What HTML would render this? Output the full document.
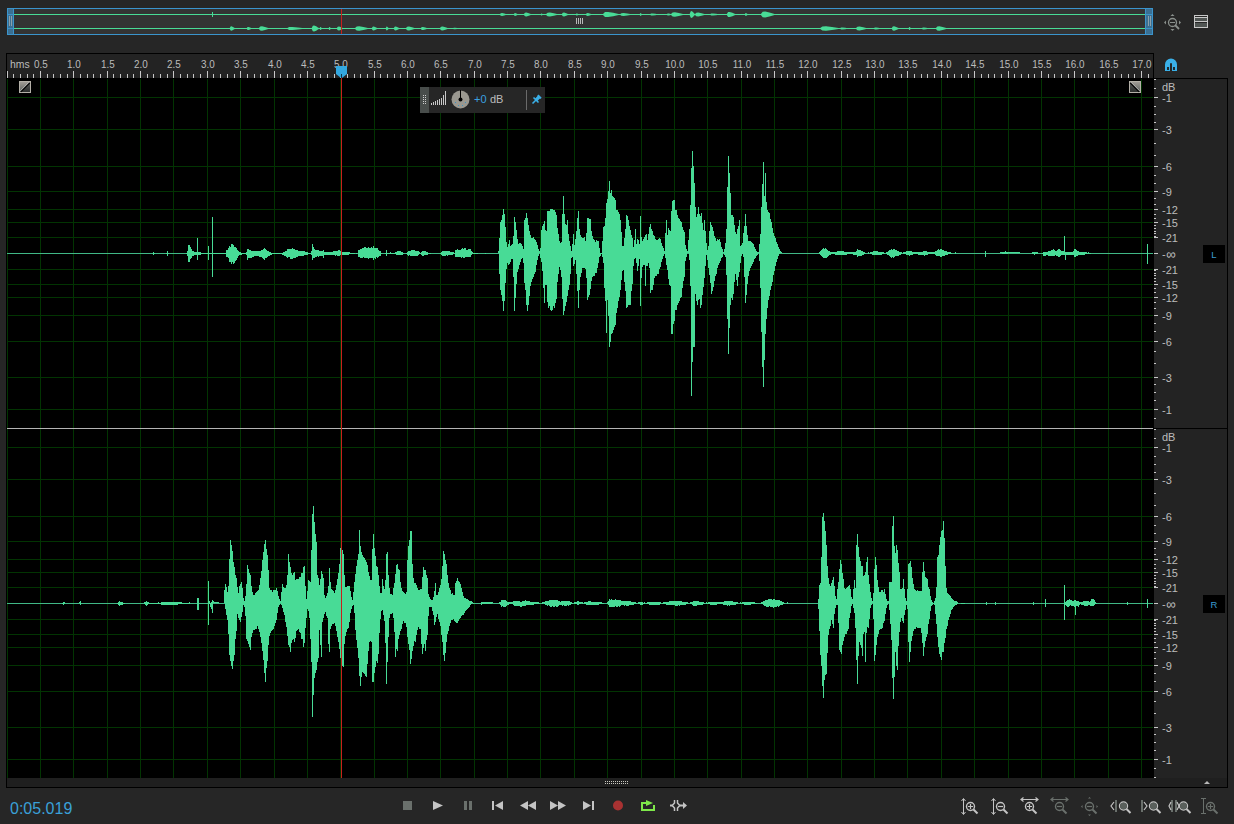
<!DOCTYPE html>
<html><head><meta charset="utf-8"><style>
html,body{margin:0;padding:0;background:#262626;width:1234px;height:824px;overflow:hidden}
svg{display:block;font-family:"Liberation Sans",sans-serif}
</style></head><body>
<svg width="1234" height="824" viewBox="0 0 1234 824" shape-rendering="crispEdges">
<rect x="7" y="8" width="1146" height="27" fill="#3a94cc" />
<rect x="8" y="9" width="1144" height="25" fill="#333333" />
<rect x="14" y="14" width="1131" height="1" fill="#48db96" />
<rect x="14" y="28" width="1131" height="1" fill="#48db96" />
<rect x="7" y="8" width="7" height="27" fill="#3a94cc" />
<rect x="8" y="9" width="5" height="5" fill="#3b6f92" />
<rect x="8" y="15" width="5" height="13" fill="#3b6f92" />
<rect x="8" y="29" width="5" height="5" fill="#3b6f92" />
<rect x="9" y="16" width="1" height="10" fill="#8aa0ac" />
<rect x="11" y="16" width="1" height="10" fill="#8aa0ac" />
<rect x="1145" y="8" width="8" height="27" fill="#3a94cc" />
<rect x="1146" y="9" width="6" height="5" fill="#3b6f92" />
<rect x="1146" y="15" width="6" height="13" fill="#3b6f92" />
<rect x="1146" y="29" width="6" height="5" fill="#3b6f92" />
<rect x="1148" y="16" width="1" height="10" fill="#8aa0ac" />
<rect x="1150" y="16" width="1" height="10" fill="#8aa0ac" />
<path d="M499.5,14.5 L500.8,13.2 L502.1,13.0 L504.2,13.4 L505.9,14.1 L508.0,14.5 L505.9,14.9 L504.2,15.6 L502.1,16.0 L500.8,15.8Z" fill="#48db96" shape-rendering="geometricPrecision"/>
<path d="M513.5,14.5 L514.5,13.2 L515.2,13.0 L516.4,13.4 L517.4,14.1 L519.0,14.5 L517.4,14.9 L516.4,15.6 L515.2,16.0 L514.5,15.8Z" fill="#48db96" shape-rendering="geometricPrecision"/>
<path d="M523.5,14.5 L525.0,12.8 L526.4,12.6 L528.8,13.2 L530.8,13.9 L533.0,14.5 L530.8,15.1 L528.8,15.8 L526.4,16.4 L525.0,16.2Z" fill="#48db96" shape-rendering="geometricPrecision"/>
<path d="M540.5,14.5 L541.2,13.5 L541.6,13.4 L542.2,13.7 L542.7,14.2 L544.0,14.5 L542.7,14.8 L542.2,15.3 L541.6,15.6 L541.2,15.5Z" fill="#48db96" shape-rendering="geometricPrecision"/>
<path d="M545.5,14.5 L547.6,12.8 L549.9,12.6 L553.8,13.2 L557.0,13.9 L560.0,14.5 L557.0,15.1 L553.8,15.8 L549.9,16.4 L547.6,16.2Z" fill="#48db96" shape-rendering="geometricPrecision"/>
<path d="M561.5,14.5 L562.8,12.8 L564.1,12.6 L566.2,13.2 L568.0,13.9 L570.0,14.5 L568.0,15.1 L566.2,15.8 L564.1,16.4 L562.8,16.2Z" fill="#48db96" shape-rendering="geometricPrecision"/>
<path d="M575.5,14.5 L576.4,13.5 L576.9,13.4 L577.8,13.7 L578.5,14.2 L580.0,14.5 L578.5,14.8 L577.8,15.3 L576.9,15.6 L576.4,15.5Z" fill="#48db96" shape-rendering="geometricPrecision"/>
<path d="M585.5,14.5 L586.7,13.2 L587.8,13.0 L589.6,13.4 L591.1,14.1 L593.0,14.5 L591.1,14.9 L589.6,15.6 L587.8,16.0 L586.7,15.8Z" fill="#48db96" shape-rendering="geometricPrecision"/>
<path d="M602.5,14.5 L605.0,12.1 L608.1,11.9 L613.2,12.7 L617.5,13.7 L621.0,14.5 L617.5,15.3 L613.2,16.3 L608.1,17.1 L605.0,16.9Z" fill="#48db96" shape-rendering="geometricPrecision"/>
<path d="M619.5,14.5 L621.4,13.2 L623.6,13.0 L627.2,13.4 L630.2,14.1 L633.0,14.5 L630.2,14.9 L627.2,15.6 L623.6,16.0 L621.4,15.8Z" fill="#48db96" shape-rendering="geometricPrecision"/>
<path d="M639.5,14.5 L640.2,13.2 L640.6,13.0 L641.2,13.4 L641.7,14.1 L643.0,14.5 L641.7,14.9 L641.2,15.6 L640.6,16.0 L640.2,15.8Z" fill="#48db96" shape-rendering="geometricPrecision"/>
<path d="M649.5,14.5 L651.1,13.5 L652.7,13.4 L655.4,13.7 L657.6,14.2 L660.0,14.5 L657.6,14.8 L655.4,15.3 L652.7,15.6 L651.1,15.5Z" fill="#48db96" shape-rendering="geometricPrecision"/>
<path d="M666.5,14.5 L667.6,13.5 L668.5,13.4 L670.0,13.7 L671.2,14.2 L673.0,14.5 L671.2,14.8 L670.0,15.3 L668.5,15.6 L667.6,15.5Z" fill="#48db96" shape-rendering="geometricPrecision"/>
<path d="M670.5,14.5 L672.6,12.5 L674.9,12.2 L678.8,12.9 L682.0,13.8 L685.0,14.5 L682.0,15.2 L678.8,16.1 L674.9,16.8 L672.6,16.5Z" fill="#48db96" shape-rendering="geometricPrecision"/>
<path d="M689.5,14.5 L690.6,11.5 L691.5,11.1 L693.0,12.1 L694.2,13.5 L696.0,14.5 L694.2,15.5 L693.0,16.9 L691.5,17.9 L690.6,17.5Z" fill="#48db96" shape-rendering="geometricPrecision"/>
<path d="M694.5,14.5 L696.3,12.8 L698.3,12.6 L701.6,13.2 L704.4,13.9 L707.0,14.5 L704.4,15.1 L701.6,15.8 L698.3,16.4 L696.3,16.2Z" fill="#48db96" shape-rendering="geometricPrecision"/>
<path d="M709.5,14.5 L711.2,13.5 L713.0,13.4 L716.0,13.7 L718.5,14.2 L721.0,14.5 L718.5,14.8 L716.0,15.3 L713.0,15.6 L711.2,15.5Z" fill="#48db96" shape-rendering="geometricPrecision"/>
<path d="M726.5,14.5 L728.1,12.1 L729.7,11.9 L732.4,12.7 L734.6,13.7 L737.0,14.5 L734.6,15.3 L732.4,16.3 L729.7,17.1 L728.1,16.9Z" fill="#48db96" shape-rendering="geometricPrecision"/>
<path d="M744.5,14.5 L745.4,13.2 L745.9,13.0 L746.8,13.4 L747.5,14.1 L749.0,14.5 L747.5,14.9 L746.8,15.6 L745.9,16.0 L745.4,15.8Z" fill="#48db96" shape-rendering="geometricPrecision"/>
<path d="M760.5,14.5 L762.7,11.8 L765.2,11.5 L769.4,12.4 L772.9,13.6 L776.0,14.5 L772.9,15.4 L769.4,16.6 L765.2,17.5 L762.7,17.2Z" fill="#48db96" shape-rendering="geometricPrecision"/>
<rect x="212" y="12" width="1" height="5" fill="#48db96" />
<path d="M229.5,28.5 L230.6,26.5 L231.5,26.2 L233.0,26.9 L234.2,27.8 L236.0,28.5 L234.2,29.2 L233.0,30.1 L231.5,30.8 L230.6,30.5Z" fill="#48db96" shape-rendering="geometricPrecision"/>
<path d="M246.5,28.5 L247.6,27.1 L248.5,27.0 L250.0,27.4 L251.2,28.1 L253.0,28.5 L251.2,28.9 L250.0,29.6 L248.5,30.0 L247.6,29.9Z" fill="#48db96" shape-rendering="geometricPrecision"/>
<path d="M258.5,28.5 L260.2,26.5 L262.0,26.2 L265.0,26.9 L267.5,27.8 L270.0,28.5 L267.5,29.2 L265.0,30.1 L262.0,30.8 L260.2,30.5Z" fill="#48db96" shape-rendering="geometricPrecision"/>
<path d="M286.5,28.5 L289.2,27.1 L292.4,27.0 L297.8,27.4 L302.3,28.1 L306.0,28.5 L302.3,28.9 L297.8,29.6 L292.4,30.0 L289.2,29.9Z" fill="#48db96" shape-rendering="geometricPrecision"/>
<path d="M311.5,28.5 L312.8,25.7 L314.1,25.4 L316.2,26.3 L317.9,27.6 L320.0,28.5 L317.9,29.4 L316.2,30.7 L314.1,31.6 L312.8,31.3Z" fill="#48db96" shape-rendering="geometricPrecision"/>
<path d="M319.5,28.5 L320.2,27.1 L320.6,27.0 L321.2,27.4 L321.7,28.1 L323.0,28.5 L321.7,28.9 L321.2,29.6 L320.6,30.0 L320.2,29.9Z" fill="#48db96" shape-rendering="geometricPrecision"/>
<path d="M328.5,28.5 L329.2,27.1 L329.6,27.0 L330.2,27.4 L330.7,28.1 L332.0,28.5 L330.7,28.9 L330.2,29.6 L329.6,30.0 L329.2,29.9Z" fill="#48db96" shape-rendering="geometricPrecision"/>
<path d="M336.5,28.5 L337.8,26.8 L339.1,26.6 L341.2,27.2 L342.9,27.9 L345.0,28.5 L342.9,29.1 L341.2,29.8 L339.1,30.4 L337.8,30.2Z" fill="#48db96" shape-rendering="geometricPrecision"/>
<path d="M354.5,28.5 L356.7,26.5 L359.2,26.2 L363.4,26.9 L366.9,27.8 L370.0,28.5 L366.9,29.2 L363.4,30.1 L359.2,30.8 L356.7,30.5Z" fill="#48db96" shape-rendering="geometricPrecision"/>
<path d="M371.5,28.5 L372.7,26.8 L373.8,26.6 L375.6,27.2 L377.1,27.9 L379.0,28.5 L377.1,29.1 L375.6,29.8 L373.8,30.4 L372.7,30.2Z" fill="#48db96" shape-rendering="geometricPrecision"/>
<path d="M385.5,28.5 L386.4,26.8 L386.9,26.6 L387.8,27.2 L388.6,27.9 L390.0,28.5 L388.6,29.1 L387.8,29.8 L386.9,30.4 L386.4,30.2Z" fill="#48db96" shape-rendering="geometricPrecision"/>
<path d="M393.5,28.5 L394.7,26.8 L395.8,26.6 L397.6,27.2 L399.1,27.9 L401.0,28.5 L399.1,29.1 L397.6,29.8 L395.8,30.4 L394.7,30.2Z" fill="#48db96" shape-rendering="geometricPrecision"/>
<path d="M405.5,28.5 L407.2,26.8 L409.0,26.6 L412.0,27.2 L414.5,27.9 L417.0,28.5 L414.5,29.1 L412.0,29.8 L409.0,30.4 L407.2,30.2Z" fill="#48db96" shape-rendering="geometricPrecision"/>
<path d="M420.5,28.5 L421.8,27.1 L423.1,27.0 L425.2,27.4 L426.9,28.1 L429.0,28.5 L426.9,28.9 L425.2,29.6 L423.1,30.0 L421.8,29.9Z" fill="#48db96" shape-rendering="geometricPrecision"/>
<path d="M439.5,28.5 L441.1,26.8 L442.7,26.6 L445.4,27.2 L447.6,27.9 L450.0,28.5 L447.6,29.1 L445.4,29.8 L442.7,30.4 L441.1,30.2Z" fill="#48db96" shape-rendering="geometricPrecision"/>
<path d="M452.5,28.5 L453.8,27.8 L455.1,27.8 L457.2,28.0 L458.9,28.3 L461.0,28.5 L458.9,28.7 L457.2,29.0 L455.1,29.2 L453.8,29.2Z" fill="#48db96" shape-rendering="geometricPrecision"/>
<path d="M819.5,28.5 L822.4,26.5 L826.0,26.2 L832.0,26.9 L837.0,27.8 L841.0,28.5 L837.0,29.2 L832.0,30.1 L826.0,30.8 L822.4,30.5Z" fill="#48db96" shape-rendering="geometricPrecision"/>
<path d="M839.5,28.5 L841.1,27.5 L842.7,27.4 L845.4,27.7 L847.6,28.2 L850.0,28.5 L847.6,28.8 L845.4,29.3 L842.7,29.6 L841.1,29.5Z" fill="#48db96" shape-rendering="geometricPrecision"/>
<path d="M855.5,28.5 L857.4,26.8 L859.6,26.6 L863.2,27.2 L866.2,27.9 L869.0,28.5 L866.2,29.1 L863.2,29.8 L859.6,30.4 L857.4,30.2Z" fill="#48db96" shape-rendering="geometricPrecision"/>
<path d="M873.5,28.5 L874.8,27.5 L876.1,27.4 L878.2,27.7 L880.0,28.2 L882.0,28.5 L880.0,28.8 L878.2,29.3 L876.1,29.6 L874.8,29.5Z" fill="#48db96" shape-rendering="geometricPrecision"/>
<path d="M891.5,28.5 L892.8,26.5 L894.1,26.2 L896.2,26.9 L898.0,27.8 L900.0,28.5 L898.0,29.2 L896.2,30.1 L894.1,30.8 L892.8,30.5Z" fill="#48db96" shape-rendering="geometricPrecision"/>
<path d="M908.5,28.5 L909.2,27.1 L909.6,27.0 L910.2,27.4 L910.7,28.1 L912.0,28.5 L910.7,28.9 L910.2,29.6 L909.6,30.0 L909.2,29.9Z" fill="#48db96" shape-rendering="geometricPrecision"/>
<path d="M921.5,28.5 L922.8,27.5 L924.1,27.4 L926.2,27.7 L928.0,28.2 L930.0,28.5 L928.0,28.8 L926.2,29.3 L924.1,29.6 L922.8,29.5Z" fill="#48db96" shape-rendering="geometricPrecision"/>
<path d="M935.5,28.5 L937.3,26.5 L939.3,26.2 L942.6,26.9 L945.4,27.8 L948.0,28.5 L945.4,29.2 L942.6,30.1 L939.3,30.8 L937.3,30.5Z" fill="#48db96" shape-rendering="geometricPrecision"/>
<rect x="341" y="9" width="1" height="25" fill="#c8201c" />
<rect x="576" y="18" width="1" height="6" fill="#b8b8b8" />
<rect x="578" y="18" width="1" height="6" fill="#b8b8b8" />
<rect x="580" y="18" width="1" height="6" fill="#b8b8b8" />
<rect x="582" y="18" width="1" height="6" fill="#b8b8b8" />
<rect x="6" y="53" width="1148" height="1" fill="#000" />
<rect x="7" y="54" width="1146" height="24" fill="#232323" />
<rect x="1153" y="53" width="1" height="26" fill="#000" />
<rect x="7" y="71" width="1" height="7" fill="#c8c8c8" />
<rect x="13" y="74" width="1" height="4" fill="#c8c8c8" />
<rect x="20" y="74" width="1" height="4" fill="#c8c8c8" />
<rect x="27" y="74" width="1" height="4" fill="#c8c8c8" />
<rect x="33" y="74" width="1" height="4" fill="#c8c8c8" />
<rect x="40" y="71" width="1" height="7" fill="#c8c8c8" />
<rect x="47" y="74" width="1" height="4" fill="#c8c8c8" />
<rect x="53" y="74" width="1" height="4" fill="#c8c8c8" />
<rect x="60" y="74" width="1" height="4" fill="#c8c8c8" />
<rect x="67" y="74" width="1" height="4" fill="#c8c8c8" />
<rect x="73" y="71" width="1" height="7" fill="#c8c8c8" />
<rect x="80" y="74" width="1" height="4" fill="#c8c8c8" />
<rect x="87" y="74" width="1" height="4" fill="#c8c8c8" />
<rect x="93" y="74" width="1" height="4" fill="#c8c8c8" />
<rect x="100" y="74" width="1" height="4" fill="#c8c8c8" />
<rect x="107" y="71" width="1" height="7" fill="#c8c8c8" />
<rect x="113" y="74" width="1" height="4" fill="#c8c8c8" />
<rect x="120" y="74" width="1" height="4" fill="#c8c8c8" />
<rect x="127" y="74" width="1" height="4" fill="#c8c8c8" />
<rect x="133" y="74" width="1" height="4" fill="#c8c8c8" />
<rect x="140" y="71" width="1" height="7" fill="#c8c8c8" />
<rect x="147" y="74" width="1" height="4" fill="#c8c8c8" />
<rect x="153" y="74" width="1" height="4" fill="#c8c8c8" />
<rect x="160" y="74" width="1" height="4" fill="#c8c8c8" />
<rect x="167" y="74" width="1" height="4" fill="#c8c8c8" />
<rect x="173" y="71" width="1" height="7" fill="#c8c8c8" />
<rect x="180" y="74" width="1" height="4" fill="#c8c8c8" />
<rect x="187" y="74" width="1" height="4" fill="#c8c8c8" />
<rect x="193" y="74" width="1" height="4" fill="#c8c8c8" />
<rect x="200" y="74" width="1" height="4" fill="#c8c8c8" />
<rect x="207" y="71" width="1" height="7" fill="#c8c8c8" />
<rect x="213" y="74" width="1" height="4" fill="#c8c8c8" />
<rect x="220" y="74" width="1" height="4" fill="#c8c8c8" />
<rect x="227" y="74" width="1" height="4" fill="#c8c8c8" />
<rect x="234" y="74" width="1" height="4" fill="#c8c8c8" />
<rect x="240" y="71" width="1" height="7" fill="#c8c8c8" />
<rect x="247" y="74" width="1" height="4" fill="#c8c8c8" />
<rect x="254" y="74" width="1" height="4" fill="#c8c8c8" />
<rect x="260" y="74" width="1" height="4" fill="#c8c8c8" />
<rect x="267" y="74" width="1" height="4" fill="#c8c8c8" />
<rect x="274" y="71" width="1" height="7" fill="#c8c8c8" />
<rect x="280" y="74" width="1" height="4" fill="#c8c8c8" />
<rect x="287" y="74" width="1" height="4" fill="#c8c8c8" />
<rect x="294" y="74" width="1" height="4" fill="#c8c8c8" />
<rect x="300" y="74" width="1" height="4" fill="#c8c8c8" />
<rect x="307" y="71" width="1" height="7" fill="#c8c8c8" />
<rect x="314" y="74" width="1" height="4" fill="#c8c8c8" />
<rect x="320" y="74" width="1" height="4" fill="#c8c8c8" />
<rect x="327" y="74" width="1" height="4" fill="#c8c8c8" />
<rect x="334" y="74" width="1" height="4" fill="#c8c8c8" />
<rect x="340" y="71" width="1" height="7" fill="#c8c8c8" />
<rect x="347" y="74" width="1" height="4" fill="#c8c8c8" />
<rect x="354" y="74" width="1" height="4" fill="#c8c8c8" />
<rect x="360" y="74" width="1" height="4" fill="#c8c8c8" />
<rect x="367" y="74" width="1" height="4" fill="#c8c8c8" />
<rect x="374" y="71" width="1" height="7" fill="#c8c8c8" />
<rect x="380" y="74" width="1" height="4" fill="#c8c8c8" />
<rect x="387" y="74" width="1" height="4" fill="#c8c8c8" />
<rect x="394" y="74" width="1" height="4" fill="#c8c8c8" />
<rect x="400" y="74" width="1" height="4" fill="#c8c8c8" />
<rect x="407" y="71" width="1" height="7" fill="#c8c8c8" />
<rect x="414" y="74" width="1" height="4" fill="#c8c8c8" />
<rect x="420" y="74" width="1" height="4" fill="#c8c8c8" />
<rect x="427" y="74" width="1" height="4" fill="#c8c8c8" />
<rect x="434" y="74" width="1" height="4" fill="#c8c8c8" />
<rect x="440" y="71" width="1" height="7" fill="#c8c8c8" />
<rect x="447" y="74" width="1" height="4" fill="#c8c8c8" />
<rect x="454" y="74" width="1" height="4" fill="#c8c8c8" />
<rect x="460" y="74" width="1" height="4" fill="#c8c8c8" />
<rect x="467" y="74" width="1" height="4" fill="#c8c8c8" />
<rect x="474" y="71" width="1" height="7" fill="#c8c8c8" />
<rect x="480" y="74" width="1" height="4" fill="#c8c8c8" />
<rect x="487" y="74" width="1" height="4" fill="#c8c8c8" />
<rect x="494" y="74" width="1" height="4" fill="#c8c8c8" />
<rect x="500" y="74" width="1" height="4" fill="#c8c8c8" />
<rect x="507" y="71" width="1" height="7" fill="#c8c8c8" />
<rect x="514" y="74" width="1" height="4" fill="#c8c8c8" />
<rect x="520" y="74" width="1" height="4" fill="#c8c8c8" />
<rect x="527" y="74" width="1" height="4" fill="#c8c8c8" />
<rect x="534" y="74" width="1" height="4" fill="#c8c8c8" />
<rect x="540" y="71" width="1" height="7" fill="#c8c8c8" />
<rect x="547" y="74" width="1" height="4" fill="#c8c8c8" />
<rect x="554" y="74" width="1" height="4" fill="#c8c8c8" />
<rect x="560" y="74" width="1" height="4" fill="#c8c8c8" />
<rect x="567" y="74" width="1" height="4" fill="#c8c8c8" />
<rect x="574" y="71" width="1" height="7" fill="#c8c8c8" />
<rect x="580" y="74" width="1" height="4" fill="#c8c8c8" />
<rect x="587" y="74" width="1" height="4" fill="#c8c8c8" />
<rect x="594" y="74" width="1" height="4" fill="#c8c8c8" />
<rect x="601" y="74" width="1" height="4" fill="#c8c8c8" />
<rect x="607" y="71" width="1" height="7" fill="#c8c8c8" />
<rect x="614" y="74" width="1" height="4" fill="#c8c8c8" />
<rect x="621" y="74" width="1" height="4" fill="#c8c8c8" />
<rect x="627" y="74" width="1" height="4" fill="#c8c8c8" />
<rect x="634" y="74" width="1" height="4" fill="#c8c8c8" />
<rect x="641" y="71" width="1" height="7" fill="#c8c8c8" />
<rect x="647" y="74" width="1" height="4" fill="#c8c8c8" />
<rect x="654" y="74" width="1" height="4" fill="#c8c8c8" />
<rect x="661" y="74" width="1" height="4" fill="#c8c8c8" />
<rect x="667" y="74" width="1" height="4" fill="#c8c8c8" />
<rect x="674" y="71" width="1" height="7" fill="#c8c8c8" />
<rect x="681" y="74" width="1" height="4" fill="#c8c8c8" />
<rect x="687" y="74" width="1" height="4" fill="#c8c8c8" />
<rect x="694" y="74" width="1" height="4" fill="#c8c8c8" />
<rect x="701" y="74" width="1" height="4" fill="#c8c8c8" />
<rect x="707" y="71" width="1" height="7" fill="#c8c8c8" />
<rect x="714" y="74" width="1" height="4" fill="#c8c8c8" />
<rect x="721" y="74" width="1" height="4" fill="#c8c8c8" />
<rect x="727" y="74" width="1" height="4" fill="#c8c8c8" />
<rect x="734" y="74" width="1" height="4" fill="#c8c8c8" />
<rect x="741" y="71" width="1" height="7" fill="#c8c8c8" />
<rect x="747" y="74" width="1" height="4" fill="#c8c8c8" />
<rect x="754" y="74" width="1" height="4" fill="#c8c8c8" />
<rect x="761" y="74" width="1" height="4" fill="#c8c8c8" />
<rect x="767" y="74" width="1" height="4" fill="#c8c8c8" />
<rect x="774" y="71" width="1" height="7" fill="#c8c8c8" />
<rect x="781" y="74" width="1" height="4" fill="#c8c8c8" />
<rect x="787" y="74" width="1" height="4" fill="#c8c8c8" />
<rect x="794" y="74" width="1" height="4" fill="#c8c8c8" />
<rect x="801" y="74" width="1" height="4" fill="#c8c8c8" />
<rect x="807" y="71" width="1" height="7" fill="#c8c8c8" />
<rect x="814" y="74" width="1" height="4" fill="#c8c8c8" />
<rect x="821" y="74" width="1" height="4" fill="#c8c8c8" />
<rect x="827" y="74" width="1" height="4" fill="#c8c8c8" />
<rect x="834" y="74" width="1" height="4" fill="#c8c8c8" />
<rect x="841" y="71" width="1" height="7" fill="#c8c8c8" />
<rect x="847" y="74" width="1" height="4" fill="#c8c8c8" />
<rect x="854" y="74" width="1" height="4" fill="#c8c8c8" />
<rect x="861" y="74" width="1" height="4" fill="#c8c8c8" />
<rect x="867" y="74" width="1" height="4" fill="#c8c8c8" />
<rect x="874" y="71" width="1" height="7" fill="#c8c8c8" />
<rect x="881" y="74" width="1" height="4" fill="#c8c8c8" />
<rect x="887" y="74" width="1" height="4" fill="#c8c8c8" />
<rect x="894" y="74" width="1" height="4" fill="#c8c8c8" />
<rect x="901" y="74" width="1" height="4" fill="#c8c8c8" />
<rect x="907" y="71" width="1" height="7" fill="#c8c8c8" />
<rect x="914" y="74" width="1" height="4" fill="#c8c8c8" />
<rect x="921" y="74" width="1" height="4" fill="#c8c8c8" />
<rect x="927" y="74" width="1" height="4" fill="#c8c8c8" />
<rect x="934" y="74" width="1" height="4" fill="#c8c8c8" />
<rect x="941" y="71" width="1" height="7" fill="#c8c8c8" />
<rect x="947" y="74" width="1" height="4" fill="#c8c8c8" />
<rect x="954" y="74" width="1" height="4" fill="#c8c8c8" />
<rect x="961" y="74" width="1" height="4" fill="#c8c8c8" />
<rect x="968" y="74" width="1" height="4" fill="#c8c8c8" />
<rect x="974" y="71" width="1" height="7" fill="#c8c8c8" />
<rect x="981" y="74" width="1" height="4" fill="#c8c8c8" />
<rect x="988" y="74" width="1" height="4" fill="#c8c8c8" />
<rect x="994" y="74" width="1" height="4" fill="#c8c8c8" />
<rect x="1001" y="74" width="1" height="4" fill="#c8c8c8" />
<rect x="1008" y="71" width="1" height="7" fill="#c8c8c8" />
<rect x="1014" y="74" width="1" height="4" fill="#c8c8c8" />
<rect x="1021" y="74" width="1" height="4" fill="#c8c8c8" />
<rect x="1028" y="74" width="1" height="4" fill="#c8c8c8" />
<rect x="1034" y="74" width="1" height="4" fill="#c8c8c8" />
<rect x="1041" y="71" width="1" height="7" fill="#c8c8c8" />
<rect x="1048" y="74" width="1" height="4" fill="#c8c8c8" />
<rect x="1054" y="74" width="1" height="4" fill="#c8c8c8" />
<rect x="1061" y="74" width="1" height="4" fill="#c8c8c8" />
<rect x="1068" y="74" width="1" height="4" fill="#c8c8c8" />
<rect x="1074" y="71" width="1" height="7" fill="#c8c8c8" />
<rect x="1081" y="74" width="1" height="4" fill="#c8c8c8" />
<rect x="1088" y="74" width="1" height="4" fill="#c8c8c8" />
<rect x="1094" y="74" width="1" height="4" fill="#c8c8c8" />
<rect x="1101" y="74" width="1" height="4" fill="#c8c8c8" />
<rect x="1108" y="71" width="1" height="7" fill="#c8c8c8" />
<rect x="1114" y="74" width="1" height="4" fill="#c8c8c8" />
<rect x="1121" y="74" width="1" height="4" fill="#c8c8c8" />
<rect x="1128" y="74" width="1" height="4" fill="#c8c8c8" />
<rect x="1134" y="74" width="1" height="4" fill="#c8c8c8" />
<rect x="1141" y="71" width="1" height="7" fill="#c8c8c8" />
<rect x="1148" y="74" width="1" height="4" fill="#c8c8c8" />
<text x="41" y="68" font-size="11" fill="#bcbcbc" text-anchor="middle" transform="translate(41,0) scale(0.9,1) translate(-41,0)">0.5</text>
<text x="10" y="68" font-size="11" fill="#bcbcbc" text-anchor="start" transform="translate(10,0) scale(0.95,1) translate(-10,0)">hms</text>
<text x="74" y="68" font-size="11" fill="#bcbcbc" text-anchor="middle" transform="translate(74,0) scale(0.9,1) translate(-74,0)">1.0</text>
<text x="108" y="68" font-size="11" fill="#bcbcbc" text-anchor="middle" transform="translate(108,0) scale(0.9,1) translate(-108,0)">1.5</text>
<text x="141" y="68" font-size="11" fill="#bcbcbc" text-anchor="middle" transform="translate(141,0) scale(0.9,1) translate(-141,0)">2.0</text>
<text x="174" y="68" font-size="11" fill="#bcbcbc" text-anchor="middle" transform="translate(174,0) scale(0.9,1) translate(-174,0)">2.5</text>
<text x="208" y="68" font-size="11" fill="#bcbcbc" text-anchor="middle" transform="translate(208,0) scale(0.9,1) translate(-208,0)">3.0</text>
<text x="241" y="68" font-size="11" fill="#bcbcbc" text-anchor="middle" transform="translate(241,0) scale(0.9,1) translate(-241,0)">3.5</text>
<text x="275" y="68" font-size="11" fill="#bcbcbc" text-anchor="middle" transform="translate(275,0) scale(0.9,1) translate(-275,0)">4.0</text>
<text x="308" y="68" font-size="11" fill="#bcbcbc" text-anchor="middle" transform="translate(308,0) scale(0.9,1) translate(-308,0)">4.5</text>
<text x="341" y="68" font-size="11" fill="#bcbcbc" text-anchor="middle" transform="translate(341,0) scale(0.9,1) translate(-341,0)">5.0</text>
<text x="375" y="68" font-size="11" fill="#bcbcbc" text-anchor="middle" transform="translate(375,0) scale(0.9,1) translate(-375,0)">5.5</text>
<text x="408" y="68" font-size="11" fill="#bcbcbc" text-anchor="middle" transform="translate(408,0) scale(0.9,1) translate(-408,0)">6.0</text>
<text x="441" y="68" font-size="11" fill="#bcbcbc" text-anchor="middle" transform="translate(441,0) scale(0.9,1) translate(-441,0)">6.5</text>
<text x="475" y="68" font-size="11" fill="#bcbcbc" text-anchor="middle" transform="translate(475,0) scale(0.9,1) translate(-475,0)">7.0</text>
<text x="508" y="68" font-size="11" fill="#bcbcbc" text-anchor="middle" transform="translate(508,0) scale(0.9,1) translate(-508,0)">7.5</text>
<text x="541" y="68" font-size="11" fill="#bcbcbc" text-anchor="middle" transform="translate(541,0) scale(0.9,1) translate(-541,0)">8.0</text>
<text x="575" y="68" font-size="11" fill="#bcbcbc" text-anchor="middle" transform="translate(575,0) scale(0.9,1) translate(-575,0)">8.5</text>
<text x="608" y="68" font-size="11" fill="#bcbcbc" text-anchor="middle" transform="translate(608,0) scale(0.9,1) translate(-608,0)">9.0</text>
<text x="642" y="68" font-size="11" fill="#bcbcbc" text-anchor="middle" transform="translate(642,0) scale(0.9,1) translate(-642,0)">9.5</text>
<text x="675" y="68" font-size="11" fill="#bcbcbc" text-anchor="middle" transform="translate(675,0) scale(0.9,1) translate(-675,0)">10.0</text>
<text x="708" y="68" font-size="11" fill="#bcbcbc" text-anchor="middle" transform="translate(708,0) scale(0.9,1) translate(-708,0)">10.5</text>
<text x="742" y="68" font-size="11" fill="#bcbcbc" text-anchor="middle" transform="translate(742,0) scale(0.9,1) translate(-742,0)">11.0</text>
<text x="775" y="68" font-size="11" fill="#bcbcbc" text-anchor="middle" transform="translate(775,0) scale(0.9,1) translate(-775,0)">11.5</text>
<text x="808" y="68" font-size="11" fill="#bcbcbc" text-anchor="middle" transform="translate(808,0) scale(0.9,1) translate(-808,0)">12.0</text>
<text x="842" y="68" font-size="11" fill="#bcbcbc" text-anchor="middle" transform="translate(842,0) scale(0.9,1) translate(-842,0)">12.5</text>
<text x="875" y="68" font-size="11" fill="#bcbcbc" text-anchor="middle" transform="translate(875,0) scale(0.9,1) translate(-875,0)">13.0</text>
<text x="908" y="68" font-size="11" fill="#bcbcbc" text-anchor="middle" transform="translate(908,0) scale(0.9,1) translate(-908,0)">13.5</text>
<text x="942" y="68" font-size="11" fill="#bcbcbc" text-anchor="middle" transform="translate(942,0) scale(0.9,1) translate(-942,0)">14.0</text>
<text x="975" y="68" font-size="11" fill="#bcbcbc" text-anchor="middle" transform="translate(975,0) scale(0.9,1) translate(-975,0)">14.5</text>
<text x="1009" y="68" font-size="11" fill="#bcbcbc" text-anchor="middle" transform="translate(1009,0) scale(0.9,1) translate(-1009,0)">15.0</text>
<text x="1042" y="68" font-size="11" fill="#bcbcbc" text-anchor="middle" transform="translate(1042,0) scale(0.9,1) translate(-1042,0)">15.5</text>
<text x="1075" y="68" font-size="11" fill="#bcbcbc" text-anchor="middle" transform="translate(1075,0) scale(0.9,1) translate(-1075,0)">16.0</text>
<text x="1109" y="68" font-size="11" fill="#bcbcbc" text-anchor="middle" transform="translate(1109,0) scale(0.9,1) translate(-1109,0)">16.5</text>
<text x="1142" y="68" font-size="11" fill="#bcbcbc" text-anchor="middle" transform="translate(1142,0) scale(0.9,1) translate(-1142,0)">17.0</text>
<rect x="6" y="54" width="1" height="734" fill="#000" />
<rect x="7" y="78" width="1147" height="700" fill="#000" />
<rect x="7" y="97" width="1146" height="1" fill="#023402" />
<rect x="7" y="409" width="1146" height="1" fill="#023402" />
<rect x="7" y="129" width="1146" height="1" fill="#023402" />
<rect x="7" y="377" width="1146" height="1" fill="#023402" />
<rect x="7" y="166" width="1146" height="1" fill="#023402" />
<rect x="7" y="341" width="1146" height="1" fill="#023402" />
<rect x="7" y="191" width="1146" height="1" fill="#023402" />
<rect x="7" y="315" width="1146" height="1" fill="#023402" />
<rect x="7" y="209" width="1146" height="1" fill="#023402" />
<rect x="7" y="297" width="1146" height="1" fill="#023402" />
<rect x="7" y="222" width="1146" height="1" fill="#023402" />
<rect x="7" y="284" width="1146" height="1" fill="#023402" />
<rect x="7" y="237" width="1146" height="1" fill="#023402" />
<rect x="7" y="269" width="1146" height="1" fill="#023402" />
<rect x="7" y="447" width="1146" height="1" fill="#023402" />
<rect x="7" y="759" width="1146" height="1" fill="#023402" />
<rect x="7" y="479" width="1146" height="1" fill="#023402" />
<rect x="7" y="727" width="1146" height="1" fill="#023402" />
<rect x="7" y="516" width="1146" height="1" fill="#023402" />
<rect x="7" y="691" width="1146" height="1" fill="#023402" />
<rect x="7" y="541" width="1146" height="1" fill="#023402" />
<rect x="7" y="665" width="1146" height="1" fill="#023402" />
<rect x="7" y="559" width="1146" height="1" fill="#023402" />
<rect x="7" y="647" width="1146" height="1" fill="#023402" />
<rect x="7" y="572" width="1146" height="1" fill="#023402" />
<rect x="7" y="634" width="1146" height="1" fill="#023402" />
<rect x="7" y="587" width="1146" height="1" fill="#023402" />
<rect x="7" y="619" width="1146" height="1" fill="#023402" />
<rect x="7" y="79" width="1" height="699" fill="#023402" />
<rect x="40" y="79" width="1" height="699" fill="#023402" />
<rect x="73" y="79" width="1" height="699" fill="#023402" />
<rect x="107" y="79" width="1" height="699" fill="#023402" />
<rect x="140" y="79" width="1" height="699" fill="#023402" />
<rect x="173" y="79" width="1" height="699" fill="#023402" />
<rect x="207" y="79" width="1" height="699" fill="#023402" />
<rect x="240" y="79" width="1" height="699" fill="#023402" />
<rect x="274" y="79" width="1" height="699" fill="#023402" />
<rect x="307" y="79" width="1" height="699" fill="#023402" />
<rect x="340" y="79" width="1" height="699" fill="#023402" />
<rect x="374" y="79" width="1" height="699" fill="#023402" />
<rect x="407" y="79" width="1" height="699" fill="#023402" />
<rect x="440" y="79" width="1" height="699" fill="#023402" />
<rect x="474" y="79" width="1" height="699" fill="#023402" />
<rect x="507" y="79" width="1" height="699" fill="#023402" />
<rect x="540" y="79" width="1" height="699" fill="#023402" />
<rect x="574" y="79" width="1" height="699" fill="#023402" />
<rect x="607" y="79" width="1" height="699" fill="#023402" />
<rect x="641" y="79" width="1" height="699" fill="#023402" />
<rect x="674" y="79" width="1" height="699" fill="#023402" />
<rect x="707" y="79" width="1" height="699" fill="#023402" />
<rect x="741" y="79" width="1" height="699" fill="#023402" />
<rect x="774" y="79" width="1" height="699" fill="#023402" />
<rect x="807" y="79" width="1" height="699" fill="#023402" />
<rect x="841" y="79" width="1" height="699" fill="#023402" />
<rect x="874" y="79" width="1" height="699" fill="#023402" />
<rect x="907" y="79" width="1" height="699" fill="#023402" />
<rect x="941" y="79" width="1" height="699" fill="#023402" />
<rect x="974" y="79" width="1" height="699" fill="#023402" />
<rect x="1008" y="79" width="1" height="699" fill="#023402" />
<rect x="1041" y="79" width="1" height="699" fill="#023402" />
<rect x="1074" y="79" width="1" height="699" fill="#023402" />
<rect x="1108" y="79" width="1" height="699" fill="#023402" />
<rect x="1141" y="79" width="1" height="699" fill="#023402" />
<rect x="7" y="428" width="1146" height="1" fill="#b4b4b4" />
<rect x="7" y="253" width="1146" height="1" fill="#40b886"/>
<path d="M7,253.0 L8,253.0 L8,253.0 L9,253.0 L9,253.0 L10,253.0 L10,253.0 L11,253.0 L11,253.0 L12,253.0 L12,253.0 L13,253.0 L13,253.0 L14,253.0 L14,253.0 L15,253.0 L15,253.0 L16,253.0 L16,253.0 L17,253.0 L17,253.0 L18,253.0 L18,253.0 L19,253.0 L19,253.0 L20,253.0 L20,253.0 L21,253.0 L21,253.0 L22,253.0 L22,253.0 L23,253.0 L23,253.0 L24,253.0 L24,253.0 L25,253.0 L25,253.0 L26,253.0 L26,253.0 L27,253.0 L27,253.0 L28,253.0 L28,253.0 L29,253.0 L29,253.0 L30,253.0 L30,253.0 L31,253.0 L31,253.0 L32,253.0 L32,253.0 L33,253.0 L33,253.0 L34,253.0 L34,253.0 L35,253.0 L35,253.0 L36,253.0 L36,253.0 L37,253.0 L37,253.0 L38,253.0 L38,253.0 L39,253.0 L39,253.0 L40,253.0 L40,253.0 L41,253.0 L41,253.0 L42,253.0 L42,253.0 L43,253.0 L43,253.0 L44,253.0 L44,253.0 L45,253.0 L45,253.0 L46,253.0 L46,253.0 L47,253.0 L47,253.0 L48,253.0 L48,253.0 L49,253.0 L49,253.0 L50,253.0 L50,253.0 L51,253.0 L51,253.0 L52,253.0 L52,253.0 L53,253.0 L53,253.0 L54,253.0 L54,253.0 L55,253.0 L55,253.0 L56,253.0 L56,253.0 L57,253.0 L57,253.0 L58,253.0 L58,253.0 L59,253.0 L59,253.0 L60,253.0 L60,253.0 L61,253.0 L61,253.0 L62,253.0 L62,253.0 L63,253.0 L63,253.0 L64,253.0 L64,253.0 L65,253.0 L65,253.0 L66,253.0 L66,253.0 L67,253.0 L67,253.0 L68,253.0 L68,253.0 L69,253.0 L69,253.0 L70,253.0 L70,253.0 L71,253.0 L71,253.0 L72,253.0 L72,253.0 L73,253.0 L73,253.0 L74,253.0 L74,253.0 L75,253.0 L75,253.0 L76,253.0 L76,253.0 L77,253.0 L77,253.0 L78,253.0 L78,253.0 L79,253.0 L79,253.0 L80,253.0 L80,253.0 L81,253.0 L81,253.0 L82,253.0 L82,253.0 L83,253.0 L83,253.0 L84,253.0 L84,253.0 L85,253.0 L85,253.0 L86,253.0 L86,253.0 L87,253.0 L87,253.0 L88,253.0 L88,253.0 L89,253.0 L89,253.0 L90,253.0 L90,253.0 L91,253.0 L91,253.0 L92,253.0 L92,253.0 L93,253.0 L93,253.0 L94,253.0 L94,253.0 L95,253.0 L95,253.0 L96,253.0 L96,253.0 L97,253.0 L97,253.0 L98,253.0 L98,253.0 L99,253.0 L99,253.0 L100,253.0 L100,253.0 L101,253.0 L101,253.0 L102,253.0 L102,253.0 L103,253.0 L103,253.0 L104,253.0 L104,253.0 L105,253.0 L105,253.0 L106,253.0 L106,253.0 L107,253.0 L107,253.0 L108,253.0 L108,253.0 L109,253.0 L109,253.0 L110,253.0 L110,253.0 L111,253.0 L111,253.0 L112,253.0 L112,253.0 L113,253.0 L113,253.0 L114,253.0 L114,253.0 L115,253.0 L115,253.0 L116,253.0 L116,253.0 L117,253.0 L117,253.0 L118,253.0 L118,253.0 L119,253.0 L119,253.0 L120,253.0 L120,253.0 L121,253.0 L121,253.0 L122,253.0 L122,253.0 L123,253.0 L123,253.0 L124,253.0 L124,253.0 L125,253.0 L125,253.0 L126,253.0 L126,253.0 L127,253.0 L127,253.0 L128,253.0 L128,253.0 L129,253.0 L129,253.0 L130,253.0 L130,253.0 L131,253.0 L131,253.0 L132,253.0 L132,253.0 L133,253.0 L133,253.0 L134,253.0 L134,253.0 L135,253.0 L135,253.0 L136,253.0 L136,253.0 L137,253.0 L137,253.0 L138,253.0 L138,253.0 L139,253.0 L139,253.0 L140,253.0 L140,253.0 L141,253.0 L141,253.0 L142,253.0 L142,253.0 L143,253.0 L143,253.0 L144,253.0 L144,253.0 L145,253.0 L145,253.0 L146,253.0 L146,253.0 L147,253.0 L147,253.0 L148,253.0 L148,253.0 L149,253.0 L149,253.0 L150,253.0 L150,253.0 L151,253.0 L151,253.0 L152,253.0 L152,253.0 L153,253.0 L153,252.3 L154,252.3 L154,253.0 L155,253.0 L155,253.0 L156,253.0 L156,253.0 L157,253.0 L157,253.0 L158,253.0 L158,253.0 L159,253.0 L159,253.0 L160,253.0 L160,253.0 L161,253.0 L161,253.0 L162,253.0 L162,253.0 L163,253.0 L163,253.0 L164,253.0 L164,253.0 L165,253.0 L165,253.0 L166,253.0 L166,253.0 L167,253.0 L167,251.2 L168,251.2 L168,253.0 L169,253.0 L169,253.0 L170,253.0 L170,253.0 L171,253.0 L171,253.0 L172,253.0 L172,253.0 L173,253.0 L173,253.0 L174,253.0 L174,253.0 L175,253.0 L175,253.0 L176,253.0 L176,253.0 L177,253.0 L177,253.0 L178,253.0 L178,253.0 L179,253.0 L179,253.0 L180,253.0 L180,253.0 L181,253.0 L181,253.0 L182,253.0 L182,253.0 L183,253.0 L183,253.0 L184,253.0 L184,253.0 L185,253.0 L185,253.0 L186,253.0 L186,253.0 L187,253.0 L187,250.9 L188,250.9 L188,245.3 L189,245.3 L189,245.0 L190,245.0 L190,247.4 L191,247.4 L191,248.9 L192,248.9 L192,250.6 L193,250.6 L193,251.2 L194,251.2 L194,251.7 L195,251.7 L195,252.0 L196,252.0 L196,252.4 L197,252.4 L197,238.1 L198,238.1 L198,252.4 L199,252.4 L199,252.1 L200,252.1 L200,252.0 L201,252.0 L201,253.0 L202,253.0 L202,253.0 L203,253.0 L203,253.0 L204,253.0 L204,253.0 L205,253.0 L205,253.0 L206,253.0 L206,253.0 L207,253.0 L207,253.0 L208,253.0 L208,245.8 L209,245.8 L209,253.0 L210,253.0 L210,253.0 L211,253.0 L211,252.7 L212,252.7 L212,217.0 L213,217.0 L213,252.7 L214,252.7 L214,253.0 L215,253.0 L215,253.0 L216,253.0 L216,253.0 L217,253.0 L217,253.0 L218,253.0 L218,253.0 L219,253.0 L219,253.0 L220,253.0 L220,253.0 L221,253.0 L221,253.0 L222,253.0 L222,253.0 L223,253.0 L223,253.0 L224,253.0 L224,253.0 L225,253.0 L225,253.0 L226,253.0 L226,250.4 L227,250.4 L227,249.7 L228,249.7 L228,248.3 L229,248.3 L229,246.4 L230,246.4 L230,246.7 L231,246.7 L231,244.3 L232,244.3 L232,244.1 L233,244.1 L233,244.7 L234,244.7 L234,246.8 L235,246.8 L235,246.7 L236,246.7 L236,248.1 L237,248.1 L237,250.1 L238,250.1 L238,251.1 L239,251.1 L239,251.7 L240,251.7 L240,252.4 L241,252.4 L241,253.0 L242,253.0 L242,253.0 L243,253.0 L243,253.0 L244,253.0 L244,253.0 L245,253.0 L245,253.0 L246,253.0 L246,252.0 L247,252.0 L247,248.9 L248,248.9 L248,249.0 L249,249.0 L249,250.0 L250,250.0 L250,249.7 L251,249.7 L251,250.5 L252,250.5 L252,251.0 L253,251.0 L253,251.0 L254,251.0 L254,251.2 L255,251.2 L255,251.2 L256,251.2 L256,251.2 L257,251.2 L257,251.1 L258,251.1 L258,251.2 L259,251.2 L259,250.9 L260,250.9 L260,250.5 L261,250.5 L261,250.0 L262,250.0 L262,249.5 L263,249.5 L263,249.3 L264,249.3 L264,248.1 L265,248.1 L265,248.9 L266,248.9 L266,250.0 L267,250.0 L267,250.9 L268,250.9 L268,251.4 L269,251.4 L269,251.6 L270,251.6 L270,251.9 L271,251.9 L271,253.0 L272,253.0 L272,252.7 L273,252.7 L273,253.0 L274,253.0 L274,253.0 L275,253.0 L275,253.0 L276,253.0 L276,253.0 L277,253.0 L277,253.0 L278,253.0 L278,253.0 L279,253.0 L279,253.0 L280,253.0 L280,253.0 L281,253.0 L281,253.0 L282,253.0 L282,253.0 L283,253.0 L283,251.9 L284,251.9 L284,251.5 L285,251.5 L285,251.2 L286,251.2 L286,250.7 L287,250.7 L287,248.9 L288,248.9 L288,248.7 L289,248.7 L289,248.9 L290,248.9 L290,248.6 L291,248.6 L291,248.6 L292,248.6 L292,248.4 L293,248.4 L293,249.3 L294,249.3 L294,249.4 L295,249.4 L295,250.0 L296,250.0 L296,249.9 L297,249.9 L297,250.4 L298,250.4 L298,250.6 L299,250.6 L299,250.7 L300,250.7 L300,250.6 L301,250.6 L301,251.2 L302,251.2 L302,251.1 L303,251.1 L303,251.2 L304,251.2 L304,251.4 L305,251.4 L305,251.6 L306,251.6 L306,251.8 L307,251.8 L307,252.0 L308,252.0 L308,253.0 L309,253.0 L309,253.0 L310,253.0 L310,253.0 L311,253.0 L311,251.2 L312,251.2 L312,244.3 L313,244.3 L313,247.4 L314,247.4 L314,249.0 L315,249.0 L315,249.7 L316,249.7 L316,250.4 L317,250.4 L317,250.0 L318,250.0 L318,250.4 L319,250.4 L319,250.8 L320,250.8 L320,250.7 L321,250.7 L321,251.0 L322,251.0 L322,251.1 L323,251.1 L323,249.7 L324,249.7 L324,251.8 L325,251.8 L325,251.5 L326,251.5 L326,251.6 L327,251.6 L327,251.7 L328,251.7 L328,251.7 L329,251.7 L329,251.9 L330,251.9 L330,252.2 L331,252.2 L331,252.0 L332,252.0 L332,251.6 L333,251.6 L333,251.2 L334,251.2 L334,251.0 L335,251.0 L335,250.6 L336,250.6 L336,250.9 L337,250.9 L337,250.7 L338,250.7 L338,250.0 L339,250.0 L339,250.4 L340,250.4 L340,250.9 L341,250.9 L341,251.1 L342,251.1 L342,251.5 L343,251.5 L343,251.5 L344,251.5 L344,251.6 L345,251.6 L345,251.7 L346,251.7 L346,251.8 L347,251.8 L347,251.9 L348,251.9 L348,251.9 L349,251.9 L349,252.0 L350,252.0 L350,253.0 L351,253.0 L351,253.0 L352,253.0 L352,253.0 L353,253.0 L353,253.0 L354,253.0 L354,252.5 L355,252.5 L355,253.0 L356,253.0 L356,252.8 L357,252.8 L357,253.0 L358,253.0 L358,249.7 L359,249.7 L359,249.7 L360,249.7 L360,248.6 L361,248.6 L361,248.7 L362,248.7 L362,247.8 L363,247.8 L363,247.7 L364,247.7 L364,247.2 L365,247.2 L365,247.2 L366,247.2 L366,247.8 L367,247.8 L367,248.2 L368,248.2 L368,247.1 L369,247.1 L369,248.0 L370,248.0 L370,247.5 L371,247.5 L371,247.0 L372,247.0 L372,247.5 L373,247.5 L373,245.9 L374,245.9 L374,247.7 L375,247.7 L375,248.3 L376,248.3 L376,247.8 L377,247.8 L377,248.3 L378,248.3 L378,249.7 L379,249.7 L379,250.5 L380,250.5 L380,251.2 L381,251.2 L381,252.6 L382,252.6 L382,253.0 L383,253.0 L383,253.0 L384,253.0 L384,253.0 L385,253.0 L385,252.6 L386,252.6 L386,250.3 L387,250.3 L387,252.6 L388,252.6 L388,253.0 L389,253.0 L389,253.0 L390,253.0 L390,252.3 L391,252.3 L391,253.0 L392,253.0 L392,253.0 L393,253.0 L393,253.0 L394,253.0 L394,253.0 L395,253.0 L395,252.1 L396,252.1 L396,251.6 L397,251.6 L397,251.2 L398,251.2 L398,251.3 L399,251.3 L399,251.3 L400,251.3 L400,251.4 L401,251.4 L401,251.5 L402,251.5 L402,252.0 L403,252.0 L403,252.6 L404,252.6 L404,253.0 L405,253.0 L405,253.0 L406,253.0 L406,252.6 L407,252.6 L407,251.6 L408,251.6 L408,250.7 L409,250.7 L409,250.6 L410,250.6 L410,250.7 L411,250.7 L411,250.3 L412,250.3 L412,249.7 L413,249.7 L413,250.4 L414,250.4 L414,250.0 L415,250.0 L415,250.9 L416,250.9 L416,251.2 L417,251.2 L417,250.8 L418,250.8 L418,251.2 L419,251.2 L419,252.0 L420,252.0 L420,252.5 L421,252.5 L421,251.5 L422,251.5 L422,250.9 L423,250.9 L423,251.0 L424,251.0 L424,251.2 L425,251.2 L425,251.3 L426,251.3 L426,251.5 L427,251.5 L427,251.8 L428,251.8 L428,253.0 L429,253.0 L429,253.0 L430,253.0 L430,252.6 L431,252.6 L431,253.0 L432,253.0 L432,253.0 L433,253.0 L433,253.0 L434,253.0 L434,253.0 L435,253.0 L435,253.0 L436,253.0 L436,253.0 L437,253.0 L437,253.0 L438,253.0 L438,253.0 L439,253.0 L439,253.0 L440,253.0 L440,252.6 L441,252.6 L441,252.0 L442,252.0 L442,250.9 L443,250.9 L443,251.3 L444,251.3 L444,251.0 L445,251.0 L445,251.1 L446,251.1 L446,251.1 L447,251.1 L447,251.2 L448,251.2 L448,251.3 L449,251.3 L449,251.4 L450,251.4 L450,251.5 L451,251.5 L451,251.6 L452,251.6 L452,251.7 L453,251.7 L453,252.1 L454,252.1 L454,252.5 L455,252.5 L455,249.7 L456,249.7 L456,249.5 L457,249.5 L457,249.3 L458,249.3 L458,249.8 L459,249.8 L459,249.5 L460,249.5 L460,249.8 L461,249.8 L461,249.4 L462,249.4 L462,248.3 L463,248.3 L463,248.5 L464,248.5 L464,248.3 L465,248.3 L465,248.4 L466,248.4 L466,249.5 L467,249.5 L467,249.6 L468,249.6 L468,249.3 L469,249.3 L469,249.1 L470,249.1 L470,249.4 L471,249.4 L471,251.0 L472,251.0 L472,252.3 L473,252.3 L473,253.0 L474,253.0 L474,253.0 L475,253.0 L475,252.5 L476,252.5 L476,253.0 L477,253.0 L477,253.0 L478,253.0 L478,253.0 L479,253.0 L479,253.0 L480,253.0 L480,253.0 L481,253.0 L481,253.0 L482,253.0 L482,253.0 L483,253.0 L483,253.0 L484,253.0 L484,253.0 L485,253.0 L485,252.6 L486,252.6 L486,253.0 L487,253.0 L487,253.0 L488,253.0 L488,253.0 L489,253.0 L489,253.0 L490,253.0 L490,253.0 L491,253.0 L491,253.0 L492,253.0 L492,253.0 L493,253.0 L493,253.0 L494,253.0 L494,253.0 L495,253.0 L495,252.8 L496,252.8 L496,253.0 L497,253.0 L497,253.0 L498,253.0 L498,251.4 L499,251.4 L499,238.3 L500,238.3 L500,222.0 L501,222.0 L501,220.1 L502,220.1 L502,215.0 L503,215.0 L503,208.5 L504,208.5 L504,213.8 L505,213.8 L505,227.0 L506,227.0 L506,241.7 L507,241.7 L507,246.7 L508,246.7 L508,244.4 L509,244.4 L509,239.6 L510,239.6 L510,245.5 L511,245.5 L511,244.8 L512,244.8 L512,243.7 L513,243.7 L513,236.0 L514,236.0 L514,216.7 L515,216.7 L515,221.6 L516,221.6 L516,229.5 L517,229.5 L517,239.2 L518,239.2 L518,244.0 L519,244.0 L519,243.2 L520,243.2 L520,242.6 L521,242.6 L521,244.1 L522,244.1 L522,246.4 L523,246.4 L523,248.5 L524,248.5 L524,219.7 L525,219.7 L525,217.7 L526,217.7 L526,213.2 L527,213.2 L527,218.2 L528,218.2 L528,225.2 L529,225.2 L529,230.5 L530,230.5 L530,234.7 L531,234.7 L531,238.4 L532,238.4 L532,237.7 L533,237.7 L533,237.3 L534,237.3 L534,239.0 L535,239.0 L535,239.7 L536,239.7 L536,241.7 L537,241.7 L537,245.0 L538,245.0 L538,249.0 L539,249.0 L539,250.8 L540,250.8 L540,247.9 L541,247.9 L541,230.0 L542,230.0 L542,225.7 L543,225.7 L543,224.0 L544,224.0 L544,221.4 L545,221.4 L545,230.4 L546,230.4 L546,230.6 L547,230.6 L547,211.4 L548,211.4 L548,210.8 L549,210.8 L549,211.4 L550,211.4 L550,209.0 L551,209.0 L551,208.8 L552,208.8 L552,208.5 L553,208.5 L553,209.8 L554,209.8 L554,209.9 L555,209.9 L555,212.2 L556,212.2 L556,214.7 L557,214.7 L557,227.5 L558,227.5 L558,234.0 L559,234.0 L559,241.2 L560,241.2 L560,242.8 L561,242.8 L561,242.4 L562,242.4 L562,213.8 L563,213.8 L563,196.2 L564,196.2 L564,213.7 L565,213.7 L565,224.3 L566,224.3 L566,225.2 L567,225.2 L567,220.2 L568,220.2 L568,233.8 L569,233.8 L569,240.8 L570,240.8 L570,245.5 L571,245.5 L571,250.7 L572,250.7 L572,244.3 L573,244.3 L573,234.3 L574,234.3 L574,244.6 L575,244.6 L575,239.1 L576,239.1 L576,231.4 L577,231.4 L577,218.4 L578,218.4 L578,210.8 L579,210.8 L579,229.2 L580,229.2 L580,234.9 L581,234.9 L581,237.1 L582,237.1 L582,238.2 L583,238.2 L583,237.7 L584,237.7 L584,237.3 L585,237.3 L585,240.5 L586,240.5 L586,233.1 L587,233.1 L587,217.9 L588,217.9 L588,218.3 L589,218.3 L589,218.5 L590,218.5 L590,218.5 L591,218.5 L591,231.4 L592,231.4 L592,236.4 L593,236.4 L593,238.7 L594,238.7 L594,240.0 L595,240.0 L595,242.0 L596,242.0 L596,240.2 L597,240.2 L597,240.9 L598,240.9 L598,241.4 L599,241.4 L599,247.6 L600,247.6 L600,252.9 L601,252.9 L601,252.9 L602,252.9 L602,240.5 L603,240.5 L603,226.8 L604,226.8 L604,225.5 L605,225.5 L605,217.5 L606,217.5 L606,203.2 L607,203.2 L607,199.1 L608,199.1 L608,190.8 L609,190.8 L609,180.9 L610,180.9 L610,192.5 L611,192.5 L611,190.3 L612,190.3 L612,196.1 L613,196.1 L613,197.1 L614,197.1 L614,198.1 L615,198.1 L615,199.9 L616,199.9 L616,209.5 L617,209.5 L617,210.3 L618,210.3 L618,212.2 L619,212.2 L619,213.7 L620,213.7 L620,220.4 L621,220.4 L621,232.3 L622,232.3 L622,245.5 L623,245.5 L623,245.5 L624,245.5 L624,238.0 L625,238.0 L625,229.3 L626,229.3 L626,215.0 L627,215.0 L627,215.8 L628,215.8 L628,220.3 L629,220.3 L629,226.4 L630,226.4 L630,229.7 L631,229.7 L631,234.5 L632,234.5 L632,237.9 L633,237.9 L633,246.9 L634,246.9 L634,239.5 L635,239.5 L635,229.1 L636,229.1 L636,244.2 L637,244.2 L637,238.5 L638,238.5 L638,240.2 L639,240.2 L639,243.9 L640,243.9 L640,215.7 L641,215.7 L641,237.1 L642,237.1 L642,240.6 L643,240.6 L643,239.1 L644,239.1 L644,237.4 L645,237.4 L645,235.4 L646,235.4 L646,234.4 L647,234.4 L647,240.0 L648,240.0 L648,233.5 L649,233.5 L649,227.0 L650,227.0 L650,223.7 L651,223.7 L651,229.0 L652,229.0 L652,231.2 L653,231.2 L653,235.0 L654,235.0 L654,236.1 L655,236.1 L655,238.5 L656,238.5 L656,239.7 L657,239.7 L657,239.6 L658,239.6 L658,239.3 L659,239.3 L659,238.1 L660,238.1 L660,239.1 L661,239.1 L661,243.2 L662,243.2 L662,245.9 L663,245.9 L663,248.3 L664,248.3 L664,251.3 L665,251.3 L665,233.4 L666,233.4 L666,219.7 L667,219.7 L667,234.9 L668,234.9 L668,227.7 L669,227.7 L669,230.0 L670,230.0 L670,231.4 L671,231.4 L671,211.0 L672,211.0 L672,200.7 L673,200.7 L673,199.9 L674,199.9 L674,199.7 L675,199.7 L675,209.8 L676,209.8 L676,210.4 L677,210.4 L677,214.8 L678,214.8 L678,217.8 L679,217.8 L679,219.0 L680,219.0 L680,221.1 L681,221.1 L681,222.4 L682,222.4 L682,227.1 L683,227.1 L683,229.9 L684,229.9 L684,231.7 L685,231.7 L685,245.1 L686,245.1 L686,249.1 L687,249.1 L687,251.0 L688,251.0 L688,239.7 L689,239.7 L689,228.5 L690,228.5 L690,204.8 L691,204.8 L691,168.2 L692,168.2 L692,151.0 L693,151.0 L693,166.4 L694,166.4 L694,182.8 L695,182.8 L695,206.8 L696,206.8 L696,217.4 L697,217.4 L697,214.0 L698,214.0 L698,207.1 L699,207.1 L699,214.4 L700,214.4 L700,216.3 L701,216.3 L701,213.1 L702,213.1 L702,222.7 L703,222.7 L703,229.6 L704,229.6 L704,220.4 L705,220.4 L705,230.5 L706,230.5 L706,242.7 L707,242.7 L707,249.7 L708,249.7 L708,245.8 L709,245.8 L709,230.8 L710,230.8 L710,222.4 L711,222.4 L711,225.3 L712,225.3 L712,227.3 L713,227.3 L713,230.8 L714,230.8 L714,235.5 L715,235.5 L715,237.8 L716,237.8 L716,240.8 L717,240.8 L717,239.3 L718,239.3 L718,240.2 L719,240.2 L719,239.1 L720,239.1 L720,241.7 L721,241.7 L721,247.0 L722,247.0 L722,249.1 L723,249.1 L723,251.5 L724,251.5 L724,248.7 L725,248.7 L725,242.5 L726,242.5 L726,229.1 L727,229.1 L727,187.2 L728,187.2 L728,155.7 L729,155.7 L729,173.0 L730,173.0 L730,192.5 L731,192.5 L731,214.6 L732,214.6 L732,214.8 L733,214.8 L733,217.1 L734,217.1 L734,225.1 L735,225.1 L735,231.7 L736,231.7 L736,233.8 L737,233.8 L737,229.2 L738,229.2 L738,225.7 L739,225.7 L739,220.4 L740,220.4 L740,245.9 L741,245.9 L741,245.2 L742,245.2 L742,242.5 L743,242.5 L743,233.3 L744,233.3 L744,226.2 L745,226.2 L745,214.4 L746,214.4 L746,226.0 L747,226.0 L747,235.2 L748,235.2 L748,241.1 L749,241.1 L749,241.1 L750,241.1 L750,241.1 L751,241.1 L751,241.8 L752,241.8 L752,242.8 L753,242.8 L753,243.7 L754,243.7 L754,247.4 L755,247.4 L755,248.7 L756,248.7 L756,251.1 L757,251.1 L757,252.0 L758,252.0 L758,252.4 L759,252.4 L759,244.2 L760,244.2 L760,234.0 L761,234.0 L761,207.3 L762,207.3 L762,183.7 L763,183.7 L763,161.7 L764,161.7 L764,196.0 L765,196.0 L765,173.0 L766,173.0 L766,201.7 L767,201.7 L767,210.0 L768,210.0 L768,212.3 L769,212.3 L769,213.1 L770,213.1 L770,218.9 L771,218.9 L771,221.9 L772,221.9 L772,227.7 L773,227.7 L773,233.2 L774,233.2 L774,236.1 L775,236.1 L775,238.0 L776,238.0 L776,241.9 L777,241.9 L777,244.3 L778,244.3 L778,246.6 L779,246.6 L779,249.0 L780,249.0 L780,250.8 L781,250.8 L781,251.8 L782,251.8 L782,253.0 L783,253.0 L783,253.0 L784,253.0 L784,253.0 L785,253.0 L785,253.0 L786,253.0 L786,253.0 L787,253.0 L787,253.0 L788,253.0 L788,253.0 L789,253.0 L789,253.0 L790,253.0 L790,253.0 L791,253.0 L791,253.0 L792,253.0 L792,253.0 L793,253.0 L793,253.0 L794,253.0 L794,253.0 L795,253.0 L795,253.0 L796,253.0 L796,253.0 L797,253.0 L797,253.0 L798,253.0 L798,253.0 L799,253.0 L799,253.0 L800,253.0 L800,252.6 L801,252.6 L801,253.0 L802,253.0 L802,253.0 L803,253.0 L803,253.0 L804,253.0 L804,253.0 L805,253.0 L805,253.0 L806,253.0 L806,253.0 L807,253.0 L807,253.0 L808,253.0 L808,253.0 L809,253.0 L809,253.0 L810,253.0 L810,253.0 L811,253.0 L811,253.0 L812,253.0 L812,253.0 L813,253.0 L813,253.0 L814,253.0 L814,253.0 L815,253.0 L815,253.0 L816,253.0 L816,253.0 L817,253.0 L817,253.0 L818,253.0 L818,252.5 L819,252.5 L819,251.7 L820,251.7 L820,250.8 L821,250.8 L821,250.1 L822,250.1 L822,249.0 L823,249.0 L823,248.0 L824,248.0 L824,248.5 L825,248.5 L825,248.3 L826,248.3 L826,248.5 L827,248.5 L827,249.5 L828,249.5 L828,250.8 L829,250.8 L829,251.3 L830,251.3 L830,251.9 L831,251.9 L831,252.0 L832,252.0 L832,252.0 L833,252.0 L833,252.0 L834,252.0 L834,251.9 L835,251.9 L835,251.7 L836,251.7 L836,251.6 L837,251.6 L837,251.4 L838,251.4 L838,251.2 L839,251.2 L839,251.1 L840,251.1 L840,251.2 L841,251.2 L841,251.3 L842,251.3 L842,251.3 L843,251.3 L843,251.4 L844,251.4 L844,251.5 L845,251.5 L845,251.5 L846,251.5 L846,251.6 L847,251.6 L847,251.8 L848,251.8 L848,252.0 L849,252.0 L849,252.0 L850,252.0 L850,251.9 L851,251.9 L851,251.8 L852,251.8 L852,251.8 L853,251.8 L853,251.7 L854,251.7 L854,251.6 L855,251.6 L855,251.5 L856,251.5 L856,250.9 L857,250.9 L857,249.3 L858,249.3 L858,249.8 L859,249.8 L859,250.3 L860,250.3 L860,250.4 L861,250.4 L861,250.8 L862,250.8 L862,251.3 L863,251.3 L863,251.8 L864,251.8 L864,252.1 L865,252.1 L865,253.0 L866,253.0 L866,253.0 L867,253.0 L867,253.0 L868,253.0 L868,252.3 L869,252.3 L869,253.0 L870,253.0 L870,251.9 L871,251.9 L871,251.7 L872,251.7 L872,251.5 L873,251.5 L873,251.3 L874,251.3 L874,251.1 L875,251.1 L875,251.2 L876,251.2 L876,251.3 L877,251.3 L877,251.4 L878,251.4 L878,251.6 L879,251.6 L879,251.7 L880,251.7 L880,251.8 L881,251.8 L881,251.9 L882,251.9 L882,252.0 L883,252.0 L883,252.1 L884,252.1 L884,253.0 L885,253.0 L885,253.0 L886,253.0 L886,252.3 L887,252.3 L887,251.6 L888,251.6 L888,251.0 L889,251.0 L889,250.3 L890,250.3 L890,250.3 L891,250.3 L891,249.3 L892,249.3 L892,249.6 L893,249.6 L893,248.9 L894,248.9 L894,249.3 L895,249.3 L895,250.2 L896,250.2 L896,250.3 L897,250.3 L897,251.0 L898,251.0 L898,251.2 L899,251.2 L899,251.6 L900,251.6 L900,251.8 L901,251.8 L901,252.0 L902,252.0 L902,253.0 L903,253.0 L903,252.3 L904,252.3 L904,251.9 L905,251.9 L905,251.6 L906,251.6 L906,251.3 L907,251.3 L907,251.0 L908,251.0 L908,250.8 L909,250.8 L909,250.5 L910,250.5 L910,251.3 L911,251.3 L911,251.2 L912,251.2 L912,251.5 L913,251.5 L913,251.9 L914,251.9 L914,252.0 L915,252.0 L915,252.0 L916,252.0 L916,252.0 L917,252.0 L917,252.0 L918,252.0 L918,251.9 L919,251.9 L919,251.9 L920,251.9 L920,251.9 L921,251.9 L921,251.9 L922,251.9 L922,251.6 L923,251.6 L923,251.2 L924,251.2 L924,250.8 L925,250.8 L925,251.0 L926,251.0 L926,251.4 L927,251.4 L927,251.7 L928,251.7 L928,252.0 L929,252.0 L929,252.0 L930,252.0 L930,252.0 L931,252.0 L931,252.0 L932,252.0 L932,252.0 L933,252.0 L933,252.0 L934,252.0 L934,251.8 L935,251.8 L935,251.3 L936,251.3 L936,250.5 L937,250.5 L937,250.3 L938,250.3 L938,249.4 L939,249.4 L939,249.7 L940,249.7 L940,248.5 L941,248.5 L941,248.7 L942,248.7 L942,250.1 L943,250.1 L943,250.2 L944,250.2 L944,250.5 L945,250.5 L945,251.2 L946,251.2 L946,251.2 L947,251.2 L947,251.5 L948,251.5 L948,251.8 L949,251.8 L949,252.0 L950,252.0 L950,252.1 L951,252.1 L951,253.0 L952,253.0 L952,253.0 L953,253.0 L953,253.0 L954,253.0 L954,253.0 L955,253.0 L955,252.3 L956,252.3 L956,253.0 L957,253.0 L957,253.0 L958,253.0 L958,253.0 L959,253.0 L959,253.0 L960,253.0 L960,253.0 L961,253.0 L961,253.0 L962,253.0 L962,253.0 L963,253.0 L963,253.0 L964,253.0 L964,253.0 L965,253.0 L965,252.5 L966,252.5 L966,253.0 L967,253.0 L967,253.0 L968,253.0 L968,253.0 L969,253.0 L969,253.0 L970,253.0 L970,253.0 L971,253.0 L971,253.0 L972,253.0 L972,253.0 L973,253.0 L973,253.0 L974,253.0 L974,253.0 L975,253.0 L975,253.0 L976,253.0 L976,253.0 L977,253.0 L977,253.0 L978,253.0 L978,253.0 L979,253.0 L979,253.0 L980,253.0 L980,253.0 L981,253.0 L981,253.0 L982,253.0 L982,253.0 L983,253.0 L983,253.0 L984,253.0 L984,252.5 L985,252.5 L985,250.8 L986,250.8 L986,252.5 L987,252.5 L987,253.0 L988,253.0 L988,253.0 L989,253.0 L989,253.0 L990,253.0 L990,253.0 L991,253.0 L991,253.0 L992,253.0 L992,253.0 L993,253.0 L993,253.0 L994,253.0 L994,253.0 L995,253.0 L995,253.0 L996,253.0 L996,253.0 L997,253.0 L997,253.0 L998,253.0 L998,253.0 L999,253.0 L999,253.0 L1000,253.0 L1000,252.1 L1001,252.1 L1001,252.1 L1002,252.1 L1002,252.0 L1003,252.0 L1003,251.8 L1004,251.8 L1004,251.6 L1005,251.6 L1005,251.4 L1006,251.4 L1006,251.8 L1007,251.8 L1007,252.0 L1008,252.0 L1008,252.0 L1009,252.0 L1009,252.0 L1010,252.0 L1010,252.0 L1011,252.0 L1011,252.1 L1012,252.1 L1012,252.1 L1013,252.1 L1013,252.1 L1014,252.1 L1014,252.1 L1015,252.1 L1015,252.1 L1016,252.1 L1016,252.1 L1017,252.1 L1017,252.1 L1018,252.1 L1018,252.1 L1019,252.1 L1019,252.1 L1020,252.1 L1020,253.0 L1021,253.0 L1021,253.0 L1022,253.0 L1022,253.0 L1023,253.0 L1023,253.0 L1024,253.0 L1024,253.0 L1025,253.0 L1025,253.0 L1026,253.0 L1026,253.0 L1027,253.0 L1027,253.0 L1028,253.0 L1028,253.0 L1029,253.0 L1029,253.0 L1030,253.0 L1030,253.0 L1031,253.0 L1031,253.0 L1032,253.0 L1032,252.2 L1033,252.2 L1033,252.0 L1034,252.0 L1034,251.9 L1035,251.9 L1035,252.0 L1036,252.0 L1036,252.1 L1037,252.1 L1037,252.2 L1038,252.2 L1038,253.0 L1039,253.0 L1039,253.0 L1040,253.0 L1040,253.0 L1041,253.0 L1041,252.5 L1042,252.5 L1042,253.0 L1043,253.0 L1043,251.7 L1044,251.7 L1044,251.7 L1045,251.7 L1045,251.6 L1046,251.6 L1046,251.5 L1047,251.5 L1047,251.5 L1048,251.5 L1048,251.3 L1049,251.3 L1049,250.9 L1050,250.9 L1050,251.0 L1051,251.0 L1051,250.0 L1052,250.0 L1052,249.8 L1053,249.8 L1053,249.3 L1054,249.3 L1054,250.4 L1055,250.4 L1055,250.6 L1056,250.6 L1056,250.8 L1057,250.8 L1057,249.9 L1058,249.9 L1058,249.0 L1059,249.0 L1059,248.5 L1060,248.5 L1060,250.3 L1061,250.3 L1061,251.3 L1062,251.3 L1062,251.3 L1063,251.3 L1063,251.3 L1064,251.3 L1064,236.2 L1065,236.2 L1065,251.6 L1066,251.6 L1066,251.6 L1067,251.6 L1067,251.6 L1068,251.6 L1068,251.6 L1069,251.6 L1069,251.6 L1070,251.6 L1070,251.6 L1071,251.6 L1071,251.7 L1072,251.7 L1072,251.7 L1073,251.7 L1073,251.1 L1074,251.1 L1074,249.3 L1075,249.3 L1075,249.3 L1076,249.3 L1076,249.9 L1077,249.9 L1077,250.9 L1078,250.9 L1078,251.2 L1079,251.2 L1079,251.6 L1080,251.6 L1080,251.7 L1081,251.7 L1081,251.7 L1082,251.7 L1082,251.8 L1083,251.8 L1083,251.9 L1084,251.9 L1084,251.9 L1085,251.9 L1085,252.0 L1086,252.0 L1086,252.1 L1087,252.1 L1087,253.0 L1088,253.0 L1088,252.2 L1089,252.2 L1089,253.0 L1090,253.0 L1090,253.0 L1091,253.0 L1091,253.0 L1092,253.0 L1092,253.0 L1093,253.0 L1093,253.0 L1094,253.0 L1094,253.0 L1095,253.0 L1095,252.5 L1096,252.5 L1096,253.0 L1097,253.0 L1097,253.0 L1098,253.0 L1098,253.0 L1099,253.0 L1099,253.0 L1100,253.0 L1100,253.0 L1101,253.0 L1101,253.0 L1102,253.0 L1102,253.0 L1103,253.0 L1103,253.0 L1104,253.0 L1104,253.0 L1105,253.0 L1105,253.0 L1106,253.0 L1106,253.0 L1107,253.0 L1107,253.0 L1108,253.0 L1108,253.0 L1109,253.0 L1109,253.0 L1110,253.0 L1110,253.0 L1111,253.0 L1111,253.0 L1112,253.0 L1112,253.0 L1113,253.0 L1113,253.0 L1114,253.0 L1114,253.0 L1115,253.0 L1115,253.0 L1116,253.0 L1116,253.0 L1117,253.0 L1117,253.0 L1118,253.0 L1118,253.0 L1119,253.0 L1119,253.0 L1120,253.0 L1120,253.0 L1121,253.0 L1121,253.0 L1122,253.0 L1122,253.0 L1123,253.0 L1123,253.0 L1124,253.0 L1124,253.0 L1125,253.0 L1125,253.0 L1126,253.0 L1126,253.0 L1127,253.0 L1127,253.0 L1128,253.0 L1128,253.0 L1129,253.0 L1129,253.0 L1130,253.0 L1130,253.0 L1131,253.0 L1131,253.0 L1132,253.0 L1132,253.0 L1133,253.0 L1133,253.0 L1134,253.0 L1134,253.0 L1135,253.0 L1135,253.0 L1136,253.0 L1136,253.0 L1137,253.0 L1137,253.0 L1138,253.0 L1138,253.0 L1139,253.0 L1139,253.0 L1140,253.0 L1140,253.0 L1141,253.0 L1141,253.0 L1142,253.0 L1142,253.0 L1143,253.0 L1143,253.0 L1144,253.0 L1144,253.0 L1145,253.0 L1145,253.0 L1146,253.0 L1146,252.5 L1147,252.5 L1147,243.9 L1148,243.9 L1148,252.5 L1149,252.5 L1149,253.0 L1150,253.0 L1150,253.0 L1151,253.0 L1151,253.0 L1152,253.0 L1152,253.0 L1153,253.0 L1153,253.0 L1153,253.0 L1153,253.0 L1153,253.0 L1153,253.0 L1152,253.0 L1152,253.0 L1151,253.0 L1151,253.0 L1150,253.0 L1150,253.0 L1149,253.0 L1149,253.4 L1148,253.4 L1148,263.9 L1147,263.9 L1147,253.4 L1146,253.4 L1146,253.0 L1145,253.0 L1145,253.0 L1144,253.0 L1144,253.0 L1143,253.0 L1143,253.0 L1142,253.0 L1142,253.0 L1141,253.0 L1141,253.0 L1140,253.0 L1140,253.0 L1139,253.0 L1139,253.0 L1138,253.0 L1138,253.0 L1137,253.0 L1137,253.0 L1136,253.0 L1136,253.0 L1135,253.0 L1135,253.0 L1134,253.0 L1134,253.0 L1133,253.0 L1133,253.0 L1132,253.0 L1132,253.0 L1131,253.0 L1131,253.0 L1130,253.0 L1130,253.0 L1129,253.0 L1129,253.0 L1128,253.0 L1128,253.0 L1127,253.0 L1127,253.0 L1126,253.0 L1126,253.0 L1125,253.0 L1125,253.0 L1124,253.0 L1124,253.0 L1123,253.0 L1123,253.0 L1122,253.0 L1122,253.0 L1121,253.0 L1121,253.0 L1120,253.0 L1120,253.0 L1119,253.0 L1119,253.0 L1118,253.0 L1118,253.0 L1117,253.0 L1117,253.0 L1116,253.0 L1116,253.0 L1115,253.0 L1115,253.0 L1114,253.0 L1114,253.0 L1113,253.0 L1113,253.0 L1112,253.0 L1112,253.0 L1111,253.0 L1111,253.0 L1110,253.0 L1110,253.0 L1109,253.0 L1109,253.0 L1108,253.0 L1108,253.0 L1107,253.0 L1107,253.0 L1106,253.0 L1106,253.0 L1105,253.0 L1105,253.0 L1104,253.0 L1104,253.0 L1103,253.0 L1103,253.0 L1102,253.0 L1102,253.0 L1101,253.0 L1101,253.0 L1100,253.0 L1100,253.0 L1099,253.0 L1099,253.0 L1098,253.0 L1098,253.0 L1097,253.0 L1097,253.0 L1096,253.0 L1096,253.4 L1095,253.4 L1095,253.0 L1094,253.0 L1094,253.0 L1093,253.0 L1093,253.0 L1092,253.0 L1092,253.0 L1091,253.0 L1091,253.9 L1090,253.9 L1090,254.0 L1089,254.0 L1089,254.2 L1088,254.2 L1088,254.2 L1087,254.2 L1087,254.3 L1086,254.3 L1086,254.4 L1085,254.4 L1085,254.5 L1084,254.5 L1084,254.6 L1083,254.6 L1083,254.7 L1082,254.7 L1082,254.8 L1081,254.8 L1081,254.9 L1080,254.9 L1080,254.7 L1079,254.7 L1079,255.4 L1078,255.4 L1078,255.5 L1077,255.5 L1077,256.1 L1076,256.1 L1076,257.0 L1075,257.0 L1075,257.0 L1074,257.0 L1074,255.0 L1073,255.0 L1073,254.5 L1072,254.5 L1072,254.5 L1071,254.5 L1071,254.6 L1070,254.6 L1070,254.6 L1069,254.6 L1069,254.6 L1068,254.6 L1068,254.6 L1067,254.6 L1067,254.6 L1066,254.6 L1066,259.7 L1065,259.7 L1065,254.6 L1064,254.6 L1064,254.8 L1063,254.8 L1063,254.8 L1062,254.8 L1062,254.8 L1061,254.8 L1061,255.9 L1060,255.9 L1060,257.3 L1059,257.3 L1059,256.5 L1058,256.5 L1058,255.6 L1057,255.6 L1057,255.6 L1056,255.6 L1056,255.2 L1055,255.2 L1055,255.6 L1054,255.6 L1054,255.7 L1053,255.7 L1053,256.2 L1052,256.2 L1052,256.2 L1051,256.2 L1051,256.1 L1050,256.1 L1050,255.5 L1049,255.5 L1049,255.5 L1048,255.5 L1048,255.0 L1047,255.0 L1047,255.1 L1046,255.1 L1046,255.6 L1045,255.6 L1045,255.6 L1044,255.6 L1044,255.7 L1043,255.7 L1043,254.2 L1042,254.2 L1042,253.4 L1041,253.4 L1041,253.0 L1040,253.0 L1040,253.0 L1039,253.0 L1039,253.0 L1038,253.0 L1038,253.9 L1037,253.9 L1037,254.0 L1036,254.0 L1036,254.2 L1035,254.2 L1035,254.5 L1034,254.5 L1034,254.2 L1033,254.2 L1033,253.9 L1032,253.9 L1032,253.0 L1031,253.0 L1031,253.0 L1030,253.0 L1030,253.0 L1029,253.0 L1029,253.0 L1028,253.0 L1028,253.0 L1027,253.0 L1027,253.0 L1026,253.0 L1026,253.0 L1025,253.0 L1025,253.0 L1024,253.0 L1024,253.0 L1023,253.0 L1023,253.0 L1022,253.0 L1022,253.0 L1021,253.0 L1021,253.0 L1020,253.0 L1020,253.0 L1019,253.0 L1019,253.0 L1018,253.0 L1018,253.0 L1017,253.0 L1017,253.0 L1016,253.0 L1016,253.0 L1015,253.0 L1015,253.0 L1014,253.0 L1014,253.0 L1013,253.0 L1013,253.0 L1012,253.0 L1012,253.0 L1011,253.0 L1011,253.0 L1010,253.0 L1010,253.0 L1009,253.0 L1009,253.0 L1008,253.0 L1008,253.9 L1007,253.9 L1007,254.0 L1006,254.0 L1006,254.2 L1005,254.2 L1005,254.1 L1004,254.1 L1004,254.0 L1003,254.0 L1003,253.9 L1002,253.9 L1002,253.0 L1001,253.0 L1001,253.0 L1000,253.0 L1000,253.0 L999,253.0 L999,253.0 L998,253.0 L998,253.0 L997,253.0 L997,253.0 L996,253.0 L996,253.0 L995,253.0 L995,253.0 L994,253.0 L994,253.0 L993,253.0 L993,253.0 L992,253.0 L992,253.0 L991,253.0 L991,253.0 L990,253.0 L990,253.0 L989,253.0 L989,253.0 L988,253.0 L988,253.0 L987,253.0 L987,253.4 L986,253.4 L986,257.0 L985,257.0 L985,253.4 L984,253.4 L984,253.0 L983,253.0 L983,253.0 L982,253.0 L982,253.0 L981,253.0 L981,253.0 L980,253.0 L980,253.0 L979,253.0 L979,253.0 L978,253.0 L978,253.0 L977,253.0 L977,253.0 L976,253.0 L976,253.0 L975,253.0 L975,253.0 L974,253.0 L974,253.0 L973,253.0 L973,253.0 L972,253.0 L972,253.0 L971,253.0 L971,253.0 L970,253.0 L970,253.0 L969,253.0 L969,253.0 L968,253.0 L968,253.0 L967,253.0 L967,253.0 L966,253.0 L966,253.4 L965,253.4 L965,253.0 L964,253.0 L964,253.0 L963,253.0 L963,253.0 L962,253.0 L962,253.0 L961,253.0 L961,253.0 L960,253.0 L960,253.0 L959,253.0 L959,253.0 L958,253.0 L958,253.0 L957,253.0 L957,253.0 L956,253.0 L956,253.6 L955,253.6 L955,253.0 L954,253.0 L954,253.0 L953,253.0 L953,253.0 L952,253.0 L952,254.0 L951,254.0 L951,254.1 L950,254.1 L950,254.2 L949,254.2 L949,254.4 L948,254.4 L948,254.7 L947,254.7 L947,255.2 L946,255.2 L946,254.9 L945,254.9 L945,255.7 L944,255.7 L944,256.0 L943,256.0 L943,256.2 L942,256.2 L942,256.5 L941,256.5 L941,257.3 L940,257.3 L940,256.0 L939,256.0 L939,255.7 L938,255.7 L938,255.9 L937,255.9 L937,255.5 L936,255.5 L936,254.9 L935,254.9 L935,254.4 L934,254.4 L934,254.2 L933,254.2 L933,254.2 L932,254.2 L932,254.2 L931,254.2 L931,254.2 L930,254.2 L930,254.2 L929,254.2 L929,254.2 L928,254.2 L928,254.6 L927,254.6 L927,254.7 L926,254.7 L926,255.3 L925,255.3 L925,255.7 L924,255.7 L924,255.3 L923,255.3 L923,254.9 L922,254.9 L922,254.6 L921,254.6 L921,254.6 L920,254.6 L920,254.5 L919,254.5 L919,254.5 L918,254.5 L918,254.4 L917,254.4 L917,254.3 L916,254.3 L916,254.3 L915,254.3 L915,254.2 L914,254.2 L914,254.3 L913,254.3 L913,254.7 L912,254.7 L912,255.0 L911,255.0 L911,255.1 L910,255.1 L910,255.7 L909,255.7 L909,255.3 L908,255.3 L908,254.7 L907,254.7 L907,254.7 L906,254.7 L906,254.4 L905,254.4 L905,254.0 L904,254.0 L904,253.6 L903,253.6 L903,253.0 L902,253.0 L902,254.2 L901,254.2 L901,254.6 L900,254.6 L900,255.1 L899,255.1 L899,255.5 L898,255.5 L898,255.5 L897,255.5 L897,255.9 L896,255.9 L896,256.4 L895,256.4 L895,257.0 L894,257.0 L894,257.5 L893,257.5 L893,257.3 L892,257.3 L892,257.7 L891,257.7 L891,257.2 L890,257.2 L890,256.4 L889,256.4 L889,254.9 L888,254.9 L888,254.5 L887,254.5 L887,253.6 L886,253.6 L886,253.0 L885,253.0 L885,253.9 L884,253.9 L884,254.1 L883,254.1 L883,254.3 L882,254.3 L882,254.5 L881,254.5 L881,254.7 L880,254.7 L880,254.9 L879,254.9 L879,255.1 L878,255.1 L878,255.1 L877,255.1 L877,255.1 L876,255.1 L876,254.8 L875,254.8 L875,255.1 L874,255.1 L874,254.8 L873,254.8 L873,254.6 L872,254.6 L872,254.3 L871,254.3 L871,254.1 L870,254.1 L870,253.0 L869,253.0 L869,253.6 L868,253.6 L868,253.0 L867,253.0 L867,253.0 L866,253.0 L866,254.0 L865,254.0 L865,254.1 L864,254.1 L864,254.5 L863,254.5 L863,255.2 L862,255.2 L862,255.8 L861,255.8 L861,256.3 L860,256.3 L860,255.9 L859,255.9 L859,256.1 L858,256.1 L858,257.0 L857,257.0 L857,255.3 L856,255.3 L856,254.7 L855,254.7 L855,254.6 L854,254.6 L854,254.5 L853,254.5 L853,254.4 L852,254.4 L852,254.4 L851,254.4 L851,254.3 L850,254.3 L850,254.2 L849,254.2 L849,254.2 L848,254.2 L848,254.4 L847,254.4 L847,254.6 L846,254.6 L846,254.7 L845,254.7 L845,254.8 L844,254.8 L844,254.9 L843,254.9 L843,255.1 L842,255.1 L842,255.1 L841,255.1 L841,255.3 L840,255.3 L840,255.1 L839,255.1 L839,255.0 L838,255.0 L838,254.8 L837,254.8 L837,254.6 L836,254.6 L836,254.5 L835,254.5 L835,254.3 L834,254.3 L834,254.2 L833,254.2 L833,254.2 L832,254.2 L832,254.2 L831,254.2 L831,254.5 L830,254.5 L830,255.2 L829,255.2 L829,256.2 L828,256.2 L828,256.6 L827,256.6 L827,258.2 L826,258.2 L826,258.4 L825,258.4 L825,258.3 L824,258.3 L824,257.8 L823,257.8 L823,256.9 L822,256.9 L822,256.1 L821,256.1 L821,255.4 L820,255.4 L820,254.3 L819,254.3 L819,253.4 L818,253.4 L818,253.0 L817,253.0 L817,253.0 L816,253.0 L816,253.0 L815,253.0 L815,253.0 L814,253.0 L814,253.0 L813,253.0 L813,253.0 L812,253.0 L812,253.0 L811,253.0 L811,253.0 L810,253.0 L810,253.0 L809,253.0 L809,253.0 L808,253.0 L808,253.0 L807,253.0 L807,253.0 L806,253.0 L806,253.0 L805,253.0 L805,253.0 L804,253.0 L804,253.0 L803,253.0 L803,253.0 L802,253.0 L802,253.0 L801,253.0 L801,253.1 L800,253.1 L800,253.0 L799,253.0 L799,253.0 L798,253.0 L798,253.0 L797,253.0 L797,253.0 L796,253.0 L796,253.0 L795,253.0 L795,253.0 L794,253.0 L794,253.0 L793,253.0 L793,253.0 L792,253.0 L792,253.0 L791,253.0 L791,253.0 L790,253.0 L790,253.0 L789,253.0 L789,253.0 L788,253.0 L788,253.0 L787,253.0 L787,253.0 L786,253.0 L786,253.0 L785,253.0 L785,253.0 L784,253.0 L784,253.0 L783,253.0 L783,253.0 L782,253.0 L782,253.0 L781,253.0 L781,253.0 L780,253.0 L780,254.4 L779,254.4 L779,255.5 L778,255.5 L778,258.8 L777,258.8 L777,262.3 L776,262.3 L776,265.9 L775,265.9 L775,270.9 L774,270.9 L774,275.0 L773,275.0 L773,281.7 L772,281.7 L772,286.4 L771,286.4 L771,289.8 L770,289.8 L770,296.1 L769,296.1 L769,300.1 L768,300.1 L768,308.2 L767,308.2 L767,319.0 L766,319.0 L766,333.7 L765,333.7 L765,360.3 L764,360.3 L764,386.5 L763,386.5 L763,366.7 L762,366.7 L762,331.9 L761,331.9 L761,287.9 L760,287.9 L760,260.8 L759,260.8 L759,253.3 L758,253.3 L758,254.5 L757,254.5 L757,255.5 L756,255.5 L756,257.5 L755,257.5 L755,259.2 L754,259.2 L754,261.6 L753,261.6 L753,263.5 L752,263.5 L752,265.7 L751,265.7 L751,268.2 L750,268.2 L750,270.7 L749,270.7 L749,276.3 L748,276.3 L748,283.6 L747,283.6 L747,295.2 L746,295.2 L746,302.8 L745,302.8 L745,277.2 L744,277.2 L744,257.3 L743,257.3 L743,254.3 L742,254.3 L742,255.9 L741,255.9 L741,262.9 L740,262.9 L740,271.8 L739,271.8 L739,277.0 L738,277.0 L738,286.4 L737,286.4 L737,280.2 L736,280.2 L736,274.3 L735,274.3 L735,281.8 L734,281.8 L734,293.7 L733,293.7 L733,299.8 L732,299.8 L732,298.4 L731,298.4 L731,304.6 L730,304.6 L730,328.0 L729,328.0 L729,353.8 L728,353.8 L728,319.1 L727,319.1 L727,275.1 L726,275.1 L726,256.7 L725,256.7 L725,254.7 L724,254.7 L724,253.0 L723,253.0 L723,256.6 L722,256.6 L722,257.8 L721,257.8 L721,260.9 L720,260.9 L720,263.0 L719,263.0 L719,265.1 L718,265.1 L718,268.1 L717,268.1 L717,273.9 L716,273.9 L716,275.9 L715,275.9 L715,281.4 L714,281.4 L714,287.3 L713,287.3 L713,291.3 L712,291.3 L712,293.7 L711,293.7 L711,282.5 L710,282.5 L710,275.0 L709,275.0 L709,267.8 L708,267.8 L708,259.8 L707,259.8 L707,255.0 L706,255.0 L706,265.5 L705,265.5 L705,278.3 L704,278.3 L704,287.2 L703,287.2 L703,294.6 L702,294.6 L702,304.6 L701,304.6 L701,308.2 L700,308.2 L700,299.4 L699,299.4 L699,300.2 L698,300.2 L698,304.6 L697,304.6 L697,300.9 L696,300.9 L696,294.3 L695,294.3 L695,346.5 L694,346.5 L694,346.5 L693,346.5 L693,362.1 L692,362.1 L692,395.6 L691,395.6 L691,286.4 L690,286.4 L690,260.0 L689,260.0 L689,253.0 L688,253.0 L688,253.2 L687,253.2 L687,256.8 L686,256.8 L686,260.9 L685,260.9 L685,276.7 L684,276.7 L684,281.3 L683,281.3 L683,288.1 L682,288.1 L682,296.5 L681,296.5 L681,298.2 L680,298.2 L680,301.0 L679,301.0 L679,302.7 L678,302.7 L678,305.3 L677,305.3 L677,310.2 L676,310.2 L676,309.9 L675,309.9 L675,320.9 L674,320.9 L674,324.1 L673,324.1 L673,333.7 L672,333.7 L672,333.7 L671,333.7 L671,286.4 L670,286.4 L670,285.0 L669,285.0 L669,279.4 L668,279.4 L668,270.1 L667,270.1 L667,265.1 L666,265.1 L666,258.1 L665,258.1 L665,253.6 L664,253.6 L664,256.2 L663,256.2 L663,259.0 L662,259.0 L662,262.1 L661,262.1 L661,267.3 L660,267.3 L660,268.5 L659,268.5 L659,273.7 L658,273.7 L658,273.7 L657,273.7 L657,275.9 L656,275.9 L656,276.4 L655,276.4 L655,277.7 L654,277.7 L654,284.7 L653,284.7 L653,290.4 L652,290.4 L652,289.5 L651,289.5 L651,292.8 L650,292.8 L650,267.9 L649,267.9 L649,262.7 L648,262.7 L648,266.4 L647,266.4 L647,266.4 L646,266.4 L646,286.4 L645,286.4 L645,264.6 L644,264.6 L644,264.8 L643,264.8 L643,266.8 L642,266.8 L642,278.4 L641,278.4 L641,306.4 L640,306.4 L640,258.5 L639,258.5 L639,266.2 L638,266.2 L638,270.6 L637,270.6 L637,263.4 L636,263.4 L636,258.0 L635,258.0 L635,258.7 L634,258.7 L634,266.4 L633,266.4 L633,284.0 L632,284.0 L632,290.9 L631,290.9 L631,304.6 L630,304.6 L630,304.6 L629,304.6 L629,304.6 L628,304.6 L628,306.5 L627,306.5 L627,308.2 L626,308.2 L626,291.3 L625,291.3 L625,281.5 L624,281.5 L624,270.0 L623,270.0 L623,270.5 L622,270.5 L622,279.7 L621,279.7 L621,289.7 L620,289.7 L620,296.8 L619,296.8 L619,300.8 L618,300.8 L618,307.6 L617,307.6 L617,313.1 L616,313.1 L616,325.2 L615,325.2 L615,327.1 L614,327.1 L614,330.1 L613,330.1 L613,332.8 L612,332.8 L612,334.3 L611,334.3 L611,341.5 L610,341.5 L610,347.1 L609,347.1 L609,316.2 L608,316.2 L608,299.5 L607,299.5 L607,332.5 L606,332.5 L606,300.8 L605,300.8 L605,287.9 L604,287.9 L604,263.3 L603,263.3 L603,257.1 L602,257.1 L602,253.9 L601,253.9 L601,255.9 L600,255.9 L600,257.3 L599,257.3 L599,263.0 L598,263.0 L598,268.4 L597,268.4 L597,273.1 L596,273.1 L596,272.7 L595,272.7 L595,275.5 L594,275.5 L594,275.5 L593,275.5 L593,276.7 L592,276.7 L592,281.4 L591,281.4 L591,289.0 L590,289.0 L590,295.0 L589,295.0 L589,297.0 L588,297.0 L588,299.7 L587,299.7 L587,277.7 L586,277.7 L586,269.1 L585,269.1 L585,268.4 L584,268.4 L584,268.2 L583,268.2 L583,268.2 L582,268.2 L582,272.5 L581,272.5 L581,276.5 L580,276.5 L580,290.4 L579,290.4 L579,308.2 L578,308.2 L578,291.3 L577,291.3 L577,273.7 L576,273.7 L576,260.3 L575,260.3 L575,264.3 L574,264.3 L574,265.8 L573,265.8 L573,256.6 L572,256.6 L572,258.0 L571,258.0 L571,274.1 L570,274.1 L570,284.6 L569,284.6 L569,290.3 L568,290.3 L568,296.4 L567,296.4 L567,302.2 L566,302.2 L566,305.8 L565,305.8 L565,310.9 L564,310.9 L564,314.9 L563,314.9 L563,298.5 L562,298.5 L562,277.3 L561,277.3 L561,269.7 L560,269.7 L560,266.8 L559,266.8 L559,274.3 L558,274.3 L558,282.2 L557,282.2 L557,298.5 L556,298.5 L556,302.7 L555,302.7 L555,308.2 L554,308.2 L554,306.4 L553,306.4 L553,309.8 L552,309.8 L552,310.7 L551,310.7 L551,309.9 L550,309.9 L550,305.9 L549,305.9 L549,308.3 L548,308.3 L548,301.8 L547,301.8 L547,285.2 L546,285.2 L546,285.2 L545,285.2 L545,303.4 L544,303.4 L544,287.8 L543,287.8 L543,270.6 L542,270.6 L542,262.1 L541,262.1 L541,257.5 L540,257.5 L540,253.0 L539,253.0 L539,256.0 L538,256.0 L538,259.7 L537,259.7 L537,264.6 L536,264.6 L536,271.8 L535,271.8 L535,273.5 L534,273.5 L534,277.4 L533,277.4 L533,279.4 L532,279.4 L532,281.5 L531,281.5 L531,285.7 L530,285.7 L530,295.7 L529,295.7 L529,304.8 L528,304.8 L528,310.7 L527,310.7 L527,304.7 L526,304.7 L526,289.8 L525,289.8 L525,283.4 L524,283.4 L524,262.5 L523,262.5 L523,258.0 L522,258.0 L522,259.0 L521,259.0 L521,261.5 L520,261.5 L520,264.6 L519,264.6 L519,268.7 L518,268.7 L518,271.8 L517,271.8 L517,284.2 L516,284.2 L516,298.0 L515,298.0 L515,310.7 L514,310.7 L514,277.2 L513,277.2 L513,259.1 L512,259.1 L512,258.7 L511,258.7 L511,262.1 L510,262.1 L510,263.6 L509,263.6 L509,264.6 L508,264.6 L508,262.9 L507,262.9 L507,268.6 L506,268.6 L506,283.4 L505,283.4 L505,300.7 L504,300.7 L504,310.7 L503,310.7 L503,301.0 L502,301.0 L502,294.6 L501,294.6 L501,289.6 L500,289.6 L500,274.3 L499,274.3 L499,253.0 L498,253.0 L498,253.0 L497,253.0 L497,253.0 L496,253.0 L496,253.0 L495,253.0 L495,253.0 L494,253.0 L494,253.0 L493,253.0 L493,253.0 L492,253.0 L492,253.0 L491,253.0 L491,253.0 L490,253.0 L490,253.0 L489,253.0 L489,253.0 L488,253.0 L488,253.0 L487,253.0 L487,253.0 L486,253.0 L486,253.8 L485,253.8 L485,253.0 L484,253.0 L484,253.0 L483,253.0 L483,253.0 L482,253.0 L482,253.0 L481,253.0 L481,253.0 L480,253.0 L480,253.0 L479,253.0 L479,253.0 L478,253.0 L478,253.9 L477,253.9 L477,253.9 L476,253.9 L476,253.9 L475,253.9 L475,254.0 L474,254.0 L474,254.0 L473,254.0 L473,254.2 L472,254.2 L472,255.4 L471,255.4 L471,257.0 L470,257.0 L470,256.8 L469,256.8 L469,257.4 L468,257.4 L468,256.7 L467,256.7 L467,256.8 L466,256.8 L466,257.0 L465,257.0 L465,257.9 L464,257.9 L464,257.6 L463,257.6 L463,257.2 L462,257.2 L462,257.5 L461,257.5 L461,256.9 L460,256.9 L460,256.5 L459,256.5 L459,257.0 L458,257.0 L458,257.2 L457,257.2 L457,257.2 L456,257.2 L456,257.0 L455,257.0 L455,254.0 L454,254.0 L454,254.3 L453,254.3 L453,254.7 L452,254.7 L452,254.9 L451,254.9 L451,255.2 L450,255.2 L450,255.3 L449,255.3 L449,255.1 L448,255.1 L448,255.6 L447,255.6 L447,255.3 L446,255.3 L446,255.8 L445,255.8 L445,255.6 L444,255.6 L444,255.9 L443,255.9 L443,255.8 L442,255.8 L442,254.6 L441,254.6 L441,253.8 L440,253.8 L440,253.0 L439,253.0 L439,253.0 L438,253.0 L438,253.0 L437,253.0 L437,253.0 L436,253.0 L436,253.0 L435,253.0 L435,253.0 L434,253.0 L434,253.0 L433,253.0 L433,253.0 L432,253.0 L432,253.0 L431,253.0 L431,253.8 L430,253.8 L430,254.0 L429,254.0 L429,254.3 L428,254.3 L428,254.7 L427,254.7 L427,255.1 L426,255.1 L426,255.0 L425,255.0 L425,255.0 L424,255.0 L424,255.5 L423,255.5 L423,255.6 L422,255.6 L422,254.9 L421,254.9 L421,254.2 L420,254.2 L420,254.4 L419,254.4 L419,255.3 L418,255.3 L418,255.6 L417,255.6 L417,255.5 L416,255.5 L416,255.7 L415,255.7 L415,255.9 L414,255.9 L414,255.6 L413,255.6 L413,256.4 L412,256.4 L412,256.4 L411,256.4 L411,255.7 L410,255.7 L410,255.3 L409,255.3 L409,255.6 L408,255.6 L408,254.8 L407,254.8 L407,253.8 L406,253.8 L406,253.0 L405,253.0 L405,253.0 L404,253.0 L404,253.9 L403,253.9 L403,254.5 L402,254.5 L402,255.0 L401,255.0 L401,254.9 L400,254.9 L400,255.3 L399,255.3 L399,255.3 L398,255.3 L398,255.3 L397,255.3 L397,254.9 L396,254.9 L396,254.4 L395,254.4 L395,254.1 L394,254.1 L394,254.1 L393,254.1 L393,254.1 L392,254.1 L392,254.1 L391,254.1 L391,254.1 L390,254.1 L390,254.0 L389,254.0 L389,253.9 L388,253.9 L388,253.8 L387,253.8 L387,256.1 L386,256.1 L386,253.8 L385,253.8 L385,253.0 L384,253.0 L384,253.0 L383,253.0 L383,253.0 L382,253.0 L382,254.3 L381,254.3 L381,255.6 L380,255.6 L380,255.7 L379,255.7 L379,256.5 L378,256.5 L378,257.6 L377,257.6 L377,257.2 L376,257.2 L376,258.8 L375,258.8 L375,258.4 L374,258.4 L374,259.5 L373,259.5 L373,258.4 L372,258.4 L372,258.0 L371,258.0 L371,258.0 L370,258.0 L370,257.6 L369,257.6 L369,258.5 L368,258.5 L368,258.3 L367,258.3 L367,257.9 L366,257.9 L366,258.4 L365,258.4 L365,258.3 L364,258.3 L364,257.1 L363,257.1 L363,258.0 L362,258.0 L362,257.6 L361,257.6 L361,257.5 L360,257.5 L360,257.0 L359,257.0 L359,257.0 L358,257.0 L358,253.0 L357,253.0 L357,253.7 L356,253.7 L356,253.0 L355,253.0 L355,253.9 L354,253.9 L354,254.0 L353,254.0 L353,254.1 L352,254.1 L352,254.2 L351,254.2 L351,254.3 L350,254.3 L350,254.4 L349,254.4 L349,254.5 L348,254.5 L348,254.6 L347,254.6 L347,254.6 L346,254.6 L346,254.7 L345,254.7 L345,254.8 L344,254.8 L344,254.9 L343,254.9 L343,255.0 L342,255.0 L342,255.1 L341,255.1 L341,255.1 L340,255.1 L340,255.9 L339,255.9 L339,256.1 L338,256.1 L338,255.5 L337,255.5 L337,255.3 L336,255.3 L336,255.8 L335,255.8 L335,255.2 L334,255.2 L334,255.3 L333,255.3 L333,254.9 L332,254.9 L332,254.6 L331,254.6 L331,254.5 L330,254.5 L330,254.9 L329,254.9 L329,255.3 L328,255.3 L328,255.0 L327,255.0 L327,254.9 L326,254.9 L326,255.1 L325,255.1 L325,255.3 L324,255.3 L324,258.1 L323,258.1 L323,255.9 L322,255.9 L322,256.2 L321,256.2 L321,256.3 L320,256.3 L320,256.3 L319,256.3 L319,256.6 L318,256.6 L318,256.1 L317,256.1 L317,256.7 L316,256.7 L316,256.5 L315,256.5 L315,257.7 L314,257.7 L314,258.1 L313,258.1 L313,260.4 L312,260.4 L312,255.4 L311,255.4 L311,254.2 L310,254.2 L310,254.0 L309,254.0 L309,254.4 L308,254.4 L308,255.0 L307,255.0 L307,254.8 L306,254.8 L306,255.2 L305,255.2 L305,255.1 L304,255.1 L304,255.8 L303,255.8 L303,255.9 L302,255.9 L302,255.8 L301,255.8 L301,256.3 L300,256.3 L300,256.3 L299,256.3 L299,255.8 L298,255.8 L298,256.6 L297,256.6 L297,256.6 L296,256.6 L296,257.5 L295,257.5 L295,257.6 L294,257.6 L294,258.2 L293,258.2 L293,258.6 L292,258.6 L292,258.8 L291,258.8 L291,258.5 L290,258.5 L290,257.3 L289,257.3 L289,257.4 L288,257.4 L288,258.1 L287,258.1 L287,256.5 L286,256.5 L286,255.8 L285,255.8 L285,255.7 L284,255.7 L284,254.9 L283,254.9 L283,254.8 L282,254.8 L282,254.4 L281,254.4 L281,254.1 L280,254.1 L280,254.0 L279,254.0 L279,254.0 L278,254.0 L278,254.1 L277,254.1 L277,254.1 L276,254.1 L276,254.1 L275,254.1 L275,254.2 L274,254.2 L274,254.2 L273,254.2 L273,254.3 L272,254.3 L272,254.7 L271,254.7 L271,255.2 L270,255.2 L270,255.8 L269,255.8 L269,256.4 L268,256.4 L268,256.9 L267,256.9 L267,257.7 L266,257.7 L266,258.1 L265,258.1 L265,259.7 L264,259.7 L264,259.0 L263,259.0 L263,257.7 L262,257.7 L262,257.4 L261,257.4 L261,256.6 L260,256.6 L260,256.7 L259,256.7 L259,255.7 L258,255.7 L258,256.0 L257,256.0 L257,255.8 L256,255.8 L256,255.9 L255,255.9 L255,256.4 L254,256.4 L254,256.8 L253,256.8 L253,257.0 L252,257.0 L252,257.8 L251,257.8 L251,258.1 L250,258.1 L250,257.6 L249,257.6 L249,258.3 L248,258.3 L248,259.7 L247,259.7 L247,255.3 L246,255.3 L246,254.0 L245,254.0 L245,254.2 L244,254.2 L244,254.3 L243,254.3 L243,254.4 L242,254.4 L242,254.5 L241,254.5 L241,254.8 L240,254.8 L240,254.9 L239,254.9 L239,255.9 L238,255.9 L238,258.3 L237,258.3 L237,260.4 L236,260.4 L236,261.3 L235,261.3 L235,262.9 L234,262.9 L234,264.3 L233,264.3 L233,262.4 L232,262.4 L232,264.3 L231,264.3 L231,262.1 L230,262.1 L230,261.5 L229,261.5 L229,258.4 L228,258.4 L228,256.7 L227,256.7 L227,256.6 L226,256.6 L226,254.0 L225,254.0 L225,254.0 L224,254.0 L224,254.0 L223,254.0 L223,254.0 L222,254.0 L222,254.0 L221,254.0 L221,254.0 L220,254.0 L220,254.0 L219,254.0 L219,254.0 L218,254.0 L218,254.0 L217,254.0 L217,254.0 L216,254.0 L216,254.0 L215,254.0 L215,254.1 L214,254.1 L214,254.3 L213,254.3 L213,277.1 L212,277.1 L212,254.3 L211,254.3 L211,254.3 L210,254.3 L210,254.3 L209,254.3 L209,260.4 L208,260.4 L208,254.4 L207,254.4 L207,254.0 L206,254.0 L206,254.0 L205,254.0 L205,254.0 L204,254.0 L204,254.0 L203,254.0 L203,254.0 L202,254.0 L202,254.0 L201,254.0 L201,255.0 L200,255.0 L200,254.9 L199,254.9 L199,254.7 L198,254.7 L198,260.4 L197,260.4 L197,254.7 L196,254.7 L196,255.0 L195,255.0 L195,254.9 L194,254.9 L194,255.8 L193,255.8 L193,256.2 L192,256.2 L192,258.1 L191,258.1 L191,258.5 L190,258.5 L190,262.0 L189,262.0 L189,261.7 L188,261.7 L188,255.8 L187,255.8 L187,253.5 L186,253.5 L186,253.0 L185,253.0 L185,253.0 L184,253.0 L184,253.0 L183,253.0 L183,253.0 L182,253.0 L182,253.0 L181,253.0 L181,253.0 L180,253.0 L180,253.0 L179,253.0 L179,253.0 L178,253.0 L178,253.0 L177,253.0 L177,253.0 L176,253.0 L176,253.0 L175,253.0 L175,253.0 L174,253.0 L174,253.0 L173,253.0 L173,253.0 L172,253.0 L172,253.0 L171,253.0 L171,253.0 L170,253.0 L170,253.0 L169,253.0 L169,253.5 L168,253.5 L168,255.8 L167,255.8 L167,253.5 L166,253.5 L166,253.0 L165,253.0 L165,253.0 L164,253.0 L164,253.0 L163,253.0 L163,253.0 L162,253.0 L162,253.0 L161,253.0 L161,253.0 L160,253.0 L160,253.0 L159,253.0 L159,253.0 L158,253.0 L158,253.0 L157,253.0 L157,253.0 L156,253.0 L156,253.0 L155,253.0 L155,253.5 L154,253.5 L154,254.7 L153,254.7 L153,253.0 L152,253.0 L152,253.0 L151,253.0 L151,253.0 L150,253.0 L150,253.0 L149,253.0 L149,253.0 L148,253.0 L148,253.0 L147,253.0 L147,253.0 L146,253.0 L146,253.0 L145,253.0 L145,253.0 L144,253.0 L144,253.0 L143,253.0 L143,253.0 L142,253.0 L142,253.0 L141,253.0 L141,253.0 L140,253.0 L140,253.0 L139,253.0 L139,253.0 L138,253.0 L138,253.0 L137,253.0 L137,253.0 L136,253.0 L136,253.0 L135,253.0 L135,253.0 L134,253.0 L134,253.0 L133,253.0 L133,253.0 L132,253.0 L132,253.0 L131,253.0 L131,253.0 L130,253.0 L130,253.0 L129,253.0 L129,253.0 L128,253.0 L128,253.0 L127,253.0 L127,253.0 L126,253.0 L126,253.0 L125,253.0 L125,253.0 L124,253.0 L124,253.0 L123,253.0 L123,253.0 L122,253.0 L122,253.0 L121,253.0 L121,253.0 L120,253.0 L120,253.0 L119,253.0 L119,253.0 L118,253.0 L118,253.0 L117,253.0 L117,253.0 L116,253.0 L116,253.0 L115,253.0 L115,253.0 L114,253.0 L114,253.0 L113,253.0 L113,253.0 L112,253.0 L112,253.0 L111,253.0 L111,253.0 L110,253.0 L110,253.0 L109,253.0 L109,253.0 L108,253.0 L108,253.0 L107,253.0 L107,253.0 L106,253.0 L106,253.0 L105,253.0 L105,253.0 L104,253.0 L104,253.0 L103,253.0 L103,253.0 L102,253.0 L102,253.0 L101,253.0 L101,253.0 L100,253.0 L100,253.0 L99,253.0 L99,253.0 L98,253.0 L98,253.0 L97,253.0 L97,253.0 L96,253.0 L96,253.0 L95,253.0 L95,253.0 L94,253.0 L94,253.0 L93,253.0 L93,253.0 L92,253.0 L92,253.0 L91,253.0 L91,253.0 L90,253.0 L90,253.0 L89,253.0 L89,253.0 L88,253.0 L88,253.0 L87,253.0 L87,253.0 L86,253.0 L86,253.0 L85,253.0 L85,253.0 L84,253.0 L84,253.0 L83,253.0 L83,253.0 L82,253.0 L82,253.0 L81,253.0 L81,253.0 L80,253.0 L80,253.0 L79,253.0 L79,253.0 L78,253.0 L78,253.0 L77,253.0 L77,253.0 L76,253.0 L76,253.0 L75,253.0 L75,253.0 L74,253.0 L74,253.0 L73,253.0 L73,253.0 L72,253.0 L72,253.0 L71,253.0 L71,253.0 L70,253.0 L70,253.0 L69,253.0 L69,253.0 L68,253.0 L68,253.0 L67,253.0 L67,253.0 L66,253.0 L66,253.0 L65,253.0 L65,253.0 L64,253.0 L64,253.0 L63,253.0 L63,253.0 L62,253.0 L62,253.0 L61,253.0 L61,253.0 L60,253.0 L60,253.0 L59,253.0 L59,253.0 L58,253.0 L58,253.0 L57,253.0 L57,253.0 L56,253.0 L56,253.0 L55,253.0 L55,253.0 L54,253.0 L54,253.0 L53,253.0 L53,253.0 L52,253.0 L52,253.0 L51,253.0 L51,253.0 L50,253.0 L50,253.0 L49,253.0 L49,253.0 L48,253.0 L48,253.0 L47,253.0 L47,253.0 L46,253.0 L46,253.0 L45,253.0 L45,253.0 L44,253.0 L44,253.0 L43,253.0 L43,253.0 L42,253.0 L42,253.0 L41,253.0 L41,253.0 L40,253.0 L40,253.0 L39,253.0 L39,253.0 L38,253.0 L38,253.0 L37,253.0 L37,253.0 L36,253.0 L36,253.0 L35,253.0 L35,253.0 L34,253.0 L34,253.0 L33,253.0 L33,253.0 L32,253.0 L32,253.0 L31,253.0 L31,253.0 L30,253.0 L30,253.0 L29,253.0 L29,253.0 L28,253.0 L28,253.0 L27,253.0 L27,253.0 L26,253.0 L26,253.0 L25,253.0 L25,253.0 L24,253.0 L24,253.0 L23,253.0 L23,253.0 L22,253.0 L22,253.0 L21,253.0 L21,253.0 L20,253.0 L20,253.0 L19,253.0 L19,253.0 L18,253.0 L18,253.0 L17,253.0 L17,253.0 L16,253.0 L16,253.0 L15,253.0 L15,253.0 L14,253.0 L14,253.0 L13,253.0 L13,253.0 L12,253.0 L12,253.0 L11,253.0 L11,253.0 L10,253.0 L10,253.0 L9,253.0 L9,253.0 L8,253.0 L8,253.0 L7,253.0Z" fill="#48db96" shape-rendering="crispEdges"/>
<rect x="7" y="603" width="1146" height="1" fill="#40b886"/>
<path d="M7,603.0 L8,603.0 L8,603.0 L9,603.0 L9,603.0 L10,603.0 L10,603.0 L11,603.0 L11,603.0 L12,603.0 L12,603.0 L13,603.0 L13,603.0 L14,603.0 L14,603.0 L15,603.0 L15,603.0 L16,603.0 L16,603.0 L17,603.0 L17,603.0 L18,603.0 L18,603.0 L19,603.0 L19,603.0 L20,603.0 L20,602.5 L21,602.5 L21,603.0 L22,603.0 L22,603.0 L23,603.0 L23,603.0 L24,603.0 L24,603.0 L25,603.0 L25,603.0 L26,603.0 L26,603.0 L27,603.0 L27,603.0 L28,603.0 L28,603.0 L29,603.0 L29,603.0 L30,603.0 L30,603.0 L31,603.0 L31,603.0 L32,603.0 L32,603.0 L33,603.0 L33,603.0 L34,603.0 L34,603.0 L35,603.0 L35,603.0 L36,603.0 L36,603.0 L37,603.0 L37,603.0 L38,603.0 L38,603.0 L39,603.0 L39,603.0 L40,603.0 L40,603.0 L41,603.0 L41,603.0 L42,603.0 L42,603.0 L43,603.0 L43,603.0 L44,603.0 L44,603.0 L45,603.0 L45,603.0 L46,603.0 L46,603.0 L47,603.0 L47,603.0 L48,603.0 L48,603.0 L49,603.0 L49,603.0 L50,603.0 L50,603.0 L51,603.0 L51,603.0 L52,603.0 L52,603.0 L53,603.0 L53,603.0 L54,603.0 L54,603.0 L55,603.0 L55,603.0 L56,603.0 L56,603.0 L57,603.0 L57,603.0 L58,603.0 L58,603.0 L59,603.0 L59,603.0 L60,603.0 L60,603.0 L61,603.0 L61,602.5 L62,602.5 L62,603.0 L63,603.0 L63,601.7 L64,601.7 L64,601.9 L65,601.9 L65,603.0 L66,603.0 L66,602.5 L67,602.5 L67,603.0 L68,603.0 L68,603.0 L69,603.0 L69,603.0 L70,603.0 L70,603.0 L71,603.0 L71,603.0 L72,603.0 L72,603.0 L73,603.0 L73,603.0 L74,603.0 L74,603.0 L75,603.0 L75,603.0 L76,603.0 L76,603.0 L77,603.0 L77,603.0 L78,603.0 L78,603.0 L79,603.0 L79,602.1 L80,602.1 L80,601.1 L81,601.1 L81,602.5 L82,602.5 L82,603.0 L83,603.0 L83,603.0 L84,603.0 L84,603.0 L85,603.0 L85,603.0 L86,603.0 L86,603.0 L87,603.0 L87,603.0 L88,603.0 L88,603.0 L89,603.0 L89,603.0 L90,603.0 L90,603.0 L91,603.0 L91,603.0 L92,603.0 L92,603.0 L93,603.0 L93,603.0 L94,603.0 L94,603.0 L95,603.0 L95,603.0 L96,603.0 L96,603.0 L97,603.0 L97,603.0 L98,603.0 L98,603.0 L99,603.0 L99,603.0 L100,603.0 L100,603.0 L101,603.0 L101,603.0 L102,603.0 L102,603.0 L103,603.0 L103,603.0 L104,603.0 L104,603.0 L105,603.0 L105,603.0 L106,603.0 L106,603.0 L107,603.0 L107,603.0 L108,603.0 L108,603.0 L109,603.0 L109,603.0 L110,603.0 L110,603.0 L111,603.0 L111,603.0 L112,603.0 L112,603.0 L113,603.0 L113,603.0 L114,603.0 L114,603.0 L115,603.0 L115,603.0 L116,603.0 L116,603.0 L117,603.0 L117,602.5 L118,602.5 L118,601.8 L119,601.8 L119,601.4 L120,601.4 L120,601.6 L121,601.6 L121,601.8 L122,601.8 L122,602.0 L123,602.0 L123,603.0 L124,603.0 L124,603.0 L125,603.0 L125,603.0 L126,603.0 L126,602.5 L127,602.5 L127,603.0 L128,603.0 L128,603.0 L129,603.0 L129,603.0 L130,603.0 L130,603.0 L131,603.0 L131,603.0 L132,603.0 L132,603.0 L133,603.0 L133,603.0 L134,603.0 L134,603.0 L135,603.0 L135,603.0 L136,603.0 L136,603.0 L137,603.0 L137,603.0 L138,603.0 L138,603.0 L139,603.0 L139,603.0 L140,603.0 L140,603.0 L141,603.0 L141,603.0 L142,603.0 L142,603.0 L143,603.0 L143,603.0 L144,603.0 L144,602.3 L145,602.3 L145,601.9 L146,601.9 L146,601.3 L147,601.3 L147,601.7 L148,601.7 L148,602.2 L149,602.2 L149,603.0 L150,603.0 L150,603.0 L151,603.0 L151,603.0 L152,603.0 L152,603.0 L153,603.0 L153,603.0 L154,603.0 L154,603.0 L155,603.0 L155,603.0 L156,603.0 L156,603.0 L157,603.0 L157,603.0 L158,603.0 L158,602.2 L159,602.2 L159,603.0 L160,603.0 L160,603.0 L161,603.0 L161,602.1 L162,602.1 L162,602.0 L163,602.0 L163,602.0 L164,602.0 L164,601.9 L165,601.9 L165,601.9 L166,601.9 L166,601.8 L167,601.8 L167,601.7 L168,601.7 L168,601.6 L169,601.6 L169,601.6 L170,601.6 L170,601.7 L171,601.7 L171,601.8 L172,601.8 L172,601.9 L173,601.9 L173,602.0 L174,602.0 L174,602.0 L175,602.0 L175,602.0 L176,602.0 L176,602.0 L177,602.0 L177,602.0 L178,602.0 L178,602.0 L179,602.0 L179,602.0 L180,602.0 L180,602.0 L181,602.0 L181,602.1 L182,602.1 L182,603.0 L183,603.0 L183,603.0 L184,603.0 L184,603.0 L185,603.0 L185,603.0 L186,603.0 L186,603.0 L187,603.0 L187,603.0 L188,603.0 L188,603.0 L189,603.0 L189,602.3 L190,602.3 L190,603.0 L191,603.0 L191,603.0 L192,603.0 L192,603.0 L193,603.0 L193,603.0 L194,603.0 L194,603.0 L195,603.0 L195,603.0 L196,603.0 L196,603.0 L197,603.0 L197,597.7 L198,597.7 L198,597.7 L199,597.7 L199,602.5 L200,602.5 L200,602.8 L201,602.8 L201,603.0 L202,603.0 L202,603.0 L203,603.0 L203,603.0 L204,603.0 L204,603.0 L205,603.0 L205,603.0 L206,603.0 L206,603.0 L207,603.0 L207,603.0 L208,603.0 L208,581.1 L209,581.1 L209,601.2 L210,601.2 L210,603.0 L211,603.0 L211,602.0 L212,602.0 L212,600.4 L213,600.4 L213,600.6 L214,600.6 L214,601.8 L215,601.8 L215,601.9 L216,601.9 L216,601.9 L217,601.9 L217,602.0 L218,602.0 L218,602.1 L219,602.1 L219,603.0 L220,603.0 L220,603.0 L221,603.0 L221,603.0 L222,603.0 L222,603.0 L223,603.0 L223,603.0 L224,603.0 L224,589.9 L225,589.9 L225,584.4 L226,584.4 L226,587.1 L227,587.1 L227,591.7 L228,591.7 L228,585.8 L229,585.8 L229,559.3 L230,559.3 L230,540.4 L231,540.4 L231,545.4 L232,545.4 L232,551.1 L233,551.1 L233,561.7 L234,561.7 L234,567.0 L235,567.0 L235,574.5 L236,574.5 L236,577.7 L237,577.7 L237,586.7 L238,586.7 L238,592.9 L239,592.9 L239,585.5 L240,585.5 L240,583.5 L241,583.5 L241,581.7 L242,581.7 L242,587.9 L243,587.9 L243,598.1 L244,598.1 L244,600.6 L245,600.6 L245,595.5 L246,595.5 L246,584.1 L247,584.1 L247,565.1 L248,565.1 L248,569.0 L249,569.0 L249,572.9 L250,572.9 L250,575.1 L251,575.1 L251,585.8 L252,585.8 L252,591.9 L253,591.9 L253,594.9 L254,594.9 L254,594.7 L255,594.7 L255,592.5 L256,592.5 L256,592.0 L257,592.0 L257,591.4 L258,591.4 L258,589.8 L259,589.8 L259,585.4 L260,585.4 L260,578.2 L261,578.2 L261,571.3 L262,571.3 L262,559.9 L263,559.9 L263,551.8 L264,551.8 L264,543.8 L265,543.8 L265,540.4 L266,540.4 L266,549.2 L267,549.2 L267,555.0 L268,555.0 L268,569.7 L269,569.7 L269,588.4 L270,588.4 L270,589.5 L271,589.5 L271,590.4 L272,590.4 L272,592.4 L273,592.4 L273,590.0 L274,590.0 L274,589.8 L275,589.8 L275,590.2 L276,590.2 L276,588.4 L277,588.4 L277,590.9 L278,590.9 L278,595.5 L279,595.5 L279,598.9 L280,598.9 L280,601.0 L281,601.0 L281,592.2 L282,592.2 L282,584.4 L283,584.4 L283,587.3 L284,587.3 L284,588.4 L285,588.4 L285,588.4 L286,588.4 L286,585.1 L287,585.1 L287,575.3 L288,575.3 L288,554.4 L289,554.4 L289,562.1 L290,562.1 L290,567.1 L291,567.1 L291,573.1 L292,573.1 L292,574.5 L293,574.5 L293,573.2 L294,573.2 L294,572.4 L295,572.4 L295,580.4 L296,580.4 L296,579.4 L297,579.4 L297,579.0 L298,579.0 L298,578.6 L299,578.6 L299,577.0 L300,577.0 L300,577.2 L301,577.2 L301,573.2 L302,573.2 L302,573.3 L303,573.3 L303,567.0 L304,567.0 L304,565.7 L305,565.7 L305,585.8 L306,585.8 L306,599.1 L307,599.1 L307,591.0 L308,591.0 L308,580.4 L309,580.4 L309,580.9 L310,580.9 L310,581.6 L311,581.6 L311,549.7 L312,549.7 L312,514.0 L313,514.0 L313,506.3 L314,506.3 L314,521.5 L315,521.5 L315,534.1 L316,534.1 L316,541.7 L317,541.7 L317,575.1 L318,575.1 L318,578.0 L319,578.0 L319,585.4 L320,585.4 L320,578.5 L321,578.5 L321,571.1 L322,571.1 L322,574.2 L323,574.2 L323,577.7 L324,577.7 L324,594.5 L325,594.5 L325,598.1 L326,598.1 L326,596.4 L327,596.4 L327,592.6 L328,592.6 L328,585.8 L329,585.8 L329,567.7 L330,567.7 L330,582.1 L331,582.1 L331,589.1 L332,589.1 L332,590.1 L333,590.1 L333,591.1 L334,591.1 L334,592.9 L335,592.9 L335,589.8 L336,589.8 L336,584.5 L337,584.5 L337,578.8 L338,578.8 L338,572.6 L339,572.6 L339,564.4 L340,564.4 L340,548.3 L341,548.3 L341,547.7 L342,547.7 L342,550.3 L343,550.3 L343,554.1 L344,554.1 L344,575.2 L345,575.2 L345,586.6 L346,586.6 L346,587.4 L347,587.4 L347,585.8 L348,585.8 L348,585.8 L349,585.8 L349,585.8 L350,585.8 L350,590.9 L351,590.9 L351,596.9 L352,596.9 L352,600.1 L353,600.1 L353,592.4 L354,592.4 L354,582.1 L355,582.1 L355,573.8 L356,573.8 L356,565.7 L357,565.7 L357,559.5 L358,559.5 L358,553.8 L359,553.8 L359,530.4 L360,530.4 L360,546.1 L361,546.1 L361,551.6 L362,551.6 L362,554.5 L363,554.5 L363,557.2 L364,557.2 L364,558.3 L365,558.3 L365,560.1 L366,560.1 L366,562.0 L367,562.0 L367,565.2 L368,565.2 L368,571.6 L369,571.6 L369,576.1 L370,576.1 L370,580.4 L371,580.4 L371,580.0 L372,580.0 L372,548.5 L373,548.5 L373,533.7 L374,533.7 L374,548.4 L375,548.4 L375,555.5 L376,555.5 L376,566.3 L377,566.3 L377,567.1 L378,567.1 L378,575.1 L379,575.1 L379,586.2 L380,586.2 L380,592.7 L381,592.7 L381,593.3 L382,593.3 L382,579.1 L383,579.1 L383,585.7 L384,585.7 L384,589.4 L385,589.4 L385,579.5 L386,579.5 L386,553.9 L387,553.9 L387,551.7 L388,551.7 L388,575.1 L389,575.1 L389,588.2 L390,588.2 L390,594.0 L391,594.0 L391,593.8 L392,593.8 L392,595.3 L393,595.3 L393,587.5 L394,587.5 L394,582.8 L395,582.8 L395,574.0 L396,574.0 L396,565.3 L397,565.3 L397,564.4 L398,564.4 L398,568.8 L399,568.8 L399,569.6 L400,569.6 L400,581.8 L401,581.8 L401,587.5 L402,587.5 L402,590.5 L403,590.5 L403,592.0 L404,592.0 L404,592.5 L405,592.5 L405,593.5 L406,593.5 L406,592.1 L407,592.1 L407,560.4 L408,560.4 L408,545.7 L409,545.7 L409,540.4 L410,540.4 L410,531.0 L411,531.0 L411,531.0 L412,531.0 L412,564.4 L413,564.4 L413,578.2 L414,578.2 L414,583.2 L415,583.2 L415,582.6 L416,582.6 L416,585.0 L417,585.0 L417,587.7 L418,587.7 L418,590.1 L419,590.1 L419,589.6 L420,589.6 L420,589.1 L421,589.1 L421,588.5 L422,588.5 L422,577.0 L423,577.0 L423,567.1 L424,567.1 L424,570.1 L425,570.1 L425,569.8 L426,569.8 L426,575.3 L427,575.3 L427,577.8 L428,577.8 L428,593.8 L429,593.8 L429,596.9 L430,596.9 L430,599.1 L431,599.1 L431,599.6 L432,599.6 L432,600.4 L433,600.4 L433,597.0 L434,597.0 L434,590.9 L435,590.9 L435,583.1 L436,583.1 L436,594.5 L437,594.5 L437,594.7 L438,594.7 L438,592.1 L439,592.1 L439,588.1 L440,588.1 L440,585.0 L441,585.0 L441,579.1 L442,579.1 L442,566.0 L443,566.0 L443,551.1 L444,551.1 L444,554.3 L445,554.3 L445,560.4 L446,560.4 L446,564.1 L447,564.1 L447,575.1 L448,575.1 L448,583.1 L449,583.1 L449,588.2 L450,588.2 L450,590.0 L451,590.0 L451,593.7 L452,593.7 L452,592.5 L453,592.5 L453,595.0 L454,595.0 L454,595.1 L455,595.1 L455,583.1 L456,583.1 L456,581.3 L457,581.3 L457,578.4 L458,578.4 L458,581.1 L459,581.1 L459,582.4 L460,582.4 L460,584.1 L461,584.1 L461,587.6 L462,587.6 L462,592.4 L463,592.4 L463,596.1 L464,596.1 L464,597.5 L465,597.5 L465,598.2 L466,598.2 L466,598.5 L467,598.5 L467,599.3 L468,599.3 L468,599.8 L469,599.8 L469,600.6 L470,600.6 L470,601.1 L471,601.1 L471,601.1 L472,601.1 L472,602.0 L473,602.0 L473,602.9 L474,602.9 L474,603.0 L475,603.0 L475,603.0 L476,603.0 L476,603.0 L477,603.0 L477,603.0 L478,603.0 L478,603.0 L479,603.0 L479,603.0 L480,603.0 L480,602.9 L481,602.9 L481,602.0 L482,602.0 L482,602.0 L483,602.0 L483,601.9 L484,601.9 L484,601.9 L485,601.9 L485,601.9 L486,601.9 L486,601.9 L487,601.9 L487,601.9 L488,601.9 L488,602.0 L489,602.0 L489,602.0 L490,602.0 L490,602.0 L491,602.0 L491,602.1 L492,602.1 L492,602.1 L493,602.1 L493,603.0 L494,603.0 L494,603.0 L495,603.0 L495,603.0 L496,603.0 L496,603.0 L497,603.0 L497,603.0 L498,603.0 L498,603.0 L499,603.0 L499,602.3 L500,602.3 L500,601.5 L501,601.5 L501,600.0 L502,600.0 L502,599.9 L503,599.9 L503,599.5 L504,599.5 L504,599.6 L505,599.6 L505,600.4 L506,600.4 L506,601.0 L507,601.0 L507,601.6 L508,601.6 L508,601.8 L509,601.8 L509,601.9 L510,601.9 L510,602.1 L511,602.1 L511,602.3 L512,602.3 L512,601.9 L513,601.9 L513,601.1 L514,601.1 L514,600.5 L515,600.5 L515,600.8 L516,600.8 L516,600.8 L517,600.8 L517,601.1 L518,601.1 L518,601.2 L519,601.2 L519,601.4 L520,601.4 L520,601.5 L521,601.5 L521,601.5 L522,601.5 L522,601.1 L523,601.1 L523,600.8 L524,600.8 L524,600.9 L525,600.9 L525,600.0 L526,600.0 L526,600.5 L527,600.5 L527,600.5 L528,600.5 L528,600.9 L529,600.9 L529,601.3 L530,601.3 L530,601.6 L531,601.6 L531,601.6 L532,601.6 L532,601.7 L533,601.7 L533,601.7 L534,601.7 L534,601.8 L535,601.8 L535,601.9 L536,601.9 L536,601.9 L537,601.9 L537,602.0 L538,602.0 L538,602.0 L539,602.0 L539,603.0 L540,603.0 L540,603.0 L541,603.0 L541,603.0 L542,603.0 L542,602.3 L543,602.3 L543,602.1 L544,602.1 L544,601.7 L545,601.7 L545,601.4 L546,601.4 L546,601.1 L547,601.1 L547,600.8 L548,600.8 L548,600.6 L549,600.6 L549,600.1 L550,600.1 L550,600.1 L551,600.1 L551,599.6 L552,599.6 L552,599.6 L553,599.6 L553,599.6 L554,599.6 L554,600.4 L555,600.4 L555,599.9 L556,599.9 L556,600.0 L557,600.0 L557,600.3 L558,600.3 L558,600.9 L559,600.9 L559,601.2 L560,601.2 L560,601.6 L561,601.6 L561,601.3 L562,601.3 L562,600.9 L563,600.9 L563,600.7 L564,600.7 L564,600.5 L565,600.5 L565,601.0 L566,601.0 L566,600.6 L567,600.6 L567,600.8 L568,600.8 L568,600.8 L569,600.8 L569,601.3 L570,601.3 L570,601.7 L571,601.7 L571,602.0 L572,602.0 L572,603.0 L573,603.0 L573,603.0 L574,603.0 L574,602.3 L575,602.3 L575,601.9 L576,601.9 L576,601.5 L577,601.5 L577,601.1 L578,601.1 L578,601.4 L579,601.4 L579,601.6 L580,601.6 L580,601.8 L581,601.8 L581,602.0 L582,602.0 L582,602.3 L583,602.3 L583,603.0 L584,603.0 L584,602.0 L585,602.0 L585,601.9 L586,601.9 L586,601.7 L587,601.7 L587,601.5 L588,601.5 L588,601.3 L589,601.3 L589,601.3 L590,601.3 L590,601.4 L591,601.4 L591,601.5 L592,601.5 L592,601.5 L593,601.5 L593,601.6 L594,601.6 L594,601.7 L595,601.7 L595,601.8 L596,601.8 L596,601.9 L597,601.9 L597,601.9 L598,601.9 L598,602.0 L599,602.0 L599,602.0 L600,602.0 L600,602.0 L601,602.0 L601,602.1 L602,602.1 L602,603.0 L603,603.0 L603,603.0 L604,603.0 L604,603.0 L605,603.0 L605,603.0 L606,603.0 L606,603.0 L607,603.0 L607,602.3 L608,602.3 L608,600.7 L609,600.7 L609,598.9 L610,598.9 L610,599.5 L611,599.5 L611,599.4 L612,599.4 L612,599.9 L613,599.9 L613,599.9 L614,599.9 L614,599.6 L615,599.6 L615,599.4 L616,599.4 L616,599.9 L617,599.9 L617,599.5 L618,599.5 L618,600.3 L619,600.3 L619,600.0 L620,600.0 L620,600.2 L621,600.2 L621,601.0 L622,601.0 L622,601.4 L623,601.4 L623,601.4 L624,601.4 L624,601.3 L625,601.3 L625,601.1 L626,601.1 L626,600.9 L627,600.9 L627,600.8 L628,600.8 L628,600.8 L629,600.8 L629,601.1 L630,601.1 L630,601.3 L631,601.3 L631,601.5 L632,601.5 L632,601.6 L633,601.6 L633,601.7 L634,601.7 L634,601.9 L635,601.9 L635,602.0 L636,602.0 L636,603.0 L637,603.0 L637,603.0 L638,603.0 L638,602.3 L639,602.3 L639,602.0 L640,602.0 L640,601.8 L641,601.8 L641,601.6 L642,601.6 L642,601.9 L643,601.9 L643,603.0 L644,603.0 L644,602.3 L645,602.3 L645,603.0 L646,603.0 L646,603.0 L647,603.0 L647,602.0 L648,602.0 L648,601.9 L649,601.9 L649,601.8 L650,601.8 L650,601.7 L651,601.7 L651,601.6 L652,601.6 L652,601.6 L653,601.6 L653,601.6 L654,601.6 L654,601.6 L655,601.6 L655,601.6 L656,601.6 L656,601.6 L657,601.6 L657,601.6 L658,601.6 L658,601.7 L659,601.7 L659,601.8 L660,601.8 L660,602.3 L661,602.3 L661,603.0 L662,603.0 L662,603.0 L663,603.0 L663,602.0 L664,602.0 L664,601.9 L665,601.9 L665,601.8 L666,601.8 L666,601.7 L667,601.7 L667,601.6 L668,601.6 L668,601.5 L669,601.5 L669,601.4 L670,601.4 L670,601.4 L671,601.4 L671,601.3 L672,601.3 L672,601.2 L673,601.2 L673,601.1 L674,601.1 L674,601.0 L675,601.0 L675,601.1 L676,601.1 L676,600.8 L677,600.8 L677,601.3 L678,601.3 L678,600.9 L679,600.9 L679,601.1 L680,601.1 L680,601.2 L681,601.2 L681,601.4 L682,601.4 L682,601.5 L683,601.5 L683,601.6 L684,601.6 L684,601.7 L685,601.7 L685,601.8 L686,601.8 L686,601.9 L687,601.9 L687,602.0 L688,602.0 L688,603.0 L689,603.0 L689,603.0 L690,603.0 L690,602.3 L691,602.3 L691,602.0 L692,602.0 L692,601.5 L693,601.5 L693,600.8 L694,600.8 L694,601.0 L695,601.0 L695,601.0 L696,601.0 L696,601.1 L697,601.1 L697,601.2 L698,601.2 L698,601.4 L699,601.4 L699,601.5 L700,601.5 L700,601.6 L701,601.6 L701,601.7 L702,601.7 L702,601.9 L703,601.9 L703,602.0 L704,602.0 L704,603.0 L705,603.0 L705,603.0 L706,603.0 L706,602.3 L707,602.3 L707,603.0 L708,603.0 L708,601.9 L709,601.9 L709,601.8 L710,601.8 L710,601.6 L711,601.6 L711,601.6 L712,601.6 L712,601.6 L713,601.6 L713,601.7 L714,601.7 L714,601.7 L715,601.7 L715,601.8 L716,601.8 L716,601.8 L717,601.8 L717,601.9 L718,601.9 L718,601.9 L719,601.9 L719,601.9 L720,601.9 L720,602.0 L721,602.0 L721,602.0 L722,602.0 L722,601.8 L723,601.8 L723,601.6 L724,601.6 L724,601.4 L725,601.4 L725,601.2 L726,601.2 L726,601.0 L727,601.0 L727,601.1 L728,601.1 L728,600.9 L729,600.9 L729,600.5 L730,600.5 L730,600.9 L731,600.9 L731,601.1 L732,601.1 L732,601.3 L733,601.3 L733,601.6 L734,601.6 L734,601.8 L735,601.8 L735,601.9 L736,601.9 L736,602.0 L737,602.0 L737,602.1 L738,602.1 L738,603.0 L739,603.0 L739,603.0 L740,603.0 L740,602.3 L741,602.3 L741,603.0 L742,603.0 L742,602.0 L743,602.0 L743,601.9 L744,601.9 L744,601.8 L745,601.8 L745,601.7 L746,601.7 L746,601.6 L747,601.6 L747,601.7 L748,601.7 L748,601.7 L749,601.7 L749,601.8 L750,601.8 L750,601.9 L751,601.9 L751,602.0 L752,602.0 L752,602.0 L753,602.0 L753,602.1 L754,602.1 L754,602.1 L755,602.1 L755,603.0 L756,603.0 L756,603.0 L757,603.0 L757,603.0 L758,603.0 L758,603.0 L759,603.0 L759,603.0 L760,603.0 L760,603.0 L761,603.0 L761,602.3 L762,602.3 L762,601.8 L763,601.8 L763,601.2 L764,601.2 L764,600.5 L765,600.5 L765,600.1 L766,600.1 L766,600.0 L767,600.0 L767,599.6 L768,599.6 L768,599.2 L769,599.2 L769,599.3 L770,599.3 L770,599.2 L771,599.2 L771,599.1 L772,599.1 L772,599.5 L773,599.5 L773,598.9 L774,598.9 L774,598.8 L775,598.8 L775,599.5 L776,599.5 L776,599.9 L777,599.9 L777,599.5 L778,599.5 L778,600.0 L779,600.0 L779,600.4 L780,600.4 L780,600.9 L781,600.9 L781,601.3 L782,601.3 L782,601.7 L783,601.7 L783,602.0 L784,602.0 L784,603.0 L785,603.0 L785,603.0 L786,603.0 L786,603.0 L787,603.0 L787,602.3 L788,602.3 L788,603.0 L789,603.0 L789,603.0 L790,603.0 L790,603.0 L791,603.0 L791,603.0 L792,603.0 L792,603.0 L793,603.0 L793,603.0 L794,603.0 L794,603.0 L795,603.0 L795,603.0 L796,603.0 L796,603.0 L797,603.0 L797,603.0 L798,603.0 L798,603.0 L799,603.0 L799,603.0 L800,603.0 L800,603.0 L801,603.0 L801,603.0 L802,603.0 L802,603.0 L803,603.0 L803,603.0 L804,603.0 L804,603.0 L805,603.0 L805,603.0 L806,603.0 L806,603.0 L807,603.0 L807,603.0 L808,603.0 L808,603.0 L809,603.0 L809,603.0 L810,603.0 L810,603.0 L811,603.0 L811,603.0 L812,603.0 L812,603.0 L813,603.0 L813,603.0 L814,603.0 L814,603.0 L815,603.0 L815,603.0 L816,603.0 L816,603.0 L817,603.0 L817,603.0 L818,603.0 L818,598.7 L819,598.7 L819,584.9 L820,584.9 L820,582.8 L821,582.8 L821,557.3 L822,557.3 L822,516.6 L823,516.6 L823,512.7 L824,512.7 L824,521.2 L825,521.2 L825,531.4 L826,531.4 L826,544.9 L827,544.9 L827,566.3 L828,566.3 L828,578.2 L829,578.2 L829,584.1 L830,584.1 L830,585.8 L831,585.8 L831,582.8 L832,582.8 L832,579.6 L833,579.6 L833,576.5 L834,576.5 L834,586.3 L835,586.3 L835,596.2 L836,596.2 L836,598.9 L837,598.9 L837,588.6 L838,588.6 L838,581.6 L839,581.6 L839,568.8 L840,568.8 L840,559.9 L841,559.9 L841,564.4 L842,564.4 L842,573.1 L843,573.1 L843,579.0 L844,579.0 L844,587.9 L845,587.9 L845,588.8 L846,588.8 L846,587.9 L847,587.9 L847,587.4 L848,587.4 L848,586.4 L849,586.4 L849,585.4 L850,585.4 L850,589.2 L851,589.2 L851,596.9 L852,596.9 L852,598.8 L853,598.8 L853,588.7 L854,588.7 L854,580.3 L855,580.3 L855,588.3 L856,588.3 L856,544.6 L857,544.6 L857,533.8 L858,533.8 L858,547.3 L859,547.3 L859,557.3 L860,557.3 L860,561.2 L861,561.2 L861,565.9 L862,565.9 L862,565.6 L863,565.6 L863,576.2 L864,576.2 L864,575.2 L865,575.2 L865,571.6 L866,571.6 L866,562.4 L867,562.4 L867,556.7 L868,556.7 L868,574.5 L869,574.5 L869,584.4 L870,584.4 L870,591.5 L871,591.5 L871,597.5 L872,597.5 L872,601.0 L873,601.0 L873,593.4 L874,593.4 L874,569.2 L875,569.2 L875,557.3 L876,557.3 L876,564.5 L877,564.5 L877,580.4 L878,580.4 L878,587.1 L879,587.1 L879,591.7 L880,591.7 L880,592.3 L881,592.3 L881,590.4 L882,590.4 L882,590.0 L883,590.0 L883,591.9 L884,591.9 L884,589.2 L885,589.2 L885,594.3 L886,594.3 L886,599.4 L887,599.4 L887,601.3 L888,601.3 L888,600.9 L889,600.9 L889,581.6 L890,581.6 L890,581.6 L891,581.6 L891,581.6 L892,581.6 L892,525.5 L893,525.5 L893,515.9 L894,515.9 L894,545.8 L895,545.8 L895,553.2 L896,553.2 L896,545.2 L897,545.2 L897,549.5 L898,549.5 L898,562.9 L899,562.9 L899,572.2 L900,572.2 L900,589.2 L901,589.2 L901,589.2 L902,589.2 L902,588.4 L903,588.4 L903,579.0 L904,579.0 L904,589.0 L905,589.0 L905,597.5 L906,597.5 L906,601.0 L907,601.0 L907,588.6 L908,588.6 L908,563.7 L909,563.7 L909,562.5 L910,562.5 L910,561.2 L911,561.2 L911,567.1 L912,567.1 L912,578.2 L913,578.2 L913,583.9 L914,583.9 L914,589.2 L915,589.2 L915,589.5 L916,589.5 L916,590.9 L917,590.9 L917,590.1 L918,590.1 L918,590.5 L919,590.5 L919,590.5 L920,590.5 L920,590.5 L921,590.5 L921,590.5 L922,590.5 L922,571.8 L923,571.8 L923,562.4 L924,562.4 L924,571.4 L925,571.4 L925,576.5 L926,576.5 L926,578.0 L927,578.0 L927,579.0 L928,579.0 L928,586.5 L929,586.5 L929,589.2 L930,589.2 L930,596.2 L931,596.2 L931,599.7 L932,599.7 L932,601.5 L933,601.5 L933,602.6 L934,602.6 L934,600.6 L935,600.6 L935,598.4 L936,598.4 L936,586.6 L937,586.6 L937,557.2 L938,557.2 L938,555.2 L939,555.2 L939,545.2 L940,545.2 L940,537.0 L941,537.0 L941,530.6 L942,530.6 L942,530.3 L943,530.3 L943,521.0 L944,521.0 L944,538.2 L945,538.2 L945,565.5 L946,565.5 L946,588.0 L947,588.0 L947,593.0 L948,593.0 L948,594.2 L949,594.2 L949,595.1 L950,595.1 L950,595.6 L951,595.6 L951,597.5 L952,597.5 L952,599.1 L953,599.1 L953,600.2 L954,600.2 L954,600.6 L955,600.6 L955,600.7 L956,600.7 L956,601.3 L957,601.3 L957,601.8 L958,601.8 L958,603.0 L959,603.0 L959,603.0 L960,603.0 L960,603.0 L961,603.0 L961,603.0 L962,603.0 L962,603.0 L963,603.0 L963,603.0 L964,603.0 L964,603.0 L965,603.0 L965,602.5 L966,602.5 L966,603.0 L967,603.0 L967,603.0 L968,603.0 L968,603.0 L969,603.0 L969,603.0 L970,603.0 L970,603.0 L971,603.0 L971,603.0 L972,603.0 L972,603.0 L973,603.0 L973,603.0 L974,603.0 L974,603.0 L975,603.0 L975,603.0 L976,603.0 L976,603.0 L977,603.0 L977,603.0 L978,603.0 L978,603.0 L979,603.0 L979,603.0 L980,603.0 L980,603.0 L981,603.0 L981,603.0 L982,603.0 L982,603.0 L983,603.0 L983,603.0 L984,603.0 L984,603.0 L985,603.0 L985,602.5 L986,602.5 L986,601.9 L987,601.9 L987,602.5 L988,602.5 L988,603.0 L989,603.0 L989,603.0 L990,603.0 L990,603.0 L991,603.0 L991,603.0 L992,603.0 L992,603.0 L993,603.0 L993,603.0 L994,603.0 L994,602.5 L995,602.5 L995,601.6 L996,601.6 L996,602.5 L997,602.5 L997,603.0 L998,603.0 L998,603.0 L999,603.0 L999,603.0 L1000,603.0 L1000,603.0 L1001,603.0 L1001,603.0 L1002,603.0 L1002,603.0 L1003,603.0 L1003,603.0 L1004,603.0 L1004,603.0 L1005,603.0 L1005,603.0 L1006,603.0 L1006,603.0 L1007,603.0 L1007,603.0 L1008,603.0 L1008,603.0 L1009,603.0 L1009,603.0 L1010,603.0 L1010,603.0 L1011,603.0 L1011,603.0 L1012,603.0 L1012,603.0 L1013,603.0 L1013,603.0 L1014,603.0 L1014,603.0 L1015,603.0 L1015,603.0 L1016,603.0 L1016,603.0 L1017,603.0 L1017,603.0 L1018,603.0 L1018,603.0 L1019,603.0 L1019,603.0 L1020,603.0 L1020,603.0 L1021,603.0 L1021,603.0 L1022,603.0 L1022,603.0 L1023,603.0 L1023,603.0 L1024,603.0 L1024,603.0 L1025,603.0 L1025,603.0 L1026,603.0 L1026,603.0 L1027,603.0 L1027,603.0 L1028,603.0 L1028,603.0 L1029,603.0 L1029,603.0 L1030,603.0 L1030,603.0 L1031,603.0 L1031,603.0 L1032,603.0 L1032,602.5 L1033,602.5 L1033,602.0 L1034,602.0 L1034,602.5 L1035,602.5 L1035,603.0 L1036,603.0 L1036,603.0 L1037,603.0 L1037,603.0 L1038,603.0 L1038,603.0 L1039,603.0 L1039,603.0 L1040,603.0 L1040,603.0 L1041,603.0 L1041,603.0 L1042,603.0 L1042,603.0 L1043,603.0 L1043,603.0 L1044,603.0 L1044,602.5 L1045,602.5 L1045,598.5 L1046,598.5 L1046,602.5 L1047,602.5 L1047,603.0 L1048,603.0 L1048,603.0 L1049,603.0 L1049,603.0 L1050,603.0 L1050,603.0 L1051,603.0 L1051,603.0 L1052,603.0 L1052,603.0 L1053,603.0 L1053,603.0 L1054,603.0 L1054,603.0 L1055,603.0 L1055,603.0 L1056,603.0 L1056,603.0 L1057,603.0 L1057,603.0 L1058,603.0 L1058,603.0 L1059,603.0 L1059,603.0 L1060,603.0 L1060,603.0 L1061,603.0 L1061,603.0 L1062,603.0 L1062,603.0 L1063,603.0 L1063,602.5 L1064,602.5 L1064,584.6 L1065,584.6 L1065,601.5 L1066,601.5 L1066,600.9 L1067,600.9 L1067,600.0 L1068,600.0 L1068,599.5 L1069,599.5 L1069,599.3 L1070,599.3 L1070,600.3 L1071,600.3 L1071,600.1 L1072,600.1 L1072,600.7 L1073,600.7 L1073,600.6 L1074,600.6 L1074,600.0 L1075,600.0 L1075,600.0 L1076,600.0 L1076,600.5 L1077,600.5 L1077,601.1 L1078,601.1 L1078,600.8 L1079,600.8 L1079,601.5 L1080,601.5 L1080,602.0 L1081,602.0 L1081,601.8 L1082,601.8 L1082,601.6 L1083,601.6 L1083,601.4 L1084,601.4 L1084,601.2 L1085,601.2 L1085,601.0 L1086,601.0 L1086,600.8 L1087,600.8 L1087,601.0 L1088,601.0 L1088,601.3 L1089,601.3 L1089,601.5 L1090,601.5 L1090,600.7 L1091,600.7 L1091,598.5 L1092,598.5 L1092,598.5 L1093,598.5 L1093,599.3 L1094,599.3 L1094,600.4 L1095,600.4 L1095,601.6 L1096,601.6 L1096,603.0 L1097,603.0 L1097,603.0 L1098,603.0 L1098,602.5 L1099,602.5 L1099,603.0 L1100,603.0 L1100,603.0 L1101,603.0 L1101,603.0 L1102,603.0 L1102,603.0 L1103,603.0 L1103,603.0 L1104,603.0 L1104,603.0 L1105,603.0 L1105,603.0 L1106,603.0 L1106,603.0 L1107,603.0 L1107,603.0 L1108,603.0 L1108,603.0 L1109,603.0 L1109,603.0 L1110,603.0 L1110,603.0 L1111,603.0 L1111,603.0 L1112,603.0 L1112,603.0 L1113,603.0 L1113,603.0 L1114,603.0 L1114,603.0 L1115,603.0 L1115,603.0 L1116,603.0 L1116,603.0 L1117,603.0 L1117,603.0 L1118,603.0 L1118,603.0 L1119,603.0 L1119,603.0 L1120,603.0 L1120,603.0 L1121,603.0 L1121,603.0 L1122,603.0 L1122,603.0 L1123,603.0 L1123,603.0 L1124,603.0 L1124,603.0 L1125,603.0 L1125,603.0 L1126,603.0 L1126,602.5 L1127,602.5 L1127,602.0 L1128,602.0 L1128,602.5 L1129,602.5 L1129,603.0 L1130,603.0 L1130,603.0 L1131,603.0 L1131,603.0 L1132,603.0 L1132,603.0 L1133,603.0 L1133,603.0 L1134,603.0 L1134,603.0 L1135,603.0 L1135,603.0 L1136,603.0 L1136,603.0 L1137,603.0 L1137,603.0 L1138,603.0 L1138,603.0 L1139,603.0 L1139,603.0 L1140,603.0 L1140,603.0 L1141,603.0 L1141,603.0 L1142,603.0 L1142,603.0 L1143,603.0 L1143,603.0 L1144,603.0 L1144,603.0 L1145,603.0 L1145,603.0 L1146,603.0 L1146,602.5 L1147,602.5 L1147,598.9 L1148,598.9 L1148,602.5 L1149,602.5 L1149,603.0 L1150,603.0 L1150,603.0 L1151,603.0 L1151,603.0 L1152,603.0 L1152,603.0 L1153,603.0 L1153,603.0 L1153,603.0 L1153,603.0 L1153,603.0 L1153,603.0 L1152,603.0 L1152,603.0 L1151,603.0 L1151,603.0 L1150,603.0 L1150,603.0 L1149,603.0 L1149,603.4 L1148,603.4 L1148,607.7 L1147,607.7 L1147,603.4 L1146,603.4 L1146,603.0 L1145,603.0 L1145,603.0 L1144,603.0 L1144,603.0 L1143,603.0 L1143,603.0 L1142,603.0 L1142,603.0 L1141,603.0 L1141,603.0 L1140,603.0 L1140,603.0 L1139,603.0 L1139,603.0 L1138,603.0 L1138,603.0 L1137,603.0 L1137,603.0 L1136,603.0 L1136,603.0 L1135,603.0 L1135,603.0 L1134,603.0 L1134,603.0 L1133,603.0 L1133,603.0 L1132,603.0 L1132,603.0 L1131,603.0 L1131,603.0 L1130,603.0 L1130,603.0 L1129,603.0 L1129,603.4 L1128,603.4 L1128,604.5 L1127,604.5 L1127,603.4 L1126,603.4 L1126,603.0 L1125,603.0 L1125,603.0 L1124,603.0 L1124,603.0 L1123,603.0 L1123,603.0 L1122,603.0 L1122,603.0 L1121,603.0 L1121,603.0 L1120,603.0 L1120,603.0 L1119,603.0 L1119,603.0 L1118,603.0 L1118,603.0 L1117,603.0 L1117,603.0 L1116,603.0 L1116,603.0 L1115,603.0 L1115,603.0 L1114,603.0 L1114,603.0 L1113,603.0 L1113,603.0 L1112,603.0 L1112,603.0 L1111,603.0 L1111,603.0 L1110,603.0 L1110,603.0 L1109,603.0 L1109,603.0 L1108,603.0 L1108,603.0 L1107,603.0 L1107,603.0 L1106,603.0 L1106,603.0 L1105,603.0 L1105,603.0 L1104,603.0 L1104,603.0 L1103,603.0 L1103,603.0 L1102,603.0 L1102,603.0 L1101,603.0 L1101,603.0 L1100,603.0 L1100,603.0 L1099,603.0 L1099,603.4 L1098,603.4 L1098,603.0 L1097,603.0 L1097,604.0 L1096,604.0 L1096,604.4 L1095,604.4 L1095,605.1 L1094,605.1 L1094,606.0 L1093,606.0 L1093,606.2 L1092,606.2 L1092,606.2 L1091,606.2 L1091,605.5 L1090,605.5 L1090,605.2 L1089,605.2 L1089,605.1 L1088,605.1 L1088,605.5 L1087,605.5 L1087,606.2 L1086,606.2 L1086,606.1 L1085,606.1 L1085,605.6 L1084,605.6 L1084,605.3 L1083,605.3 L1083,604.8 L1082,604.8 L1082,604.5 L1081,604.5 L1081,604.2 L1080,604.2 L1080,605.4 L1079,605.4 L1079,606.6 L1078,606.6 L1078,606.2 L1077,606.2 L1077,606.2 L1076,606.2 L1076,615.4 L1075,615.4 L1075,607.0 L1074,607.0 L1074,605.9 L1073,605.9 L1073,605.5 L1072,605.5 L1072,605.9 L1071,605.9 L1071,605.4 L1070,605.4 L1070,606.2 L1069,606.2 L1069,606.8 L1068,606.8 L1068,607.0 L1067,607.0 L1067,606.4 L1066,606.4 L1066,605.2 L1065,605.2 L1065,619.6 L1064,619.6 L1064,603.4 L1063,603.4 L1063,603.0 L1062,603.0 L1062,603.0 L1061,603.0 L1061,603.0 L1060,603.0 L1060,603.0 L1059,603.0 L1059,603.0 L1058,603.0 L1058,603.0 L1057,603.0 L1057,603.0 L1056,603.0 L1056,603.0 L1055,603.0 L1055,603.0 L1054,603.0 L1054,603.0 L1053,603.0 L1053,603.0 L1052,603.0 L1052,603.0 L1051,603.0 L1051,603.0 L1050,603.0 L1050,603.0 L1049,603.0 L1049,603.0 L1048,603.0 L1048,603.0 L1047,603.0 L1047,603.4 L1046,603.4 L1046,606.6 L1045,606.6 L1045,603.4 L1044,603.4 L1044,603.0 L1043,603.0 L1043,603.0 L1042,603.0 L1042,603.0 L1041,603.0 L1041,603.0 L1040,603.0 L1040,603.0 L1039,603.0 L1039,603.0 L1038,603.0 L1038,603.0 L1037,603.0 L1037,603.0 L1036,603.0 L1036,603.0 L1035,603.0 L1035,603.4 L1034,603.4 L1034,604.5 L1033,604.5 L1033,603.4 L1032,603.4 L1032,603.0 L1031,603.0 L1031,603.0 L1030,603.0 L1030,603.0 L1029,603.0 L1029,603.0 L1028,603.0 L1028,603.0 L1027,603.0 L1027,603.0 L1026,603.0 L1026,603.0 L1025,603.0 L1025,603.0 L1024,603.0 L1024,603.0 L1023,603.0 L1023,603.0 L1022,603.0 L1022,603.0 L1021,603.0 L1021,603.0 L1020,603.0 L1020,603.0 L1019,603.0 L1019,603.0 L1018,603.0 L1018,603.0 L1017,603.0 L1017,603.0 L1016,603.0 L1016,603.0 L1015,603.0 L1015,603.0 L1014,603.0 L1014,603.0 L1013,603.0 L1013,603.0 L1012,603.0 L1012,603.0 L1011,603.0 L1011,603.0 L1010,603.0 L1010,603.0 L1009,603.0 L1009,603.0 L1008,603.0 L1008,603.0 L1007,603.0 L1007,603.0 L1006,603.0 L1006,603.0 L1005,603.0 L1005,603.0 L1004,603.0 L1004,603.0 L1003,603.0 L1003,603.0 L1002,603.0 L1002,603.0 L1001,603.0 L1001,603.0 L1000,603.0 L1000,603.0 L999,603.0 L999,603.0 L998,603.0 L998,603.0 L997,603.0 L997,603.4 L996,603.4 L996,605.1 L995,605.1 L995,603.4 L994,603.4 L994,603.0 L993,603.0 L993,603.0 L992,603.0 L992,603.0 L991,603.0 L991,603.0 L990,603.0 L990,603.0 L989,603.0 L989,603.0 L988,603.0 L988,603.4 L987,603.4 L987,604.5 L986,604.5 L986,603.4 L985,603.4 L985,603.0 L984,603.0 L984,603.0 L983,603.0 L983,603.0 L982,603.0 L982,603.0 L981,603.0 L981,603.0 L980,603.0 L980,603.0 L979,603.0 L979,603.0 L978,603.0 L978,603.0 L977,603.0 L977,603.0 L976,603.0 L976,603.0 L975,603.0 L975,603.0 L974,603.0 L974,603.0 L973,603.0 L973,603.0 L972,603.0 L972,603.0 L971,603.0 L971,603.0 L970,603.0 L970,603.0 L969,603.0 L969,603.0 L968,603.0 L968,603.0 L967,603.0 L967,603.0 L966,603.0 L966,603.4 L965,603.4 L965,604.0 L964,604.0 L964,604.0 L963,604.0 L963,604.0 L962,604.0 L962,604.0 L961,604.0 L961,603.1 L960,603.1 L960,603.0 L959,603.0 L959,603.0 L958,603.0 L958,604.1 L957,604.1 L957,604.6 L956,604.6 L956,605.1 L955,605.1 L955,605.9 L954,605.9 L954,606.9 L953,606.9 L953,608.8 L952,608.8 L952,610.2 L951,610.2 L951,614.0 L950,614.0 L950,616.8 L949,616.8 L949,619.5 L948,619.5 L948,625.5 L947,625.5 L947,628.8 L946,628.8 L946,638.2 L945,638.2 L945,642.5 L944,642.5 L944,651.6 L943,651.6 L943,652.4 L942,652.4 L942,659.9 L941,659.9 L941,656.7 L940,656.7 L940,653.5 L939,653.5 L939,646.6 L938,646.6 L938,636.9 L937,636.9 L937,623.5 L936,623.5 L936,613.5 L935,613.5 L935,605.1 L934,605.1 L934,603.6 L933,603.6 L933,604.5 L932,604.5 L932,605.9 L931,605.9 L931,610.6 L930,610.6 L930,619.1 L929,619.1 L929,624.2 L928,624.2 L928,634.1 L927,634.1 L927,636.7 L926,636.7 L926,640.8 L925,640.8 L925,646.5 L924,646.5 L924,656.1 L923,656.1 L923,643.3 L922,643.3 L922,632.7 L921,632.7 L921,627.5 L920,627.5 L920,627.6 L919,627.6 L919,627.8 L918,627.8 L918,628.0 L917,628.0 L917,627.2 L916,627.2 L916,628.7 L915,628.7 L915,629.1 L914,629.1 L914,631.0 L913,631.0 L913,635.5 L912,635.5 L912,640.8 L911,640.8 L911,651.5 L910,651.5 L910,662.4 L909,662.4 L909,641.5 L908,641.5 L908,609.4 L907,609.4 L907,604.9 L906,604.9 L906,609.7 L905,609.7 L905,615.1 L904,615.1 L904,622.9 L903,622.9 L903,621.2 L902,621.2 L902,617.8 L901,617.8 L901,621.7 L900,621.7 L900,631.9 L899,631.9 L899,646.1 L898,646.1 L898,670.1 L897,670.1 L897,666.3 L896,666.3 L896,652.1 L895,652.1 L895,676.9 L894,676.9 L894,699.4 L893,699.4 L893,677.9 L892,677.9 L892,640.4 L891,640.4 L891,623.6 L890,623.6 L890,610.2 L889,610.2 L889,603.1 L888,603.1 L888,605.2 L887,605.2 L887,607.6 L886,607.6 L886,614.1 L885,614.1 L885,620.6 L884,620.6 L884,622.5 L883,622.5 L883,628.0 L882,628.0 L882,628.8 L881,628.8 L881,628.6 L880,628.6 L880,629.5 L879,629.5 L879,633.5 L878,633.5 L878,637.1 L877,637.1 L877,644.6 L876,644.6 L876,654.6 L875,654.6 L875,661.2 L874,661.2 L874,619.1 L873,619.1 L873,603.1 L872,603.1 L872,605.3 L871,605.3 L871,608.0 L870,608.0 L870,618.7 L869,618.7 L869,628.0 L868,628.0 L868,626.5 L867,626.5 L867,633.2 L866,633.2 L866,662.4 L865,662.4 L865,631.8 L864,631.8 L864,633.9 L863,633.9 L863,656.1 L862,656.1 L862,648.2 L861,648.2 L861,644.6 L860,644.6 L860,641.7 L859,641.7 L859,656.1 L858,656.1 L858,683.5 L857,683.5 L857,659.8 L856,659.8 L856,628.4 L855,628.4 L855,613.0 L854,613.0 L854,607.6 L853,607.6 L853,604.1 L852,604.1 L852,606.3 L851,606.3 L851,612.7 L850,612.7 L850,618.3 L849,618.3 L849,629.3 L848,629.3 L848,631.3 L847,631.3 L847,634.4 L846,634.4 L846,633.7 L845,633.7 L845,637.0 L844,637.0 L844,641.0 L843,641.0 L843,644.6 L842,644.6 L842,653.5 L841,653.5 L841,651.6 L840,651.6 L840,649.7 L839,649.7 L839,622.9 L838,622.9 L838,604.6 L837,604.6 L837,605.1 L836,605.1 L836,607.6 L835,607.6 L835,614.3 L834,614.3 L834,628.0 L833,628.0 L833,623.6 L832,623.6 L832,619.9 L831,619.9 L831,626.3 L830,626.3 L830,629.4 L829,629.4 L829,634.7 L828,634.7 L828,653.1 L827,653.1 L827,673.9 L826,673.9 L826,675.2 L825,675.2 L825,679.7 L824,679.7 L824,697.5 L823,697.5 L823,685.9 L822,685.9 L822,666.4 L821,666.4 L821,654.8 L820,654.8 L820,631.2 L819,631.2 L819,608.5 L818,608.5 L818,603.0 L817,603.0 L817,603.0 L816,603.0 L816,603.0 L815,603.0 L815,603.0 L814,603.0 L814,603.0 L813,603.0 L813,603.0 L812,603.0 L812,603.0 L811,603.0 L811,603.1 L810,603.1 L810,603.0 L809,603.0 L809,603.0 L808,603.0 L808,603.0 L807,603.0 L807,603.0 L806,603.0 L806,603.0 L805,603.0 L805,603.0 L804,603.0 L804,603.0 L803,603.0 L803,603.0 L802,603.0 L802,603.0 L801,603.0 L801,603.0 L800,603.0 L800,603.0 L799,603.0 L799,603.0 L798,603.0 L798,603.0 L797,603.0 L797,603.0 L796,603.0 L796,603.0 L795,603.0 L795,603.0 L794,603.0 L794,603.0 L793,603.0 L793,603.0 L792,603.0 L792,603.0 L791,603.0 L791,603.0 L790,603.0 L790,603.0 L789,603.0 L789,603.0 L788,603.0 L788,603.6 L787,603.6 L787,603.0 L786,603.0 L786,603.0 L785,603.0 L785,604.0 L784,604.0 L784,604.2 L783,604.2 L783,604.5 L782,604.5 L782,604.8 L781,604.8 L781,605.4 L780,605.4 L780,605.8 L779,605.8 L779,606.7 L778,606.7 L778,606.4 L777,606.4 L777,607.2 L776,607.2 L776,606.9 L775,606.9 L775,606.8 L774,606.8 L774,607.7 L773,607.7 L773,606.6 L772,606.6 L772,607.3 L771,607.3 L771,606.9 L770,606.9 L770,606.2 L769,606.2 L769,606.6 L768,606.6 L768,606.6 L767,606.6 L767,606.5 L766,606.5 L766,606.1 L765,606.1 L765,605.7 L764,605.7 L764,604.9 L763,604.9 L763,604.2 L762,604.2 L762,603.6 L761,603.6 L761,603.0 L760,603.0 L760,603.0 L759,603.0 L759,603.0 L758,603.0 L758,603.0 L757,603.0 L757,603.9 L756,603.9 L756,604.0 L755,604.0 L755,604.0 L754,604.0 L754,604.1 L753,604.1 L753,604.2 L752,604.2 L752,604.3 L751,604.3 L751,604.5 L750,604.5 L750,604.6 L749,604.6 L749,604.8 L748,604.8 L748,604.9 L747,604.9 L747,605.1 L746,605.1 L746,604.9 L745,604.9 L745,604.7 L744,604.7 L744,604.4 L743,604.4 L743,604.2 L742,604.2 L742,603.9 L741,603.9 L741,603.6 L740,603.6 L740,603.0 L739,603.0 L739,603.0 L738,603.0 L738,604.1 L737,604.1 L737,604.3 L736,604.3 L736,604.5 L735,604.5 L735,604.7 L734,604.7 L734,604.9 L733,604.9 L733,605.3 L732,605.3 L732,605.1 L731,605.1 L731,605.1 L730,605.1 L730,605.7 L729,605.7 L729,605.3 L728,605.3 L728,605.6 L727,605.6 L727,605.3 L726,605.3 L726,605.0 L725,605.0 L725,604.8 L724,604.8 L724,604.6 L723,604.6 L723,604.4 L722,604.4 L722,604.2 L721,604.2 L721,604.2 L720,604.2 L720,604.3 L719,604.3 L719,604.4 L718,604.4 L718,604.4 L717,604.4 L717,604.5 L716,604.5 L716,604.5 L715,604.5 L715,604.6 L714,604.6 L714,604.6 L713,604.6 L713,604.7 L712,604.7 L712,604.8 L711,604.8 L711,604.8 L710,604.8 L710,604.4 L709,604.4 L709,604.2 L708,604.2 L708,603.9 L707,603.9 L707,603.6 L706,603.6 L706,603.0 L705,603.0 L705,604.0 L704,604.0 L704,604.2 L703,604.2 L703,604.5 L702,604.5 L702,604.7 L701,604.7 L701,605.1 L700,605.1 L700,604.8 L699,604.8 L699,604.9 L698,604.9 L698,605.2 L697,605.2 L697,605.5 L696,605.5 L696,605.6 L695,605.6 L695,606.4 L694,606.4 L694,606.2 L693,606.2 L693,604.8 L692,604.8 L692,604.2 L691,604.2 L691,603.6 L690,603.6 L690,603.0 L689,603.0 L689,604.0 L688,604.0 L688,604.2 L687,604.2 L687,604.4 L686,604.4 L686,604.6 L685,604.6 L685,604.8 L684,604.8 L684,605.1 L683,605.1 L683,604.9 L682,604.9 L682,605.4 L681,605.4 L681,605.4 L680,605.4 L680,605.7 L679,605.7 L679,605.1 L678,605.1 L678,605.7 L677,605.7 L677,605.7 L676,605.7 L676,605.8 L675,605.8 L675,605.3 L674,605.3 L674,605.1 L673,605.1 L673,605.2 L672,605.2 L672,605.4 L671,605.4 L671,605.1 L670,605.1 L670,605.0 L669,605.0 L669,604.9 L668,604.9 L668,604.8 L667,604.8 L667,604.6 L666,604.6 L666,604.4 L665,604.4 L665,604.3 L664,604.3 L664,604.1 L663,604.1 L663,604.0 L662,604.0 L662,603.0 L661,603.0 L661,603.6 L660,603.6 L660,604.7 L659,604.7 L659,604.8 L658,604.8 L658,605.0 L657,605.0 L657,605.1 L656,605.1 L656,604.7 L655,604.7 L655,604.7 L654,604.7 L654,605.0 L653,605.0 L653,605.1 L652,605.1 L652,605.0 L651,605.0 L651,604.8 L650,604.8 L650,604.6 L649,604.6 L649,604.4 L648,604.4 L648,604.2 L647,604.2 L647,604.0 L646,604.0 L646,603.0 L645,603.0 L645,603.6 L644,603.6 L644,604.0 L643,604.0 L643,604.5 L642,604.5 L642,605.1 L641,605.1 L641,604.7 L640,604.7 L640,604.2 L639,604.2 L639,603.6 L638,603.6 L638,603.0 L637,603.0 L637,603.9 L636,603.9 L636,604.1 L635,604.1 L635,604.3 L634,604.3 L634,604.5 L633,604.5 L633,604.8 L632,604.8 L632,604.9 L631,604.9 L631,605.3 L630,605.3 L630,605.0 L629,605.0 L629,605.5 L628,605.5 L628,605.7 L627,605.7 L627,605.5 L626,605.5 L626,605.1 L625,605.1 L625,605.5 L624,605.5 L624,605.1 L623,605.1 L623,605.3 L622,605.3 L622,605.3 L621,605.3 L621,605.8 L620,605.8 L620,606.7 L619,606.7 L619,606.2 L618,606.2 L618,606.5 L617,606.5 L617,607.0 L616,607.0 L616,606.1 L615,606.1 L615,607.0 L614,607.0 L614,607.4 L613,607.4 L613,607.4 L612,607.4 L612,606.9 L611,606.9 L611,607.0 L610,607.0 L610,607.3 L609,607.3 L609,605.3 L608,605.3 L608,603.6 L607,603.6 L607,603.0 L606,603.0 L606,603.0 L605,603.0 L605,603.0 L604,603.0 L604,604.0 L603,604.0 L603,604.1 L602,604.1 L602,604.2 L601,604.2 L601,604.3 L600,604.3 L600,604.4 L599,604.4 L599,604.5 L598,604.5 L598,604.6 L597,604.6 L597,604.7 L596,604.7 L596,604.7 L595,604.7 L595,604.8 L594,604.8 L594,604.8 L593,604.8 L593,604.9 L592,604.9 L592,605.0 L591,605.0 L591,605.0 L590,605.0 L590,604.8 L589,604.8 L589,605.1 L588,605.1 L588,604.7 L587,604.7 L587,604.5 L586,604.5 L586,604.2 L585,604.2 L585,604.0 L584,604.0 L584,603.0 L583,603.0 L583,603.6 L582,603.6 L582,603.0 L581,603.0 L581,604.1 L580,604.1 L580,604.3 L579,604.3 L579,604.5 L578,604.5 L578,604.8 L577,604.8 L577,604.4 L576,604.4 L576,604.0 L575,604.0 L575,603.6 L574,603.6 L574,603.0 L573,603.0 L573,603.9 L572,603.9 L572,604.2 L571,604.2 L571,604.5 L570,604.5 L570,604.7 L569,604.7 L569,605.7 L568,605.7 L568,605.3 L567,605.3 L567,605.6 L566,605.6 L566,605.7 L565,605.7 L565,606.2 L564,606.2 L564,605.4 L563,605.4 L563,605.6 L562,605.6 L562,605.4 L561,605.4 L561,605.1 L560,605.1 L560,605.3 L559,605.3 L559,605.6 L558,605.6 L558,606.6 L557,606.6 L557,606.7 L556,606.7 L556,606.3 L555,606.3 L555,606.5 L554,606.5 L554,606.6 L553,606.6 L553,606.4 L552,606.4 L552,607.3 L551,607.3 L551,606.5 L550,606.5 L550,606.3 L549,606.3 L549,605.3 L548,605.3 L548,605.5 L547,605.5 L547,605.1 L546,605.1 L546,604.7 L545,604.7 L545,604.3 L544,604.3 L544,603.0 L543,603.0 L543,603.6 L542,603.6 L542,603.0 L541,603.0 L541,603.0 L540,603.0 L540,604.0 L539,604.0 L539,604.2 L538,604.2 L538,604.2 L537,604.2 L537,604.3 L536,604.3 L536,604.3 L535,604.3 L535,604.4 L534,604.4 L534,604.5 L533,604.5 L533,604.5 L532,604.5 L532,604.6 L531,604.6 L531,604.6 L530,604.6 L530,604.9 L529,604.9 L529,605.1 L528,605.1 L528,605.3 L527,605.3 L527,605.1 L526,605.1 L526,605.8 L525,605.8 L525,605.5 L524,605.5 L524,605.8 L523,605.8 L523,606.4 L522,606.4 L522,606.6 L521,606.6 L521,606.7 L520,606.7 L520,606.0 L519,606.0 L519,605.9 L518,605.9 L518,605.5 L517,605.5 L517,605.7 L516,605.7 L516,605.7 L515,605.7 L515,606.2 L514,606.2 L514,605.0 L513,605.0 L513,604.2 L512,604.2 L512,603.6 L511,603.6 L511,604.0 L510,604.0 L510,604.4 L509,604.4 L509,604.7 L508,604.7 L508,605.1 L507,605.1 L507,605.8 L506,605.8 L506,606.5 L505,606.5 L505,607.3 L504,607.3 L504,607.3 L503,607.3 L503,606.1 L502,606.1 L502,606.6 L501,606.6 L501,604.7 L500,604.7 L500,603.6 L499,603.6 L499,603.0 L498,603.0 L498,603.0 L497,603.0 L497,603.0 L496,603.0 L496,603.0 L495,603.0 L495,603.0 L494,603.0 L494,603.0 L493,603.0 L493,603.0 L492,603.0 L492,603.9 L491,603.9 L491,604.0 L490,604.0 L490,604.0 L489,604.0 L489,604.1 L488,604.1 L488,604.1 L487,604.1 L487,604.1 L486,604.1 L486,604.2 L485,604.2 L485,604.3 L484,604.3 L484,604.4 L483,604.4 L483,604.4 L482,604.4 L482,604.5 L481,604.5 L481,603.1 L480,603.1 L480,603.0 L479,603.0 L479,603.0 L478,603.0 L478,603.0 L477,603.0 L477,603.0 L476,603.0 L476,603.0 L475,603.0 L475,603.0 L474,603.0 L474,603.5 L473,603.5 L473,603.0 L472,603.0 L472,604.4 L471,604.4 L471,605.2 L470,605.2 L470,606.7 L469,606.7 L469,607.5 L468,607.5 L468,608.7 L467,608.7 L467,609.5 L466,609.5 L466,611.4 L465,611.4 L465,612.7 L464,612.7 L464,614.6 L463,614.6 L463,615.4 L462,615.4 L462,616.2 L461,616.2 L461,617.5 L460,617.5 L460,618.9 L459,618.9 L459,620.6 L458,620.6 L458,623.3 L457,623.3 L457,622.5 L456,622.5 L456,621.8 L455,621.8 L455,620.5 L454,620.5 L454,619.0 L453,619.0 L453,619.6 L452,619.6 L452,620.2 L451,620.2 L451,623.3 L450,623.3 L450,625.9 L449,625.9 L449,631.2 L448,631.2 L448,634.1 L447,634.1 L447,642.2 L446,642.2 L446,652.8 L445,652.8 L445,661.1 L444,661.1 L444,655.4 L443,655.4 L443,642.0 L442,642.0 L442,635.1 L441,635.1 L441,626.4 L440,626.4 L440,621.8 L439,621.8 L439,618.5 L438,618.5 L438,613.8 L437,613.8 L437,616.6 L436,616.6 L436,621.6 L435,621.6 L435,624.7 L434,624.7 L434,615.0 L433,615.0 L433,610.5 L432,610.5 L432,607.2 L431,607.2 L431,606.6 L430,606.6 L430,607.0 L429,607.0 L429,615.7 L428,615.7 L428,634.8 L427,634.8 L427,640.2 L426,640.2 L426,651.0 L425,651.0 L425,644.0 L424,644.0 L424,647.7 L423,647.7 L423,653.9 L422,653.9 L422,644.3 L421,644.3 L421,629.1 L420,629.1 L420,628.6 L419,628.6 L419,627.0 L418,627.0 L418,630.1 L417,630.1 L417,635.1 L416,635.1 L416,642.2 L415,642.2 L415,640.9 L414,640.9 L414,646.4 L413,646.4 L413,651.3 L412,651.3 L412,659.1 L411,659.1 L411,664.1 L410,664.1 L410,649.7 L409,649.7 L409,644.0 L408,644.0 L408,636.7 L407,636.7 L407,627.4 L406,627.4 L406,623.4 L405,623.4 L405,622.5 L404,622.5 L404,620.5 L403,620.5 L403,624.0 L402,624.0 L402,629.1 L401,629.1 L401,631.3 L400,631.3 L400,634.9 L399,634.9 L399,639.1 L398,639.1 L398,651.0 L397,651.0 L397,648.8 L396,648.8 L396,656.8 L395,656.8 L395,632.0 L394,632.0 L394,617.5 L393,617.5 L393,612.8 L392,612.8 L392,614.0 L391,614.0 L391,613.5 L390,613.5 L390,617.6 L389,617.6 L389,636.6 L388,636.6 L388,662.4 L387,662.4 L387,684.4 L386,684.4 L386,642.9 L385,642.9 L385,621.1 L384,621.1 L384,614.6 L383,614.6 L383,609.5 L382,609.5 L382,610.5 L381,610.5 L381,618.9 L380,618.9 L380,633.4 L379,633.4 L379,654.4 L378,654.4 L378,662.9 L377,662.9 L377,661.0 L376,661.0 L376,667.0 L375,667.0 L375,672.9 L374,672.9 L374,681.5 L373,681.5 L373,681.5 L372,681.5 L372,642.1 L371,642.1 L371,640.5 L370,640.5 L370,642.2 L369,642.2 L369,651.0 L368,651.0 L368,664.0 L367,664.0 L367,677.2 L366,677.2 L366,676.0 L365,676.0 L365,673.6 L364,673.6 L364,672.5 L363,672.5 L363,671.7 L362,671.7 L362,676.7 L361,676.7 L361,685.9 L360,685.9 L360,676.4 L359,676.4 L359,658.4 L358,658.4 L358,648.4 L357,648.4 L357,639.8 L356,639.8 L356,630.3 L355,630.3 L355,612.8 L354,612.8 L354,604.9 L353,604.9 L353,605.8 L352,605.8 L352,609.1 L351,609.1 L351,613.1 L350,613.1 L350,621.5 L349,621.5 L349,627.7 L348,627.7 L348,629.3 L347,629.3 L347,631.9 L346,631.9 L346,636.4 L345,636.4 L345,643.7 L344,643.7 L344,667.0 L343,667.0 L343,665.9 L342,665.9 L342,661.6 L341,661.6 L341,658.2 L340,658.2 L340,649.0 L339,649.0 L339,642.0 L338,642.0 L338,636.6 L337,636.6 L337,631.3 L336,631.3 L336,626.0 L335,626.0 L335,622.9 L334,622.9 L334,623.8 L333,623.8 L333,623.5 L332,623.5 L332,626.2 L331,626.2 L331,629.1 L330,629.1 L330,652.4 L329,652.4 L329,643.8 L328,643.8 L328,618.1 L327,618.1 L327,615.7 L326,615.7 L326,612.2 L325,612.2 L325,614.4 L324,614.4 L324,618.1 L323,618.1 L323,621.9 L322,621.9 L322,656.8 L321,656.8 L321,644.8 L320,644.8 L320,629.8 L319,629.8 L319,658.3 L318,658.3 L318,661.6 L317,661.6 L317,669.6 L316,669.6 L316,672.9 L315,672.9 L315,677.5 L314,677.5 L314,694.5 L313,694.5 L313,716.5 L312,716.5 L312,661.8 L311,661.8 L311,639.4 L310,639.4 L310,617.5 L309,617.5 L309,611.0 L308,611.0 L308,608.7 L307,608.7 L307,618.0 L306,618.0 L306,628.2 L305,628.2 L305,642.6 L304,642.6 L304,646.6 L303,646.6 L303,639.0 L302,639.0 L302,639.3 L301,639.3 L301,632.8 L300,632.8 L300,631.9 L299,631.9 L299,629.1 L298,629.1 L298,629.6 L297,629.6 L297,631.4 L296,631.4 L296,637.9 L295,637.9 L295,642.2 L294,642.2 L294,639.1 L293,639.1 L293,639.5 L292,639.5 L292,643.0 L291,643.0 L291,652.4 L290,652.4 L290,646.5 L289,646.5 L289,644.5 L288,644.5 L288,636.3 L287,636.3 L287,627.0 L286,627.0 L286,621.9 L285,621.9 L285,615.1 L284,615.1 L284,611.7 L283,611.7 L283,607.9 L282,607.9 L282,604.9 L281,604.9 L281,603.1 L280,603.1 L280,604.7 L279,604.7 L279,606.9 L278,606.9 L278,612.7 L277,612.7 L277,620.4 L276,620.4 L276,622.6 L275,622.6 L275,626.3 L274,626.3 L274,629.2 L273,629.2 L273,629.9 L272,629.9 L272,631.3 L271,631.3 L271,632.6 L270,632.6 L270,636.2 L269,636.2 L269,645.4 L268,645.4 L268,661.2 L267,661.2 L267,668.4 L266,668.4 L266,681.6 L265,681.6 L265,672.8 L264,672.8 L264,659.6 L263,659.6 L263,651.0 L262,651.0 L262,643.4 L261,643.4 L261,636.7 L260,636.7 L260,632.1 L259,632.1 L259,628.9 L258,628.9 L258,626.1 L257,626.1 L257,628.6 L256,628.6 L256,629.1 L255,629.1 L255,629.7 L254,629.7 L254,629.9 L253,629.9 L253,632.6 L252,632.6 L252,637.2 L251,637.2 L251,649.5 L250,649.5 L250,646.5 L249,646.5 L249,643.7 L248,643.7 L248,641.1 L247,641.1 L247,639.3 L246,639.3 L246,615.9 L245,615.9 L245,606.8 L244,606.8 L244,605.4 L243,605.4 L243,611.7 L242,611.7 L242,616.8 L241,616.8 L241,621.9 L240,621.9 L240,619.5 L239,619.5 L239,617.7 L238,617.7 L238,614.2 L237,614.2 L237,630.9 L236,630.9 L236,638.9 L235,638.9 L235,655.4 L234,655.4 L234,661.4 L233,661.4 L233,668.5 L232,668.5 L232,666.1 L231,666.1 L231,661.2 L230,661.2 L230,655.4 L229,655.4 L229,634.3 L228,634.3 L228,620.1 L227,620.1 L227,614.6 L226,614.6 L226,608.7 L225,608.7 L225,603.1 L224,603.1 L224,603.0 L223,603.0 L223,603.0 L222,603.0 L222,603.0 L221,603.0 L221,603.0 L220,603.0 L220,603.0 L219,603.0 L219,603.0 L218,603.0 L218,603.0 L217,603.0 L217,603.0 L216,603.0 L216,603.0 L215,603.0 L215,603.1 L214,603.1 L214,603.1 L213,603.1 L213,613.1 L212,613.1 L212,609.4 L211,609.4 L211,606.6 L210,606.6 L210,603.5 L209,603.5 L209,624.8 L208,624.8 L208,603.0 L207,603.0 L207,603.0 L206,603.0 L206,603.0 L205,603.0 L205,603.0 L204,603.0 L204,603.0 L203,603.0 L203,603.0 L202,603.0 L202,603.0 L201,603.0 L201,603.1 L200,603.1 L200,603.4 L199,603.4 L199,609.7 L198,609.7 L198,609.7 L197,609.7 L197,603.0 L196,603.0 L196,603.0 L195,603.0 L195,603.0 L194,603.0 L194,603.0 L193,603.0 L193,603.0 L192,603.0 L192,603.0 L191,603.0 L191,603.0 L190,603.0 L190,603.9 L189,603.9 L189,603.9 L188,603.9 L188,604.0 L187,604.0 L187,604.0 L186,604.0 L186,604.1 L185,604.1 L185,604.1 L184,604.1 L184,604.2 L183,604.2 L183,604.2 L182,604.2 L182,604.3 L181,604.3 L181,604.3 L180,604.3 L180,604.4 L179,604.4 L179,604.4 L178,604.4 L178,604.5 L177,604.5 L177,604.5 L176,604.5 L176,604.6 L175,604.6 L175,604.6 L174,604.6 L174,604.7 L173,604.7 L173,604.9 L172,604.9 L172,604.8 L171,604.8 L171,605.1 L170,605.1 L170,605.4 L169,605.4 L169,605.1 L168,605.1 L168,605.3 L167,605.3 L167,605.1 L166,605.1 L166,604.8 L165,604.8 L165,604.9 L164,604.9 L164,604.8 L163,604.8 L163,604.7 L162,604.7 L162,604.5 L161,604.5 L161,604.4 L160,604.4 L160,604.3 L159,604.3 L159,604.2 L158,604.2 L158,604.2 L157,604.2 L157,604.2 L156,604.2 L156,604.2 L155,604.2 L155,604.2 L154,604.2 L154,604.2 L153,604.2 L153,604.2 L152,604.2 L152,604.2 L151,604.2 L151,604.2 L150,604.2 L150,604.2 L149,604.2 L149,604.2 L148,604.2 L148,604.9 L147,604.9 L147,606.0 L146,606.0 L146,604.8 L145,604.8 L145,603.9 L144,603.9 L144,603.0 L143,603.0 L143,603.0 L142,603.0 L142,603.0 L141,603.0 L141,603.0 L140,603.0 L140,603.0 L139,603.0 L139,603.0 L138,603.0 L138,603.0 L137,603.0 L137,603.0 L136,603.0 L136,603.0 L135,603.0 L135,603.0 L134,603.0 L134,603.0 L133,603.0 L133,603.0 L132,603.0 L132,603.0 L131,603.0 L131,603.0 L130,603.0 L130,603.0 L129,603.0 L129,603.0 L128,603.0 L128,603.0 L127,603.0 L127,603.4 L126,603.4 L126,603.0 L125,603.0 L125,604.0 L124,604.0 L124,604.3 L123,604.3 L123,604.6 L122,604.6 L122,605.0 L121,605.0 L121,605.0 L120,605.0 L120,605.7 L119,605.7 L119,604.9 L118,604.9 L118,603.9 L117,603.9 L117,603.0 L116,603.0 L116,603.0 L115,603.0 L115,603.0 L114,603.0 L114,603.0 L113,603.0 L113,603.0 L112,603.0 L112,603.0 L111,603.0 L111,603.0 L110,603.0 L110,603.0 L109,603.0 L109,603.0 L108,603.0 L108,603.0 L107,603.0 L107,603.0 L106,603.0 L106,603.0 L105,603.0 L105,603.0 L104,603.0 L104,603.0 L103,603.0 L103,603.0 L102,603.0 L102,603.0 L101,603.0 L101,603.0 L100,603.0 L100,603.0 L99,603.0 L99,603.0 L98,603.0 L98,603.0 L97,603.0 L97,603.0 L96,603.0 L96,603.0 L95,603.0 L95,603.0 L94,603.0 L94,603.0 L93,603.0 L93,603.0 L92,603.0 L92,603.0 L91,603.0 L91,603.0 L90,603.0 L90,603.0 L89,603.0 L89,603.0 L88,603.0 L88,603.0 L87,603.0 L87,603.0 L86,603.0 L86,603.0 L85,603.0 L85,603.0 L84,603.0 L84,603.0 L83,603.0 L83,603.0 L82,603.0 L82,603.4 L81,603.4 L81,604.8 L80,604.8 L80,603.4 L79,603.4 L79,603.0 L78,603.0 L78,603.0 L77,603.0 L77,603.0 L76,603.0 L76,603.0 L75,603.0 L75,603.0 L74,603.0 L74,603.0 L73,603.0 L73,603.0 L72,603.0 L72,603.0 L71,603.0 L71,603.0 L70,603.0 L70,603.0 L69,603.0 L69,603.0 L68,603.0 L68,603.0 L67,603.0 L67,603.4 L66,603.4 L66,603.0 L65,603.0 L65,604.4 L64,604.4 L64,604.8 L63,604.8 L63,604.0 L62,604.0 L62,603.4 L61,603.4 L61,603.0 L60,603.0 L60,603.0 L59,603.0 L59,603.0 L58,603.0 L58,603.0 L57,603.0 L57,603.0 L56,603.0 L56,603.0 L55,603.0 L55,603.0 L54,603.0 L54,603.0 L53,603.0 L53,603.0 L52,603.0 L52,603.0 L51,603.0 L51,603.0 L50,603.0 L50,603.0 L49,603.0 L49,603.0 L48,603.0 L48,603.0 L47,603.0 L47,603.0 L46,603.0 L46,603.0 L45,603.0 L45,603.0 L44,603.0 L44,603.0 L43,603.0 L43,603.0 L42,603.0 L42,603.0 L41,603.0 L41,603.0 L40,603.0 L40,603.0 L39,603.0 L39,603.0 L38,603.0 L38,603.0 L37,603.0 L37,603.0 L36,603.0 L36,603.0 L35,603.0 L35,603.0 L34,603.0 L34,603.0 L33,603.0 L33,603.0 L32,603.0 L32,603.0 L31,603.0 L31,603.0 L30,603.0 L30,603.0 L29,603.0 L29,603.0 L28,603.0 L28,603.0 L27,603.0 L27,603.0 L26,603.0 L26,603.0 L25,603.0 L25,603.0 L24,603.0 L24,603.0 L23,603.0 L23,603.0 L22,603.0 L22,603.0 L21,603.0 L21,603.4 L20,603.4 L20,603.0 L19,603.0 L19,603.0 L18,603.0 L18,603.0 L17,603.0 L17,603.0 L16,603.0 L16,603.0 L15,603.0 L15,603.0 L14,603.0 L14,603.0 L13,603.0 L13,603.0 L12,603.0 L12,603.0 L11,603.0 L11,603.0 L10,603.0 L10,603.0 L9,603.0 L9,603.0 L8,603.0 L8,603.0 L7,603.0Z" fill="#48db96" shape-rendering="crispEdges"/>
<rect x="341" y="78" width="1" height="700" fill="#c8201c" />
<path shape-rendering="geometricPrecision" d="M336,66 H347 V74 L342,78 H341 L336,74 Z" fill="#33a8e0"/>
<rect x="341" y="74" width="1" height="4" fill="#12384a" />
<defs><linearGradient id="gL" x1="0" y1="0" x2="0" y2="1"><stop offset="0" stop-color="#a09c96"/><stop offset="1" stop-color="#5c605d"/></linearGradient><linearGradient id="gD" x1="0" y1="0" x2="0" y2="1"><stop offset="0" stop-color="#585b59"/><stop offset="1" stop-color="#2c2e2d"/></linearGradient></defs>
<rect x="19" y="81" width="12" height="12" fill="#b4b0a8"/>
<path shape-rendering="geometricPrecision" d="M20,82 L30,82 L20,92Z" fill="url(#gL)"/>
<path shape-rendering="geometricPrecision" d="M20,92 L30,92 L30,82Z" fill="url(#gD)"/>
<path shape-rendering="geometricPrecision" d="M20.3,91 L29,82.3" stroke="#d0d0d0" stroke-width="0.8"/>
<path shape-rendering="geometricPrecision" d="M20.8,91.8 L29.8,82.8" stroke="#000" stroke-width="1.2"/>
<rect x="1129" y="81" width="12" height="12" fill="#b4b0a8"/>
<path shape-rendering="geometricPrecision" d="M1130,82 L1140,82 L1140,92Z" fill="url(#gL)"/>
<path shape-rendering="geometricPrecision" d="M1130,82 L1130,92 L1140,92Z" fill="url(#gD)"/>
<path shape-rendering="geometricPrecision" d="M1131,82.3 L1139.7,91" stroke="#d0d0d0" stroke-width="0.8"/>
<path shape-rendering="geometricPrecision" d="M1130.2,82.8 L1139.2,91.8" stroke="#000" stroke-width="1.2"/>
<rect x="1154" y="78" width="74" height="1" fill="#000" />
<rect x="1227" y="78" width="1" height="710" fill="#000" />
<rect x="1154" y="79" width="73" height="699" fill="#232323" />
<rect x="1154" y="428" width="73" height="1" fill="#000" />
<rect x="1154" y="79" width="2" height="1" fill="#c8c8c8" />
<rect x="1154" y="88" width="2" height="1" fill="#c8c8c8" />
<rect x="1154" y="418" width="2" height="1" fill="#c8c8c8" />
<rect x="1154" y="106" width="2" height="1" fill="#c8c8c8" />
<rect x="1154" y="400" width="2" height="1" fill="#c8c8c8" />
<rect x="1154" y="114" width="2" height="1" fill="#c8c8c8" />
<rect x="1154" y="392" width="2" height="1" fill="#c8c8c8" />
<rect x="1154" y="122" width="2" height="1" fill="#c8c8c8" />
<rect x="1154" y="384" width="2" height="1" fill="#c8c8c8" />
<rect x="1154" y="143" width="2" height="1" fill="#c8c8c8" />
<rect x="1154" y="363" width="2" height="1" fill="#c8c8c8" />
<rect x="1154" y="155" width="2" height="1" fill="#c8c8c8" />
<rect x="1154" y="351" width="2" height="1" fill="#c8c8c8" />
<rect x="1154" y="175" width="2" height="1" fill="#c8c8c8" />
<rect x="1154" y="331" width="2" height="1" fill="#c8c8c8" />
<rect x="1154" y="183" width="2" height="1" fill="#c8c8c8" />
<rect x="1154" y="323" width="2" height="1" fill="#c8c8c8" />
<rect x="1154" y="198" width="2" height="1" fill="#c8c8c8" />
<rect x="1154" y="308" width="2" height="1" fill="#c8c8c8" />
<rect x="1154" y="204" width="2" height="1" fill="#c8c8c8" />
<rect x="1154" y="302" width="2" height="1" fill="#c8c8c8" />
<rect x="1154" y="214" width="2" height="1" fill="#c8c8c8" />
<rect x="1154" y="292" width="2" height="1" fill="#c8c8c8" />
<rect x="1154" y="218" width="2" height="1" fill="#c8c8c8" />
<rect x="1154" y="288" width="2" height="1" fill="#c8c8c8" />
<rect x="1154" y="225" width="2" height="1" fill="#c8c8c8" />
<rect x="1154" y="281" width="2" height="1" fill="#c8c8c8" />
<rect x="1154" y="228" width="2" height="1" fill="#c8c8c8" />
<rect x="1154" y="278" width="2" height="1" fill="#c8c8c8" />
<rect x="1154" y="231" width="2" height="1" fill="#c8c8c8" />
<rect x="1154" y="275" width="2" height="1" fill="#c8c8c8" />
<rect x="1154" y="233" width="2" height="1" fill="#c8c8c8" />
<rect x="1154" y="273" width="2" height="1" fill="#c8c8c8" />
<rect x="1154" y="236" width="2" height="1" fill="#c8c8c8" />
<rect x="1154" y="270" width="2" height="1" fill="#c8c8c8" />
<rect x="1154" y="97" width="4" height="1" fill="#c8c8c8" />
<text x="1162" y="102" font-size="11" fill="#bcbcbc" text-anchor="start" >-1</text>
<rect x="1154" y="409" width="4" height="1" fill="#c8c8c8" />
<text x="1162" y="414" font-size="11" fill="#bcbcbc" text-anchor="start" >-1</text>
<rect x="1154" y="129" width="4" height="1" fill="#c8c8c8" />
<text x="1162" y="134" font-size="11" fill="#bcbcbc" text-anchor="start" >-3</text>
<rect x="1154" y="377" width="4" height="1" fill="#c8c8c8" />
<text x="1162" y="382" font-size="11" fill="#bcbcbc" text-anchor="start" >-3</text>
<rect x="1154" y="166" width="4" height="1" fill="#c8c8c8" />
<text x="1162" y="171" font-size="11" fill="#bcbcbc" text-anchor="start" >-6</text>
<rect x="1154" y="341" width="4" height="1" fill="#c8c8c8" />
<text x="1162" y="346" font-size="11" fill="#bcbcbc" text-anchor="start" >-6</text>
<rect x="1154" y="191" width="4" height="1" fill="#c8c8c8" />
<text x="1162" y="196" font-size="11" fill="#bcbcbc" text-anchor="start" >-9</text>
<rect x="1154" y="315" width="4" height="1" fill="#c8c8c8" />
<text x="1162" y="320" font-size="11" fill="#bcbcbc" text-anchor="start" >-9</text>
<rect x="1154" y="209" width="4" height="1" fill="#c8c8c8" />
<text x="1162" y="214" font-size="11" fill="#bcbcbc" text-anchor="start" >-12</text>
<rect x="1154" y="297" width="4" height="1" fill="#c8c8c8" />
<text x="1162" y="302" font-size="11" fill="#bcbcbc" text-anchor="start" >-12</text>
<rect x="1154" y="222" width="4" height="1" fill="#c8c8c8" />
<text x="1162" y="227" font-size="11" fill="#bcbcbc" text-anchor="start" >-15</text>
<rect x="1154" y="284" width="4" height="1" fill="#c8c8c8" />
<text x="1162" y="289" font-size="11" fill="#bcbcbc" text-anchor="start" >-15</text>
<rect x="1154" y="237" width="4" height="1" fill="#c8c8c8" />
<text x="1162" y="242" font-size="11" fill="#bcbcbc" text-anchor="start" >-21</text>
<rect x="1154" y="269" width="4" height="1" fill="#c8c8c8" />
<text x="1162" y="274" font-size="11" fill="#bcbcbc" text-anchor="start" >-21</text>
<rect x="1154" y="253" width="4" height="1" fill="#c8c8c8" />
<text x="1162" y="258" font-size="11" fill="#bcbcbc" text-anchor="start" >-</text>
<text x="1166" y="259" font-size="14" fill="#bcbcbc" text-anchor="start" transform="translate(1166,0) scale(0.95,1) translate(-1166,0)">∞</text>
<text x="1162" y="91" font-size="11" fill="#bcbcbc" text-anchor="start" >dB</text>
<rect x="1154" y="429" width="2" height="1" fill="#c8c8c8" />
<rect x="1154" y="777" width="2" height="1" fill="#c8c8c8" />
<rect x="1154" y="438" width="2" height="1" fill="#c8c8c8" />
<rect x="1154" y="768" width="2" height="1" fill="#c8c8c8" />
<rect x="1154" y="456" width="2" height="1" fill="#c8c8c8" />
<rect x="1154" y="750" width="2" height="1" fill="#c8c8c8" />
<rect x="1154" y="464" width="2" height="1" fill="#c8c8c8" />
<rect x="1154" y="742" width="2" height="1" fill="#c8c8c8" />
<rect x="1154" y="472" width="2" height="1" fill="#c8c8c8" />
<rect x="1154" y="734" width="2" height="1" fill="#c8c8c8" />
<rect x="1154" y="493" width="2" height="1" fill="#c8c8c8" />
<rect x="1154" y="713" width="2" height="1" fill="#c8c8c8" />
<rect x="1154" y="505" width="2" height="1" fill="#c8c8c8" />
<rect x="1154" y="701" width="2" height="1" fill="#c8c8c8" />
<rect x="1154" y="525" width="2" height="1" fill="#c8c8c8" />
<rect x="1154" y="681" width="2" height="1" fill="#c8c8c8" />
<rect x="1154" y="533" width="2" height="1" fill="#c8c8c8" />
<rect x="1154" y="673" width="2" height="1" fill="#c8c8c8" />
<rect x="1154" y="548" width="2" height="1" fill="#c8c8c8" />
<rect x="1154" y="658" width="2" height="1" fill="#c8c8c8" />
<rect x="1154" y="554" width="2" height="1" fill="#c8c8c8" />
<rect x="1154" y="652" width="2" height="1" fill="#c8c8c8" />
<rect x="1154" y="564" width="2" height="1" fill="#c8c8c8" />
<rect x="1154" y="642" width="2" height="1" fill="#c8c8c8" />
<rect x="1154" y="568" width="2" height="1" fill="#c8c8c8" />
<rect x="1154" y="638" width="2" height="1" fill="#c8c8c8" />
<rect x="1154" y="575" width="2" height="1" fill="#c8c8c8" />
<rect x="1154" y="631" width="2" height="1" fill="#c8c8c8" />
<rect x="1154" y="578" width="2" height="1" fill="#c8c8c8" />
<rect x="1154" y="628" width="2" height="1" fill="#c8c8c8" />
<rect x="1154" y="581" width="2" height="1" fill="#c8c8c8" />
<rect x="1154" y="625" width="2" height="1" fill="#c8c8c8" />
<rect x="1154" y="583" width="2" height="1" fill="#c8c8c8" />
<rect x="1154" y="623" width="2" height="1" fill="#c8c8c8" />
<rect x="1154" y="586" width="2" height="1" fill="#c8c8c8" />
<rect x="1154" y="620" width="2" height="1" fill="#c8c8c8" />
<rect x="1154" y="447" width="4" height="1" fill="#c8c8c8" />
<text x="1162" y="452" font-size="11" fill="#bcbcbc" text-anchor="start" >-1</text>
<rect x="1154" y="759" width="4" height="1" fill="#c8c8c8" />
<text x="1162" y="764" font-size="11" fill="#bcbcbc" text-anchor="start" >-1</text>
<rect x="1154" y="479" width="4" height="1" fill="#c8c8c8" />
<text x="1162" y="484" font-size="11" fill="#bcbcbc" text-anchor="start" >-3</text>
<rect x="1154" y="727" width="4" height="1" fill="#c8c8c8" />
<text x="1162" y="732" font-size="11" fill="#bcbcbc" text-anchor="start" >-3</text>
<rect x="1154" y="516" width="4" height="1" fill="#c8c8c8" />
<text x="1162" y="521" font-size="11" fill="#bcbcbc" text-anchor="start" >-6</text>
<rect x="1154" y="691" width="4" height="1" fill="#c8c8c8" />
<text x="1162" y="696" font-size="11" fill="#bcbcbc" text-anchor="start" >-6</text>
<rect x="1154" y="541" width="4" height="1" fill="#c8c8c8" />
<text x="1162" y="546" font-size="11" fill="#bcbcbc" text-anchor="start" >-9</text>
<rect x="1154" y="665" width="4" height="1" fill="#c8c8c8" />
<text x="1162" y="670" font-size="11" fill="#bcbcbc" text-anchor="start" >-9</text>
<rect x="1154" y="559" width="4" height="1" fill="#c8c8c8" />
<text x="1162" y="564" font-size="11" fill="#bcbcbc" text-anchor="start" >-12</text>
<rect x="1154" y="647" width="4" height="1" fill="#c8c8c8" />
<text x="1162" y="652" font-size="11" fill="#bcbcbc" text-anchor="start" >-12</text>
<rect x="1154" y="572" width="4" height="1" fill="#c8c8c8" />
<text x="1162" y="577" font-size="11" fill="#bcbcbc" text-anchor="start" >-15</text>
<rect x="1154" y="634" width="4" height="1" fill="#c8c8c8" />
<text x="1162" y="639" font-size="11" fill="#bcbcbc" text-anchor="start" >-15</text>
<rect x="1154" y="587" width="4" height="1" fill="#c8c8c8" />
<text x="1162" y="592" font-size="11" fill="#bcbcbc" text-anchor="start" >-21</text>
<rect x="1154" y="619" width="4" height="1" fill="#c8c8c8" />
<text x="1162" y="624" font-size="11" fill="#bcbcbc" text-anchor="start" >-21</text>
<rect x="1154" y="603" width="4" height="1" fill="#c8c8c8" />
<text x="1162" y="608" font-size="11" fill="#bcbcbc" text-anchor="start" >-</text>
<text x="1166" y="609" font-size="14" fill="#bcbcbc" text-anchor="start" transform="translate(1166,0) scale(0.95,1) translate(-1166,0)">∞</text>
<text x="1162" y="441" font-size="11" fill="#bcbcbc" text-anchor="start" >dB</text>
<rect x="1203" y="245" width="22" height="18" fill="#000" />
<text x="1214" y="258" font-size="9.5" fill="#3a9ad0" text-anchor="middle" >L</text>
<rect x="1203" y="595" width="22" height="18" fill="#000" />
<text x="1214" y="608" font-size="9.5" fill="#3a9ad0" text-anchor="middle" >R</text>
<rect x="7" y="778" width="1220" height="9" fill="#1f1f1f" />
<rect x="6" y="787" width="1222" height="1" fill="#000" />
<rect x="605" y="781" width="1" height="1" fill="#c8c8c0" />
<rect x="605" y="783" width="1" height="1" fill="#c8c8c0" />
<rect x="607" y="781" width="1" height="1" fill="#c8c8c0" />
<rect x="607" y="783" width="1" height="1" fill="#c8c8c0" />
<rect x="609" y="781" width="1" height="1" fill="#c8c8c0" />
<rect x="609" y="783" width="1" height="1" fill="#c8c8c0" />
<rect x="611" y="781" width="1" height="1" fill="#c8c8c0" />
<rect x="611" y="783" width="1" height="1" fill="#c8c8c0" />
<rect x="613" y="781" width="1" height="1" fill="#c8c8c0" />
<rect x="613" y="783" width="1" height="1" fill="#c8c8c0" />
<rect x="615" y="781" width="1" height="1" fill="#c8c8c0" />
<rect x="615" y="783" width="1" height="1" fill="#c8c8c0" />
<rect x="617" y="781" width="1" height="1" fill="#c8c8c0" />
<rect x="617" y="783" width="1" height="1" fill="#c8c8c0" />
<rect x="619" y="781" width="1" height="1" fill="#c8c8c0" />
<rect x="619" y="783" width="1" height="1" fill="#c8c8c0" />
<rect x="621" y="781" width="1" height="1" fill="#c8c8c0" />
<rect x="621" y="783" width="1" height="1" fill="#c8c8c0" />
<rect x="623" y="781" width="1" height="1" fill="#c8c8c0" />
<rect x="623" y="783" width="1" height="1" fill="#c8c8c0" />
<rect x="625" y="781" width="1" height="1" fill="#c8c8c0" />
<rect x="625" y="783" width="1" height="1" fill="#c8c8c0" />
<rect x="627" y="781" width="1" height="1" fill="#c8c8c0" />
<rect x="627" y="783" width="1" height="1" fill="#c8c8c0" />
<path shape-rendering="geometricPrecision" d="M1204,784 L1207,781 L1210,784Z" fill="#b8b8b8"/>
<path shape-rendering="geometricPrecision" d="M1165,71 V64.5 A6,6 0 0 1 1177,64.5 V71 H1172 V64 A1,1 0 0 0 1170,64 V71 Z" fill="#3ab0e8"/>
<rect x="1167" y="67" width="2" height="3" fill="#1e2a30" />
<rect x="1173" y="67" width="2" height="3" fill="#1e2a30" />
<rect x="420" y="87" width="125" height="26" fill="#262626" />
<rect x="420" y="87" width="9" height="26" fill="#484d4b" />
<rect x="423" y="95" width="1" height="1" fill="#d0d0d0" />
<rect x="425" y="95" width="1" height="1" fill="#d0d0d0" />
<rect x="423" y="97" width="1" height="1" fill="#d0d0d0" />
<rect x="425" y="97" width="1" height="1" fill="#d0d0d0" />
<rect x="423" y="99" width="1" height="1" fill="#d0d0d0" />
<rect x="425" y="99" width="1" height="1" fill="#d0d0d0" />
<rect x="423" y="101" width="1" height="1" fill="#d0d0d0" />
<rect x="425" y="101" width="1" height="1" fill="#d0d0d0" />
<rect x="423" y="103" width="1" height="1" fill="#d0d0d0" />
<rect x="425" y="103" width="1" height="1" fill="#d0d0d0" />
<rect x="431" y="103" width="1" height="2" fill="#c8c8c8" />
<rect x="433" y="102" width="1" height="3" fill="#c8c8c8" />
<rect x="435" y="101" width="1" height="4" fill="#c8c8c8" />
<rect x="437" y="100" width="1" height="5" fill="#c8c8c8" />
<rect x="439" y="99" width="1" height="6" fill="#c8c8c8" />
<rect x="441" y="98" width="1" height="7" fill="#c8c8c8" />
<rect x="443" y="95" width="1" height="10" fill="#c8c8c8" />
<rect x="445" y="91" width="1" height="14" fill="#c8c8c8" />
<circle cx="460.5" cy="99.5" r="9" fill="#9a9890" shape-rendering="geometricPrecision"/>
<rect x="460" y="90" width="1" height="9" fill="#000" />
<circle cx="460.5" cy="99.5" r="2" fill="#000" shape-rendering="geometricPrecision"/>
<rect x="455" y="102" width="1" height="1" fill="#3a90c0" />
<rect x="465" y="102" width="1" height="1" fill="#3a90c0" />
<rect x="458" y="105" width="1" height="1" fill="#3a90c0" />
<rect x="462" y="105" width="1" height="1" fill="#3a90c0" />
<text x="474" y="103" font-size="11" fill="#3aa0e0" text-anchor="start" >+0</text>
<text x="490" y="103" font-size="11" fill="#bcbcbc" text-anchor="start" >dB</text>
<rect x="526" y="90" width="1" height="20" fill="#6a6a6a" />
<g shape-rendering="geometricPrecision" stroke="#3ab0e8" stroke-linecap="butt"><path d="M532.5,103.5 L536,100" stroke-width="1.6"/><path d="M533.5,97.5 L538.5,102.5" stroke-width="1.6"/><path d="M536,100 L539,97" stroke-width="3.2"/><path d="M537.8,95.2 L541,98.4" stroke-width="2"/></g>
<circle shape-rendering="geometricPrecision" cx="1172.5" cy="22.5" r="4" fill="none" stroke="#8a908c" stroke-width="1.3"/>
<rect x="1170" y="22" width="5" height="1" fill="#8a908c" />
<path shape-rendering="geometricPrecision" d="M1175,25 L1179,29" stroke="#8a908c" stroke-width="1.8"/>
<path shape-rendering="geometricPrecision" d="M1172.5,14 l-2,2 h4z M1172.5,31 l-2,-2 h4z M1164,22.5 l2,-2 v4z M1181,22.5 l-2,-2 v4z" fill="#8a908c"/>
<rect x="1194.5" y="15.5" width="13" height="12" fill="none" stroke="#c8c8c8" stroke-width="1"/>
<rect x="1195" y="17" width="12" height="1" fill="#c8c8c8" />
<rect x="1195" y="18" width="12" height="3" fill="#505553" />
<rect x="1195" y="21" width="12" height="1" fill="#c8c8c8" />
<rect x="1195" y="23" width="12" height="4" fill="#505553" />
<text x="10" y="814" font-size="16" fill="#3aa0d8" text-anchor="start" >0:05.019</text>
<rect x="403" y="801" width="9" height="9" fill="#6a706c" />
<path shape-rendering="geometricPrecision" d="M433,801 L443,805.5 L433,810Z" fill="#c4c4c4"/>
<rect x="464" y="801" width="3" height="9" fill="#6a706c" />
<rect x="469" y="801" width="3" height="9" fill="#6a706c" />
<rect x="492" y="801" width="2" height="9" fill="#c4c4c4" />
<path shape-rendering="geometricPrecision" d="M503,801 L495,805.5 L503,810Z" fill="#c4c4c4"/>
<path shape-rendering="geometricPrecision" d="M528,801 L520,805.5 L528,810Z M536,801 L528,805.5 L536,810Z" fill="#c4c4c4"/>
<path shape-rendering="geometricPrecision" d="M550,801 L558,805.5 L550,810Z M558,801 L566,805.5 L558,810Z" fill="#c4c4c4"/>
<path shape-rendering="geometricPrecision" d="M583,801 L591,805.5 L583,810Z" fill="#c4c4c4"/>
<rect x="592" y="801" width="2" height="9" fill="#c4c4c4" />
<circle cx="618" cy="805.5" r="5" fill="#a83232" shape-rendering="geometricPrecision"/>
<rect x="641" y="802" width="2" height="9" fill="#7ee84a" />
<rect x="641" y="809" width="14" height="2" fill="#7ee84a" />
<rect x="653" y="805" width="2" height="6" fill="#7ee84a" />
<rect x="641" y="802" width="6" height="2" fill="#7ee84a" />
<path d="M646,800 L653,803 L646,806Z" fill="#7ee84a" shape-rendering="geometricPrecision"/>
<g fill="none" stroke="#c4c4c4" stroke-width="1.5" shape-rendering="geometricPrecision"><path d="M674.5,800 V803 L672.2,805.5 L674.5,808 V811"/><path d="M677.5,800 V803 L679.8,805.5 L677.5,808 V811"/><path d="M670,805.5 H672.5" stroke-width="2"/><path d="M679.5,805.5 H684" stroke-width="2"/></g>
<path d="M683,802 L687,805.5 L683,809Z" fill="#c4c4c4" shape-rendering="geometricPrecision"/>
<circle shape-rendering="geometricPrecision" cx="970.5" cy="806.5" r="4" fill="none" stroke="#c4c4c4" stroke-width="1.4"/>
<path shape-rendering="geometricPrecision" d="M973.5,809.5 L977.5,813.5" stroke="#c4c4c4" stroke-width="2"/>
<path shape-rendering="geometricPrecision" d="M968.0,806.5 H973.0 M970.5,804.0 V809.0" stroke="#c4c4c4" stroke-width="1.2"/>
<path shape-rendering="geometricPrecision" d="M963.5,799 V814 M961.5,801 l2,-2.5 l2,2.5 M961.5,812 l2,2.5 l2,-2.5" stroke="#c4c4c4" stroke-width="1" fill="none"/>
<circle shape-rendering="geometricPrecision" cx="1000.5" cy="806.5" r="4" fill="none" stroke="#c4c4c4" stroke-width="1.4"/>
<path shape-rendering="geometricPrecision" d="M1003.5,809.5 L1007.5,813.5" stroke="#c4c4c4" stroke-width="2"/>
<path shape-rendering="geometricPrecision" d="M998.0,806.5 H1003.0" stroke="#c4c4c4" stroke-width="1.2"/>
<path shape-rendering="geometricPrecision" d="M993.5,799 V814 M991.5,801 l2,-2.5 l2,2.5 M991.5,812 l2,2.5 l2,-2.5" stroke="#c4c4c4" stroke-width="1" fill="none"/>
<circle shape-rendering="geometricPrecision" cx="1029.5" cy="806.5" r="4" fill="none" stroke="#c4c4c4" stroke-width="1.4"/>
<path shape-rendering="geometricPrecision" d="M1032.5,809.5 L1036.5,813.5" stroke="#c4c4c4" stroke-width="2"/>
<path shape-rendering="geometricPrecision" d="M1027.0,806.5 H1032.0 M1029.5,804.0 V809.0" stroke="#c4c4c4" stroke-width="1.2"/>
<path shape-rendering="geometricPrecision" d="M1021,799.5 H1038 M1023.5,797.5 l-2.5,2 l2.5,2 M1035.5,797.5 l2.5,2 l-2.5,2" stroke="#c4c4c4" stroke-width="1.2" fill="none"/>
<circle shape-rendering="geometricPrecision" cx="1059.5" cy="806.5" r="4" fill="none" stroke="#6a706c" stroke-width="1.4"/>
<path shape-rendering="geometricPrecision" d="M1062.5,809.5 L1066.5,813.5" stroke="#6a706c" stroke-width="2"/>
<path shape-rendering="geometricPrecision" d="M1057.0,806.5 H1062.0" stroke="#6a706c" stroke-width="1.2"/>
<path shape-rendering="geometricPrecision" d="M1051,799.5 H1068 M1053.5,797.5 l-2.5,2 l2.5,2 M1065.5,797.5 l2.5,2 l-2.5,2" stroke="#6a706c" stroke-width="1.2" fill="none"/>
<circle shape-rendering="geometricPrecision" cx="1089.5" cy="806.5" r="4" fill="none" stroke="#6a706c" stroke-width="1.4"/>
<path shape-rendering="geometricPrecision" d="M1092.5,809.5 L1096.5,813.5" stroke="#6a706c" stroke-width="2"/>
<path shape-rendering="geometricPrecision" d="M1087.0,806.5 H1092.0" stroke="#6a706c" stroke-width="1.2"/>
<path shape-rendering="geometricPrecision" d="M1089.5,797 l-1.5,1.5 h3z M1089.5,816 l-1.5,-1.5 h3z M1081,806.5 l1.5,-1.5 v3z M1098,806.5 l-1.5,-1.5 v3z" fill="#6a706c"/>
<circle shape-rendering="geometricPrecision" cx="1123.5" cy="806" r="4" fill="none" stroke="#c4c4c4" stroke-width="1.4"/>
<path shape-rendering="geometricPrecision" d="M1126.5,809 L1130.5,813" stroke="#c4c4c4" stroke-width="2"/>
<circle shape-rendering="geometricPrecision" cx="1123.5" cy="806" r="3.4" fill="#5a605c"/>
<rect x="1115" y="800" width="2" height="12" fill="#6a706c" />
<path shape-rendering="geometricPrecision" d="M1114,802 L1111,806 L1114,810" stroke="#c4c4c4" stroke-width="1.2" fill="none"/>
<circle shape-rendering="geometricPrecision" cx="1153.5" cy="806" r="4" fill="none" stroke="#c4c4c4" stroke-width="1.4"/>
<path shape-rendering="geometricPrecision" d="M1156.5,809 L1160.5,813" stroke="#c4c4c4" stroke-width="2"/>
<circle shape-rendering="geometricPrecision" cx="1153.5" cy="806" r="3.4" fill="#5a605c"/>
<rect x="1141" y="800" width="2" height="12" fill="#6a706c" />
<path shape-rendering="geometricPrecision" d="M1144,802 L1147,806 L1144,810" stroke="#c4c4c4" stroke-width="1.2" fill="none"/>
<circle shape-rendering="geometricPrecision" cx="1183.5" cy="806" r="4" fill="none" stroke="#c4c4c4" stroke-width="1.4"/>
<path shape-rendering="geometricPrecision" d="M1186.5,809 L1190.5,813" stroke="#c4c4c4" stroke-width="2"/>
<circle shape-rendering="geometricPrecision" cx="1183.5" cy="806" r="3.4" fill="#5a605c"/>
<rect x="1171" y="800" width="2" height="12" fill="#6a706c" />
<rect x="1175" y="800" width="2" height="12" fill="#6a706c" />
<path shape-rendering="geometricPrecision" d="M1171,802 L1169,806 L1171,810 M1177,802 L1179,806 L1177,810" stroke="#c4c4c4" stroke-width="1.2" fill="none"/>
<circle shape-rendering="geometricPrecision" cx="1210.5" cy="806.5" r="4" fill="none" stroke="#6a706c" stroke-width="1.4"/>
<path shape-rendering="geometricPrecision" d="M1213.5,809.5 L1217.5,813.5" stroke="#6a706c" stroke-width="2"/>
<path shape-rendering="geometricPrecision" d="M1208.0,806.5 H1213.0 M1210.5,804.0 V809.0" stroke="#6a706c" stroke-width="1.2"/>
<path shape-rendering="geometricPrecision" d="M1203.5,799 V813 M1201,798.5 H1206 M1201,813.5 H1206" stroke="#6a706c" stroke-width="1" fill="none"/>
</svg>
</body></html>
